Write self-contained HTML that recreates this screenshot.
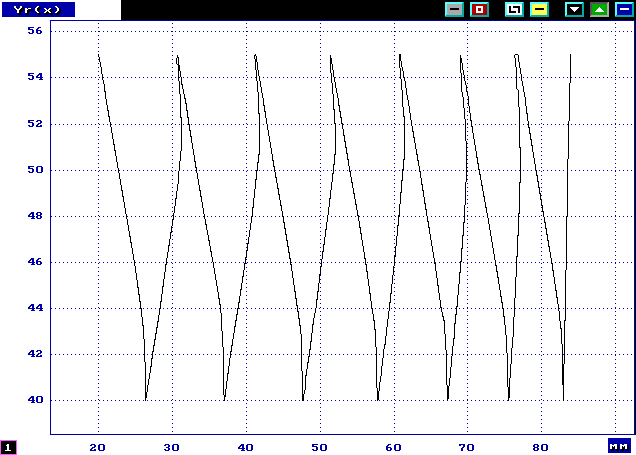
<!DOCTYPE html>
<html><head><meta charset="utf-8"><title>Yr(x)</title>
<style>html,body{margin:0;padding:0;background:#fff;width:636px;height:455px;overflow:hidden;font-family:"Liberation Sans",sans-serif}
svg{display:block}</style></head><body>
<svg width="636" height="455" viewBox="0 0 636 455" shape-rendering="crispEdges">
<rect width="636" height="455" fill="#fff"/>
<path fill="#000000" d="M121 0h515v1h-515zM121 1h515v1h-515zM121 2h324v1h-324zM464 2h6v1h-6zM489 2h16v1h-16zM524 2h6v1h-6zM549 2h16v1h-16zM584 2h6v1h-6zM609 2h6v1h-6zM634 2h2v1h-2zM121 3h324v1h-324zM464 3h6v1h-6zM489 3h16v1h-16zM524 3h6v1h-6zM549 3h16v1h-16zM584 3h6v1h-6zM609 3h6v1h-6zM634 3h2v1h-2zM121 4h324v1h-324zM464 4h6v1h-6zM489 4h16v1h-16zM524 4h6v1h-6zM549 4h16v1h-16zM567 4h15v1h-15zM584 4h6v1h-6zM609 4h6v1h-6zM634 4h2v1h-2zM121 5h324v1h-324zM464 5h6v1h-6zM489 5h16v1h-16zM524 5h6v1h-6zM549 5h16v1h-16zM567 5h15v1h-15zM584 5h6v1h-6zM609 5h6v1h-6zM634 5h2v1h-2zM121 6h324v1h-324zM464 6h6v1h-6zM489 6h16v1h-16zM509 6h2v1h-2zM513 6h7v1h-7zM524 6h6v1h-6zM549 6h16v1h-16zM567 6h15v1h-15zM584 6h6v1h-6zM609 6h6v1h-6zM634 6h2v1h-2zM16 7h2v1h-2zM22 7h2v1h-2zM38 7h3v1h-3zM58 7h1v1h-1zM121 7h324v1h-324zM464 7h6v1h-6zM489 7h16v1h-16zM509 7h2v1h-2zM513 7h7v1h-7zM524 7h6v1h-6zM549 7h16v1h-16zM567 7h3v1h-3zM579 7h3v1h-3zM584 7h6v1h-6zM609 7h6v1h-6zM634 7h2v1h-2zM17 8h1v1h-1zM21 8h3v1h-3zM37 8h4v1h-4zM56 8h1v1h-1zM59 8h1v1h-1zM121 8h324v1h-324zM450 8h9v1h-9zM464 8h6v1h-6zM489 8h16v1h-16zM509 8h2v1h-2zM518 8h2v1h-2zM524 8h6v1h-6zM535 8h9v1h-9zM549 8h16v1h-16zM567 8h4v1h-4zM578 8h4v1h-4zM584 8h6v1h-6zM609 8h6v1h-6zM634 8h2v1h-2zM15 9h1v1h-1zM20 9h4v1h-4zM28 9h5v1h-5zM37 9h3v1h-3zM47 9h1v1h-1zM50 9h3v1h-3zM59 9h2v1h-2zM121 9h324v1h-324zM450 9h9v1h-9zM464 9h6v1h-6zM489 9h16v1h-16zM509 9h2v1h-2zM518 9h2v1h-2zM524 9h6v1h-6zM535 9h9v1h-9zM549 9h16v1h-16zM567 9h5v1h-5zM577 9h5v1h-5zM584 9h6v1h-6zM609 9h6v1h-6zM634 9h2v1h-2zM16 10h1v1h-1zM19 10h4v1h-4zM27 10h6v1h-6zM37 10h2v1h-2zM45 10h1v1h-1zM49 10h4v1h-4zM59 10h2v1h-2zM121 10h324v1h-324zM464 10h6v1h-6zM489 10h16v1h-16zM509 10h2v1h-2zM518 10h2v1h-2zM524 10h6v1h-6zM549 10h16v1h-16zM567 10h6v1h-6zM576 10h6v1h-6zM584 10h6v1h-6zM609 10h6v1h-6zM634 10h2v1h-2zM19 11h3v1h-3zM27 11h3v1h-3zM38 11h1v1h-1zM47 11h1v1h-1zM50 11h2v1h-2zM58 11h3v1h-3zM121 11h324v1h-324zM464 11h6v1h-6zM489 11h16v1h-16zM509 11h7v1h-7zM518 11h2v1h-2zM524 11h6v1h-6zM549 11h16v1h-16zM567 11h7v1h-7zM575 11h7v1h-7zM584 11h6v1h-6zM609 11h6v1h-6zM634 11h2v1h-2zM19 12h2v1h-2zM27 12h2v1h-2zM36 12h1v1h-1zM39 12h1v1h-1zM46 12h3v1h-3zM51 12h1v1h-1zM57 12h4v1h-4zM121 12h324v1h-324zM464 12h6v1h-6zM489 12h16v1h-16zM509 12h7v1h-7zM518 12h2v1h-2zM524 12h6v1h-6zM549 12h16v1h-16zM567 12h15v1h-15zM584 12h6v1h-6zM609 12h6v1h-6zM634 12h2v1h-2zM18 13h3v1h-3zM26 13h3v1h-3zM37 13h4v1h-4zM45 13h8v1h-8zM56 13h4v1h-4zM121 13h324v1h-324zM464 13h6v1h-6zM489 13h16v1h-16zM524 13h6v1h-6zM549 13h16v1h-16zM567 13h15v1h-15zM584 13h6v1h-6zM609 13h6v1h-6zM634 13h2v1h-2zM18 14h3v1h-3zM26 14h3v1h-3zM38 14h3v1h-3zM45 14h3v1h-3zM50 14h3v1h-3zM56 14h3v1h-3zM121 14h324v1h-324zM464 14h6v1h-6zM489 14h16v1h-16zM524 14h6v1h-6zM549 14h16v1h-16zM567 14h15v1h-15zM584 14h6v1h-6zM609 14h6v1h-6zM634 14h2v1h-2zM121 15h324v1h-324zM464 15h6v1h-6zM489 15h16v1h-16zM524 15h6v1h-6zM549 15h16v1h-16zM584 15h6v1h-6zM609 15h6v1h-6zM634 15h2v1h-2zM121 16h324v1h-324zM464 16h6v1h-6zM489 16h16v1h-16zM524 16h6v1h-6zM549 16h16v1h-16zM584 16h6v1h-6zM609 16h6v1h-6zM634 16h2v1h-2zM121 17h515v1h-515zM121 18h515v1h-515zM121 19h515v1h-515zM635 20h1v1h-1zM635 21h1v1h-1zM635 22h1v1h-1zM635 23h1v1h-1zM635 24h1v1h-1zM635 25h1v1h-1zM635 26h1v1h-1zM635 27h1v1h-1zM635 28h1v1h-1zM635 29h1v1h-1zM635 30h1v1h-1zM635 31h1v1h-1zM635 32h1v1h-1zM635 33h1v1h-1zM635 34h1v1h-1zM635 35h1v1h-1zM635 36h1v1h-1zM635 37h1v1h-1zM635 38h1v1h-1zM635 39h1v1h-1zM635 40h1v1h-1zM635 41h1v1h-1zM635 42h1v1h-1zM635 43h1v1h-1zM635 44h1v1h-1zM635 45h1v1h-1zM635 46h1v1h-1zM635 47h1v1h-1zM635 48h1v1h-1zM635 49h1v1h-1zM635 50h1v1h-1zM635 51h1v1h-1zM635 52h1v1h-1zM635 53h1v1h-1zM98 54h1v1h-1zM255 54h1v1h-1zM399 54h2v1h-2zM515 54h3v1h-3zM570 54h1v1h-1zM635 54h1v1h-1zM98 55h1v1h-1zM177 55h1v1h-1zM254 55h2v1h-2zM330 55h1v1h-1zM399 55h2v1h-2zM460 55h1v1h-1zM514 55h1v1h-1zM518 55h1v1h-1zM570 55h1v1h-1zM635 55h1v1h-1zM98 56h1v1h-1zM177 56h1v1h-1zM254 56h1v1h-1zM256 56h1v1h-1zM330 56h1v1h-1zM399 56h2v1h-2zM460 56h1v1h-1zM514 56h1v1h-1zM518 56h1v1h-1zM570 56h1v1h-1zM635 56h1v1h-1zM99 57h1v1h-1zM177 57h2v1h-2zM254 57h1v1h-1zM256 57h1v1h-1zM330 57h1v1h-1zM399 57h2v1h-2zM460 57h1v1h-1zM514 57h1v1h-1zM518 57h1v1h-1zM570 57h1v1h-1zM635 57h1v1h-1zM99 58h1v1h-1zM176 58h1v1h-1zM178 58h1v1h-1zM254 58h1v1h-1zM256 58h1v1h-1zM330 58h2v1h-2zM399 58h2v1h-2zM460 58h2v1h-2zM515 58h1v1h-1zM518 58h1v1h-1zM570 58h1v1h-1zM635 58h1v1h-1zM99 59h1v1h-1zM176 59h1v1h-1zM178 59h1v1h-1zM255 59h2v1h-2zM330 59h2v1h-2zM399 59h2v1h-2zM460 59h2v1h-2zM515 59h1v1h-1zM518 59h1v1h-1zM570 59h1v1h-1zM635 59h1v1h-1zM99 60h1v1h-1zM176 60h1v1h-1zM178 60h1v1h-1zM255 60h2v1h-2zM330 60h2v1h-2zM399 60h2v1h-2zM460 60h2v1h-2zM515 60h1v1h-1zM518 60h1v1h-1zM570 60h1v1h-1zM635 60h1v1h-1zM99 61h1v1h-1zM176 61h1v1h-1zM178 61h1v1h-1zM255 61h2v1h-2zM330 61h2v1h-2zM399 61h1v1h-1zM401 61h1v1h-1zM460 61h2v1h-2zM515 61h1v1h-1zM518 61h1v1h-1zM570 61h1v1h-1zM635 61h1v1h-1zM100 62h1v1h-1zM176 62h1v1h-1zM178 62h1v1h-1zM255 62h1v1h-1zM257 62h1v1h-1zM330 62h2v1h-2zM399 62h1v1h-1zM401 62h1v1h-1zM460 62h2v1h-2zM515 62h1v1h-1zM519 62h1v1h-1zM570 62h1v1h-1zM635 62h1v1h-1zM100 63h1v1h-1zM176 63h1v1h-1zM178 63h1v1h-1zM255 63h1v1h-1zM257 63h1v1h-1zM330 63h2v1h-2zM399 63h1v1h-1zM401 63h1v1h-1zM460 63h1v1h-1zM462 63h1v1h-1zM515 63h1v1h-1zM519 63h1v1h-1zM570 63h1v1h-1zM635 63h1v1h-1zM100 64h1v1h-1zM177 64h2v1h-2zM255 64h1v1h-1zM257 64h1v1h-1zM330 64h1v1h-1zM332 64h1v1h-1zM399 64h1v1h-1zM401 64h1v1h-1zM460 64h1v1h-1zM462 64h1v1h-1zM515 64h1v1h-1zM519 64h1v1h-1zM570 64h1v1h-1zM635 64h1v1h-1zM100 65h1v1h-1zM178 65h2v1h-2zM255 65h1v1h-1zM257 65h1v1h-1zM330 65h1v1h-1zM332 65h1v1h-1zM399 65h1v1h-1zM401 65h1v1h-1zM460 65h1v1h-1zM462 65h1v1h-1zM515 65h1v1h-1zM519 65h1v1h-1zM570 65h1v1h-1zM635 65h1v1h-1zM100 66h1v1h-1zM178 66h2v1h-2zM255 66h1v1h-1zM257 66h1v1h-1zM330 66h1v1h-1zM332 66h1v1h-1zM399 66h1v1h-1zM401 66h1v1h-1zM460 66h1v1h-1zM462 66h1v1h-1zM515 66h1v1h-1zM519 66h1v1h-1zM570 66h1v1h-1zM635 66h1v1h-1zM101 67h1v1h-1zM178 67h2v1h-2zM255 67h1v1h-1zM257 67h1v1h-1zM330 67h1v1h-1zM332 67h1v1h-1zM399 67h1v1h-1zM402 67h1v1h-1zM460 67h1v1h-1zM462 67h1v1h-1zM516 67h1v1h-1zM519 67h1v1h-1zM570 67h1v1h-1zM635 67h1v1h-1zM101 68h1v1h-1zM178 68h2v1h-2zM255 68h1v1h-1zM257 68h1v1h-1zM330 68h1v1h-1zM332 68h1v1h-1zM400 68h1v1h-1zM402 68h1v1h-1zM460 68h1v1h-1zM462 68h1v1h-1zM516 68h1v1h-1zM520 68h1v1h-1zM570 68h1v1h-1zM635 68h1v1h-1zM101 69h1v1h-1zM178 69h2v1h-2zM255 69h1v1h-1zM257 69h1v1h-1zM330 69h1v1h-1zM332 69h1v1h-1zM400 69h1v1h-1zM402 69h1v1h-1zM460 69h1v1h-1zM462 69h1v1h-1zM516 69h1v1h-1zM520 69h1v1h-1zM570 69h1v1h-1zM635 69h1v1h-1zM101 70h1v1h-1zM178 70h2v1h-2zM256 70h1v1h-1zM258 70h1v1h-1zM330 70h1v1h-1zM333 70h1v1h-1zM400 70h1v1h-1zM402 70h1v1h-1zM460 70h1v1h-1zM463 70h1v1h-1zM516 70h1v1h-1zM520 70h1v1h-1zM570 70h1v1h-1zM635 70h1v1h-1zM101 71h1v1h-1zM178 71h1v1h-1zM180 71h1v1h-1zM256 71h1v1h-1zM258 71h1v1h-1zM330 71h1v1h-1zM333 71h1v1h-1zM400 71h1v1h-1zM403 71h1v1h-1zM460 71h1v1h-1zM463 71h1v1h-1zM516 71h1v1h-1zM520 71h1v1h-1zM570 71h1v1h-1zM635 71h1v1h-1zM101 72h1v1h-1zM178 72h1v1h-1zM180 72h1v1h-1zM256 72h1v1h-1zM258 72h1v1h-1zM330 72h1v1h-1zM333 72h1v1h-1zM400 72h1v1h-1zM403 72h1v1h-1zM460 72h1v1h-1zM463 72h1v1h-1zM516 72h1v1h-1zM520 72h1v1h-1zM570 72h1v1h-1zM635 72h1v1h-1zM101 73h1v1h-1zM178 73h1v1h-1zM180 73h1v1h-1zM256 73h1v1h-1zM258 73h1v1h-1zM331 73h1v1h-1zM333 73h1v1h-1zM400 73h1v1h-1zM403 73h1v1h-1zM461 73h1v1h-1zM463 73h1v1h-1zM516 73h1v1h-1zM520 73h1v1h-1zM570 73h1v1h-1zM635 73h1v1h-1zM102 74h1v1h-1zM178 74h1v1h-1zM180 74h1v1h-1zM256 74h1v1h-1zM258 74h1v1h-1zM331 74h1v1h-1zM333 74h1v1h-1zM400 74h1v1h-1zM403 74h1v1h-1zM461 74h1v1h-1zM463 74h1v1h-1zM516 74h1v1h-1zM521 74h1v1h-1zM570 74h1v1h-1zM635 74h1v1h-1zM102 75h1v1h-1zM178 75h1v1h-1zM180 75h1v1h-1zM256 75h1v1h-1zM258 75h1v1h-1zM331 75h1v1h-1zM333 75h1v1h-1zM400 75h1v1h-1zM403 75h1v1h-1zM461 75h1v1h-1zM464 75h1v1h-1zM516 75h1v1h-1zM521 75h1v1h-1zM570 75h1v1h-1zM635 75h1v1h-1zM102 76h1v1h-1zM178 76h1v1h-1zM180 76h1v1h-1zM256 76h1v1h-1zM259 76h1v1h-1zM331 76h1v1h-1zM333 76h1v1h-1zM400 76h1v1h-1zM403 76h1v1h-1zM461 76h1v1h-1zM464 76h1v1h-1zM516 76h1v1h-1zM521 76h1v1h-1zM570 76h1v1h-1zM635 76h1v1h-1zM102 77h1v1h-1zM178 77h1v1h-1zM181 77h1v1h-1zM256 77h1v1h-1zM259 77h1v1h-1zM331 77h1v1h-1zM334 77h1v1h-1zM400 77h1v1h-1zM404 77h1v1h-1zM461 77h1v1h-1zM464 77h1v1h-1zM516 77h1v1h-1zM521 77h1v1h-1zM570 77h1v1h-1zM635 77h1v1h-1zM102 78h1v1h-1zM178 78h1v1h-1zM181 78h1v1h-1zM256 78h1v1h-1zM259 78h1v1h-1zM331 78h1v1h-1zM334 78h1v1h-1zM400 78h1v1h-1zM404 78h1v1h-1zM461 78h1v1h-1zM464 78h1v1h-1zM516 78h1v1h-1zM521 78h1v1h-1zM570 78h1v1h-1zM635 78h1v1h-1zM102 79h1v1h-1zM178 79h1v1h-1zM181 79h1v1h-1zM256 79h1v1h-1zM259 79h1v1h-1zM331 79h1v1h-1zM334 79h1v1h-1zM401 79h1v1h-1zM404 79h1v1h-1zM461 79h1v1h-1zM464 79h1v1h-1zM516 79h1v1h-1zM521 79h1v1h-1zM570 79h1v1h-1zM635 79h1v1h-1zM103 80h1v1h-1zM178 80h1v1h-1zM181 80h1v1h-1zM256 80h1v1h-1zM259 80h1v1h-1zM331 80h1v1h-1zM334 80h1v1h-1zM401 80h1v1h-1zM404 80h1v1h-1zM461 80h1v1h-1zM464 80h1v1h-1zM516 80h1v1h-1zM521 80h1v1h-1zM570 80h1v1h-1zM635 80h1v1h-1zM103 81h1v1h-1zM179 81h1v1h-1zM181 81h1v1h-1zM257 81h1v1h-1zM260 81h1v1h-1zM331 81h1v1h-1zM334 81h1v1h-1zM401 81h1v1h-1zM405 81h1v1h-1zM461 81h1v1h-1zM465 81h1v1h-1zM516 81h1v1h-1zM522 81h1v1h-1zM570 81h1v1h-1zM635 81h1v1h-1zM103 82h1v1h-1zM179 82h1v1h-1zM181 82h1v1h-1zM257 82h1v1h-1zM260 82h1v1h-1zM331 82h1v1h-1zM335 82h1v1h-1zM401 82h1v1h-1zM405 82h1v1h-1zM461 82h1v1h-1zM465 82h1v1h-1zM516 82h1v1h-1zM522 82h1v1h-1zM570 82h1v1h-1zM635 82h1v1h-1zM103 83h1v1h-1zM179 83h1v1h-1zM181 83h1v1h-1zM257 83h1v1h-1zM260 83h1v1h-1zM332 83h1v1h-1zM335 83h1v1h-1zM401 83h1v1h-1zM405 83h1v1h-1zM461 83h1v1h-1zM465 83h1v1h-1zM516 83h1v1h-1zM522 83h1v1h-1zM569 83h1v1h-1zM635 83h1v1h-1zM104 84h1v1h-1zM179 84h1v1h-1zM181 84h2v1h-2zM257 84h1v1h-1zM260 84h1v1h-1zM332 84h1v1h-1zM335 84h1v1h-1zM401 84h1v1h-1zM405 84h1v1h-1zM461 84h1v1h-1zM465 84h1v1h-1zM516 84h1v1h-1zM522 84h1v1h-1zM569 84h1v1h-1zM635 84h1v1h-1zM104 85h1v1h-1zM179 85h1v1h-1zM182 85h1v1h-1zM257 85h1v1h-1zM260 85h1v1h-1zM332 85h1v1h-1zM335 85h1v1h-1zM401 85h1v1h-1zM405 85h1v1h-1zM461 85h1v1h-1zM466 85h1v1h-1zM516 85h1v1h-1zM522 85h1v1h-1zM569 85h1v1h-1zM635 85h1v1h-1zM104 86h1v1h-1zM179 86h1v1h-1zM182 86h1v1h-1zM257 86h1v1h-1zM260 86h1v1h-1zM332 86h1v1h-1zM335 86h1v1h-1zM401 86h1v1h-1zM405 86h1v1h-1zM461 86h1v1h-1zM466 86h1v1h-1zM516 86h1v1h-1zM523 86h1v1h-1zM569 86h1v1h-1zM635 86h1v1h-1zM104 87h1v1h-1zM179 87h1v1h-1zM182 87h1v1h-1zM257 87h1v1h-1zM261 87h1v1h-1zM332 87h1v1h-1zM335 87h1v1h-1zM401 87h1v1h-1zM405 87h1v1h-1zM461 87h1v1h-1zM466 87h1v1h-1zM516 87h1v1h-1zM523 87h1v1h-1zM569 87h1v1h-1zM635 87h1v1h-1zM104 88h1v1h-1zM179 88h1v1h-1zM182 88h1v1h-1zM257 88h1v1h-1zM261 88h1v1h-1zM332 88h1v1h-1zM336 88h1v1h-1zM401 88h1v1h-1zM406 88h1v1h-1zM461 88h1v1h-1zM466 88h1v1h-1zM516 88h1v1h-1zM523 88h1v1h-1zM569 88h1v1h-1zM635 88h1v1h-1zM104 89h1v1h-1zM179 89h1v1h-1zM183 89h1v1h-1zM257 89h1v1h-1zM261 89h1v1h-1zM332 89h1v1h-1zM336 89h1v1h-1zM401 89h1v1h-1zM406 89h1v1h-1zM461 89h1v1h-1zM466 89h1v1h-1zM517 89h1v1h-1zM523 89h1v1h-1zM569 89h1v1h-1zM635 89h1v1h-1zM104 90h1v1h-1zM179 90h1v1h-1zM183 90h1v1h-1zM257 90h1v1h-1zM261 90h1v1h-1zM332 90h1v1h-1zM336 90h1v1h-1zM402 90h1v1h-1zM406 90h1v1h-1zM461 90h1v1h-1zM466 90h1v1h-1zM518 90h1v1h-1zM523 90h1v1h-1zM569 90h1v1h-1zM635 90h1v1h-1zM104 91h2v1h-2zM179 91h1v1h-1zM183 91h1v1h-1zM257 91h1v1h-1zM261 91h1v1h-1zM332 91h1v1h-1zM336 91h1v1h-1zM402 91h1v1h-1zM406 91h1v1h-1zM461 91h1v1h-1zM466 91h1v1h-1zM518 91h1v1h-1zM523 91h1v1h-1zM569 91h1v1h-1zM635 91h1v1h-1zM105 92h1v1h-1zM179 92h1v1h-1zM183 92h1v1h-1zM258 92h1v1h-1zM261 92h1v1h-1zM332 92h1v1h-1zM336 92h1v1h-1zM402 92h1v1h-1zM406 92h1v1h-1zM462 92h1v1h-1zM467 92h1v1h-1zM518 92h1v1h-1zM524 92h1v1h-1zM569 92h1v1h-1zM635 92h1v1h-1zM105 93h1v1h-1zM179 93h1v1h-1zM183 93h1v1h-1zM258 93h1v1h-1zM262 93h1v1h-1zM332 93h1v1h-1zM337 93h1v1h-1zM402 93h1v1h-1zM406 93h1v1h-1zM462 93h1v1h-1zM467 93h1v1h-1zM518 93h1v1h-1zM524 93h1v1h-1zM569 93h1v1h-1zM635 93h1v1h-1zM105 94h1v1h-1zM180 94h1v1h-1zM184 94h1v1h-1zM258 94h1v1h-1zM262 94h1v1h-1zM333 94h1v1h-1zM337 94h1v1h-1zM402 94h1v1h-1zM406 94h1v1h-1zM462 94h1v1h-1zM467 94h1v1h-1zM518 94h1v1h-1zM524 94h1v1h-1zM569 94h1v1h-1zM635 94h1v1h-1zM105 95h1v1h-1zM180 95h1v1h-1zM184 95h1v1h-1zM258 95h1v1h-1zM262 95h1v1h-1zM333 95h1v1h-1zM337 95h1v1h-1zM402 95h1v1h-1zM407 95h1v1h-1zM462 95h1v1h-1zM467 95h1v1h-1zM518 95h1v1h-1zM524 95h1v1h-1zM569 95h1v1h-1zM635 95h1v1h-1zM105 96h1v1h-1zM180 96h1v1h-1zM184 96h1v1h-1zM258 96h1v1h-1zM262 96h1v1h-1zM333 96h1v1h-1zM337 96h1v1h-1zM402 96h1v1h-1zM407 96h1v1h-1zM462 96h1v1h-1zM468 96h1v1h-1zM518 96h1v1h-1zM524 96h1v1h-1zM569 96h1v1h-1zM635 96h1v1h-1zM105 97h1v1h-1zM180 97h1v1h-1zM184 97h1v1h-1zM258 97h1v1h-1zM262 97h1v1h-1zM333 97h1v1h-1zM337 97h1v1h-1zM402 97h1v1h-1zM407 97h1v1h-1zM463 97h1v1h-1zM468 97h1v1h-1zM518 97h1v1h-1zM525 97h1v1h-1zM569 97h1v1h-1zM635 97h1v1h-1zM105 98h1v1h-1zM180 98h1v1h-1zM184 98h2v1h-2zM258 98h1v1h-1zM263 98h1v1h-1zM333 98h1v1h-1zM338 98h1v1h-1zM402 98h1v1h-1zM407 98h1v1h-1zM463 98h1v1h-1zM468 98h1v1h-1zM518 98h1v1h-1zM525 98h1v1h-1zM569 98h1v1h-1zM635 98h1v1h-1zM106 99h1v1h-1zM180 99h1v1h-1zM185 99h1v1h-1zM258 99h1v1h-1zM263 99h1v1h-1zM333 99h1v1h-1zM338 99h1v1h-1zM402 99h1v1h-1zM407 99h1v1h-1zM463 99h1v1h-1zM468 99h1v1h-1zM518 99h1v1h-1zM525 99h1v1h-1zM569 99h1v1h-1zM635 99h1v1h-1zM106 100h1v1h-1zM180 100h1v1h-1zM185 100h1v1h-1zM258 100h1v1h-1zM263 100h1v1h-1zM333 100h1v1h-1zM338 100h1v1h-1zM402 100h1v1h-1zM408 100h1v1h-1zM463 100h1v1h-1zM468 100h1v1h-1zM518 100h1v1h-1zM525 100h1v1h-1zM569 100h1v1h-1zM635 100h1v1h-1zM106 101h1v1h-1zM180 101h1v1h-1zM185 101h1v1h-1zM258 101h1v1h-1zM263 101h1v1h-1zM333 101h1v1h-1zM338 101h1v1h-1zM402 101h1v1h-1zM408 101h1v1h-1zM463 101h1v1h-1zM468 101h1v1h-1zM518 101h1v1h-1zM525 101h1v1h-1zM569 101h1v1h-1zM635 101h1v1h-1zM106 102h1v1h-1zM180 102h1v1h-1zM185 102h1v1h-1zM258 102h1v1h-1zM263 102h1v1h-1zM333 102h1v1h-1zM338 102h1v1h-1zM402 102h1v1h-1zM408 102h1v1h-1zM463 102h1v1h-1zM468 102h1v1h-1zM518 102h1v1h-1zM525 102h1v1h-1zM569 102h1v1h-1zM635 102h1v1h-1zM106 103h1v1h-1zM180 103h1v1h-1zM185 103h2v1h-2zM258 103h1v1h-1zM263 103h1v1h-1zM333 103h1v1h-1zM338 103h1v1h-1zM402 103h1v1h-1zM408 103h1v1h-1zM463 103h1v1h-1zM468 103h1v1h-1zM518 103h1v1h-1zM525 103h1v1h-1zM569 103h1v1h-1zM635 103h1v1h-1zM106 104h1v1h-1zM180 104h1v1h-1zM186 104h1v1h-1zM258 104h1v1h-1zM263 104h1v1h-1zM333 104h1v1h-1zM338 104h1v1h-1zM402 104h1v1h-1zM408 104h1v1h-1zM463 104h1v1h-1zM468 104h1v1h-1zM518 104h1v1h-1zM525 104h1v1h-1zM569 104h1v1h-1zM635 104h1v1h-1zM107 105h1v1h-1zM180 105h1v1h-1zM186 105h1v1h-1zM258 105h1v1h-1zM263 105h2v1h-2zM333 105h1v1h-1zM338 105h2v1h-2zM402 105h1v1h-1zM408 105h1v1h-1zM463 105h1v1h-1zM468 105h1v1h-1zM518 105h1v1h-1zM525 105h1v1h-1zM569 105h1v1h-1zM635 105h1v1h-1zM107 106h1v1h-1zM180 106h1v1h-1zM186 106h1v1h-1zM258 106h1v1h-1zM264 106h1v1h-1zM333 106h1v1h-1zM339 106h1v1h-1zM402 106h1v1h-1zM409 106h1v1h-1zM463 106h1v1h-1zM469 106h1v1h-1zM518 106h1v1h-1zM526 106h1v1h-1zM569 106h1v1h-1zM635 106h1v1h-1zM107 107h1v1h-1zM180 107h1v1h-1zM186 107h1v1h-1zM258 107h1v1h-1zM264 107h1v1h-1zM333 107h1v1h-1zM339 107h1v1h-1zM403 107h1v1h-1zM409 107h1v1h-1zM463 107h1v1h-1zM469 107h1v1h-1zM519 107h1v1h-1zM526 107h1v1h-1zM569 107h1v1h-1zM635 107h1v1h-1zM107 108h1v1h-1zM180 108h1v1h-1zM186 108h1v1h-1zM258 108h1v1h-1zM264 108h1v1h-1zM333 108h1v1h-1zM339 108h1v1h-1zM403 108h1v1h-1zM409 108h1v1h-1zM464 108h1v1h-1zM469 108h1v1h-1zM519 108h1v1h-1zM526 108h1v1h-1zM569 108h1v1h-1zM635 108h1v1h-1zM107 109h1v1h-1zM180 109h1v1h-1zM186 109h1v1h-1zM258 109h1v1h-1zM264 109h1v1h-1zM333 109h2v1h-2zM339 109h1v1h-1zM403 109h1v1h-1zM409 109h1v1h-1zM464 109h1v1h-1zM469 109h1v1h-1zM519 109h1v1h-1zM526 109h1v1h-1zM569 109h1v1h-1zM635 109h1v1h-1zM107 110h2v1h-2zM180 110h1v1h-1zM186 110h2v1h-2zM258 110h1v1h-1zM264 110h1v1h-1zM334 110h1v1h-1zM339 110h1v1h-1zM403 110h1v1h-1zM409 110h1v1h-1zM464 110h1v1h-1zM469 110h1v1h-1zM519 110h1v1h-1zM526 110h1v1h-1zM569 110h1v1h-1zM635 110h1v1h-1zM108 111h1v1h-1zM180 111h1v1h-1zM187 111h1v1h-1zM258 111h1v1h-1zM264 111h2v1h-2zM334 111h1v1h-1zM339 111h2v1h-2zM403 111h1v1h-1zM409 111h1v1h-1zM464 111h1v1h-1zM469 111h1v1h-1zM519 111h1v1h-1zM526 111h1v1h-1zM569 111h1v1h-1zM635 111h1v1h-1zM108 112h1v1h-1zM180 112h1v1h-1zM187 112h1v1h-1zM258 112h1v1h-1zM265 112h1v1h-1zM334 112h1v1h-1zM340 112h1v1h-1zM403 112h1v1h-1zM409 112h1v1h-1zM464 112h1v1h-1zM469 112h1v1h-1zM519 112h1v1h-1zM526 112h1v1h-1zM569 112h1v1h-1zM635 112h1v1h-1zM108 113h1v1h-1zM180 113h1v1h-1zM187 113h1v1h-1zM258 113h2v1h-2zM265 113h1v1h-1zM334 113h1v1h-1zM340 113h1v1h-1zM403 113h1v1h-1zM410 113h1v1h-1zM464 113h1v1h-1zM470 113h1v1h-1zM519 113h1v1h-1zM526 113h2v1h-2zM569 113h1v1h-1zM635 113h1v1h-1zM108 114h1v1h-1zM180 114h1v1h-1zM187 114h1v1h-1zM259 114h1v1h-1zM265 114h1v1h-1zM334 114h1v1h-1zM340 114h1v1h-1zM403 114h1v1h-1zM410 114h1v1h-1zM464 114h1v1h-1zM470 114h1v1h-1zM519 114h1v1h-1zM527 114h1v1h-1zM569 114h1v1h-1zM635 114h1v1h-1zM108 115h1v1h-1zM180 115h1v1h-1zM187 115h1v1h-1zM259 115h1v1h-1zM265 115h1v1h-1zM334 115h1v1h-1zM340 115h1v1h-1zM403 115h1v1h-1zM410 115h1v1h-1zM464 115h1v1h-1zM470 115h1v1h-1zM519 115h1v1h-1zM527 115h1v1h-1zM569 115h1v1h-1zM635 115h1v1h-1zM108 116h2v1h-2zM180 116h1v1h-1zM187 116h1v1h-1zM259 116h1v1h-1zM265 116h1v1h-1zM334 116h1v1h-1zM340 116h1v1h-1zM403 116h2v1h-2zM410 116h1v1h-1zM464 116h1v1h-1zM470 116h1v1h-1zM519 116h1v1h-1zM527 116h1v1h-1zM569 116h1v1h-1zM635 116h1v1h-1zM109 117h1v1h-1zM180 117h2v1h-2zM187 117h2v1h-2zM259 117h1v1h-1zM265 117h1v1h-1zM334 117h1v1h-1zM340 117h2v1h-2zM404 117h1v1h-1zM410 117h1v1h-1zM464 117h1v1h-1zM470 117h1v1h-1zM519 117h1v1h-1zM527 117h1v1h-1zM569 117h1v1h-1zM635 117h1v1h-1zM109 118h1v1h-1zM181 118h1v1h-1zM188 118h1v1h-1zM259 118h1v1h-1zM266 118h1v1h-1zM334 118h1v1h-1zM341 118h1v1h-1zM404 118h1v1h-1zM410 118h1v1h-1zM464 118h1v1h-1zM470 118h1v1h-1zM519 118h1v1h-1zM527 118h1v1h-1zM569 118h1v1h-1zM635 118h1v1h-1zM109 119h1v1h-1zM181 119h1v1h-1zM188 119h1v1h-1zM259 119h1v1h-1zM266 119h1v1h-1zM334 119h1v1h-1zM341 119h1v1h-1zM404 119h1v1h-1zM410 119h1v1h-1zM465 119h1v1h-1zM470 119h1v1h-1zM519 119h1v1h-1zM527 119h1v1h-1zM569 119h1v1h-1zM635 119h1v1h-1zM109 120h1v1h-1zM181 120h1v1h-1zM188 120h1v1h-1zM259 120h1v1h-1zM266 120h1v1h-1zM334 120h1v1h-1zM341 120h1v1h-1zM404 120h1v1h-1zM411 120h1v1h-1zM465 120h1v1h-1zM470 120h2v1h-2zM519 120h1v1h-1zM527 120h1v1h-1zM569 120h1v1h-1zM635 120h1v1h-1zM109 121h1v1h-1zM181 121h1v1h-1zM188 121h1v1h-1zM259 121h1v1h-1zM266 121h1v1h-1zM334 121h1v1h-1zM341 121h1v1h-1zM404 121h1v1h-1zM411 121h1v1h-1zM465 121h1v1h-1zM471 121h1v1h-1zM519 121h1v1h-1zM528 121h1v1h-1zM568 121h1v1h-1zM635 121h1v1h-1zM110 122h1v1h-1zM181 122h1v1h-1zM188 122h1v1h-1zM259 122h1v1h-1zM266 122h1v1h-1zM334 122h1v1h-1zM341 122h1v1h-1zM404 122h1v1h-1zM411 122h1v1h-1zM465 122h1v1h-1zM471 122h1v1h-1zM519 122h1v1h-1zM528 122h1v1h-1zM568 122h1v1h-1zM635 122h1v1h-1zM110 123h1v1h-1zM181 123h1v1h-1zM188 123h1v1h-1zM259 123h1v1h-1zM266 123h1v1h-1zM334 123h2v1h-2zM341 123h2v1h-2zM404 123h1v1h-1zM411 123h1v1h-1zM465 123h1v1h-1zM471 123h1v1h-1zM519 123h1v1h-1zM528 123h1v1h-1zM568 123h1v1h-1zM635 123h1v1h-1zM110 124h1v1h-1zM181 124h1v1h-1zM188 124h2v1h-2zM259 124h1v1h-1zM267 124h1v1h-1zM335 124h1v1h-1zM342 124h1v1h-1zM404 124h1v1h-1zM411 124h1v1h-1zM465 124h1v1h-1zM471 124h1v1h-1zM519 124h1v1h-1zM528 124h1v1h-1zM568 124h1v1h-1zM635 124h1v1h-1zM110 125h1v1h-1zM181 125h1v1h-1zM189 125h1v1h-1zM259 125h1v1h-1zM267 125h1v1h-1zM335 125h1v1h-1zM342 125h1v1h-1zM404 125h1v1h-1zM411 125h1v1h-1zM465 125h1v1h-1zM471 125h1v1h-1zM519 125h1v1h-1zM528 125h1v1h-1zM568 125h1v1h-1zM635 125h1v1h-1zM110 126h1v1h-1zM181 126h1v1h-1zM189 126h1v1h-1zM259 126h1v1h-1zM267 126h1v1h-1zM335 126h1v1h-1zM342 126h1v1h-1zM404 126h1v1h-1zM412 126h1v1h-1zM465 126h1v1h-1zM471 126h2v1h-2zM519 126h1v1h-1zM528 126h1v1h-1zM568 126h1v1h-1zM635 126h1v1h-1zM111 127h1v1h-1zM181 127h1v1h-1zM189 127h1v1h-1zM259 127h1v1h-1zM267 127h1v1h-1zM335 127h1v1h-1zM342 127h1v1h-1zM404 127h1v1h-1zM412 127h1v1h-1zM465 127h1v1h-1zM472 127h1v1h-1zM519 127h1v1h-1zM528 127h2v1h-2zM568 127h1v1h-1zM635 127h1v1h-1zM111 128h1v1h-1zM181 128h1v1h-1zM189 128h1v1h-1zM259 128h1v1h-1zM267 128h1v1h-1zM335 128h1v1h-1zM342 128h1v1h-1zM404 128h1v1h-1zM412 128h1v1h-1zM465 128h1v1h-1zM472 128h1v1h-1zM519 128h1v1h-1zM529 128h1v1h-1zM568 128h1v1h-1zM635 128h1v1h-1zM111 129h1v1h-1zM181 129h1v1h-1zM189 129h1v1h-1zM259 129h1v1h-1zM267 129h1v1h-1zM335 129h1v1h-1zM343 129h1v1h-1zM404 129h1v1h-1zM412 129h1v1h-1zM465 129h1v1h-1zM472 129h1v1h-1zM519 129h1v1h-1zM529 129h1v1h-1zM568 129h1v1h-1zM635 129h1v1h-1zM111 130h1v1h-1zM181 130h1v1h-1zM189 130h2v1h-2zM259 130h1v1h-1zM268 130h1v1h-1zM335 130h1v1h-1zM343 130h1v1h-1zM404 130h1v1h-1zM412 130h1v1h-1zM465 130h1v1h-1zM472 130h1v1h-1zM519 130h1v1h-1zM529 130h1v1h-1zM568 130h1v1h-1zM635 130h1v1h-1zM111 131h1v1h-1zM181 131h1v1h-1zM190 131h1v1h-1zM259 131h1v1h-1zM268 131h1v1h-1zM335 131h1v1h-1zM343 131h1v1h-1zM404 131h1v1h-1zM412 131h2v1h-2zM465 131h1v1h-1zM472 131h1v1h-1zM519 131h1v1h-1zM529 131h1v1h-1zM568 131h1v1h-1zM635 131h1v1h-1zM111 132h1v1h-1zM181 132h1v1h-1zM190 132h1v1h-1zM259 132h1v1h-1zM268 132h1v1h-1zM335 132h1v1h-1zM343 132h1v1h-1zM404 132h1v1h-1zM413 132h1v1h-1zM465 132h1v1h-1zM472 132h1v1h-1zM519 132h1v1h-1zM529 132h1v1h-1zM568 132h1v1h-1zM635 132h1v1h-1zM112 133h1v1h-1zM181 133h1v1h-1zM190 133h1v1h-1zM259 133h1v1h-1zM268 133h1v1h-1zM335 133h1v1h-1zM343 133h1v1h-1zM404 133h1v1h-1zM413 133h1v1h-1zM465 133h1v1h-1zM473 133h1v1h-1zM519 133h1v1h-1zM529 133h2v1h-2zM568 133h1v1h-1zM635 133h1v1h-1zM112 134h1v1h-1zM181 134h1v1h-1zM190 134h1v1h-1zM259 134h1v1h-1zM268 134h1v1h-1zM335 134h1v1h-1zM343 134h1v1h-1zM404 134h1v1h-1zM413 134h1v1h-1zM465 134h1v1h-1zM473 134h1v1h-1zM519 134h1v1h-1zM530 134h1v1h-1zM568 134h1v1h-1zM635 134h1v1h-1zM112 135h1v1h-1zM181 135h1v1h-1zM190 135h1v1h-1zM259 135h1v1h-1zM268 135h1v1h-1zM335 135h1v1h-1zM343 135h2v1h-2zM404 135h1v1h-1zM413 135h1v1h-1zM465 135h1v1h-1zM473 135h1v1h-1zM519 135h1v1h-1zM530 135h1v1h-1zM568 135h1v1h-1zM635 135h1v1h-1zM112 136h1v1h-1zM181 136h1v1h-1zM190 136h2v1h-2zM259 136h1v1h-1zM269 136h1v1h-1zM335 136h1v1h-1zM344 136h1v1h-1zM404 136h1v1h-1zM413 136h1v1h-1zM465 136h1v1h-1zM473 136h1v1h-1zM519 136h1v1h-1zM530 136h1v1h-1zM568 136h1v1h-1zM635 136h1v1h-1zM112 137h1v1h-1zM181 137h1v1h-1zM191 137h1v1h-1zM259 137h1v1h-1zM269 137h1v1h-1zM335 137h1v1h-1zM344 137h1v1h-1zM404 137h1v1h-1zM413 137h2v1h-2zM465 137h1v1h-1zM473 137h1v1h-1zM519 137h1v1h-1zM530 137h1v1h-1zM568 137h1v1h-1zM635 137h1v1h-1zM112 138h1v1h-1zM181 138h1v1h-1zM191 138h1v1h-1zM259 138h1v1h-1zM269 138h1v1h-1zM335 138h1v1h-1zM344 138h1v1h-1zM404 138h1v1h-1zM414 138h1v1h-1zM465 138h1v1h-1zM473 138h1v1h-1zM519 138h1v1h-1zM530 138h1v1h-1zM568 138h1v1h-1zM635 138h1v1h-1zM113 139h1v1h-1zM181 139h1v1h-1zM191 139h1v1h-1zM259 139h1v1h-1zM269 139h1v1h-1zM335 139h1v1h-1zM344 139h1v1h-1zM404 139h1v1h-1zM414 139h1v1h-1zM465 139h1v1h-1zM474 139h1v1h-1zM519 139h1v1h-1zM530 139h2v1h-2zM568 139h1v1h-1zM635 139h1v1h-1zM113 140h1v1h-1zM181 140h1v1h-1zM191 140h1v1h-1zM259 140h1v1h-1zM269 140h1v1h-1zM335 140h1v1h-1zM344 140h1v1h-1zM404 140h1v1h-1zM414 140h1v1h-1zM465 140h1v1h-1zM474 140h1v1h-1zM519 140h1v1h-1zM531 140h1v1h-1zM568 140h1v1h-1zM635 140h1v1h-1zM113 141h1v1h-1zM181 141h1v1h-1zM191 141h1v1h-1zM259 141h1v1h-1zM269 141h1v1h-1zM335 141h1v1h-1zM344 141h2v1h-2zM404 141h1v1h-1zM414 141h1v1h-1zM466 141h1v1h-1zM474 141h1v1h-1zM519 141h1v1h-1zM531 141h1v1h-1zM568 141h1v1h-1zM635 141h1v1h-1zM113 142h1v1h-1zM181 142h1v1h-1zM191 142h1v1h-1zM259 142h1v1h-1zM270 142h1v1h-1zM335 142h1v1h-1zM345 142h1v1h-1zM404 142h1v1h-1zM414 142h1v1h-1zM466 142h1v1h-1zM474 142h1v1h-1zM519 142h1v1h-1zM531 142h1v1h-1zM568 142h1v1h-1zM635 142h1v1h-1zM113 143h1v1h-1zM181 143h1v1h-1zM192 143h1v1h-1zM259 143h1v1h-1zM270 143h1v1h-1zM335 143h1v1h-1zM345 143h1v1h-1zM404 143h1v1h-1zM415 143h1v1h-1zM466 143h1v1h-1zM474 143h1v1h-1zM519 143h1v1h-1zM531 143h1v1h-1zM568 143h1v1h-1zM635 143h1v1h-1zM113 144h2v1h-2zM181 144h1v1h-1zM192 144h1v1h-1zM259 144h1v1h-1zM270 144h1v1h-1zM335 144h1v1h-1zM345 144h1v1h-1zM404 144h1v1h-1zM415 144h1v1h-1zM466 144h1v1h-1zM474 144h1v1h-1zM519 144h1v1h-1zM531 144h1v1h-1zM568 144h1v1h-1zM635 144h1v1h-1zM114 145h1v1h-1zM181 145h1v1h-1zM192 145h1v1h-1zM259 145h1v1h-1zM270 145h1v1h-1zM335 145h1v1h-1zM345 145h1v1h-1zM404 145h1v1h-1zM415 145h1v1h-1zM466 145h1v1h-1zM475 145h1v1h-1zM519 145h1v1h-1zM531 145h2v1h-2zM568 145h1v1h-1zM635 145h1v1h-1zM114 146h1v1h-1zM181 146h1v1h-1zM192 146h1v1h-1zM259 146h1v1h-1zM270 146h1v1h-1zM335 146h1v1h-1zM345 146h1v1h-1zM404 146h1v1h-1zM415 146h1v1h-1zM466 146h1v1h-1zM475 146h1v1h-1zM519 146h1v1h-1zM532 146h1v1h-1zM568 146h1v1h-1zM635 146h1v1h-1zM114 147h1v1h-1zM181 147h1v1h-1zM192 147h1v1h-1zM259 147h1v1h-1zM270 147h1v1h-1zM335 147h1v1h-1zM345 147h2v1h-2zM404 147h1v1h-1zM415 147h1v1h-1zM466 147h1v1h-1zM475 147h1v1h-1zM519 147h2v1h-2zM532 147h1v1h-1zM568 147h1v1h-1zM635 147h1v1h-1zM114 148h1v1h-1zM181 148h1v1h-1zM192 148h1v1h-1zM259 148h1v1h-1zM271 148h1v1h-1zM335 148h1v1h-1zM346 148h1v1h-1zM404 148h1v1h-1zM415 148h1v1h-1zM466 148h1v1h-1zM475 148h1v1h-1zM520 148h1v1h-1zM532 148h1v1h-1zM568 148h1v1h-1zM635 148h1v1h-1zM114 149h1v1h-1zM181 149h1v1h-1zM193 149h1v1h-1zM259 149h1v1h-1zM271 149h1v1h-1zM335 149h1v1h-1zM346 149h1v1h-1zM404 149h1v1h-1zM416 149h1v1h-1zM466 149h1v1h-1zM475 149h1v1h-1zM520 149h1v1h-1zM532 149h1v1h-1zM568 149h1v1h-1zM635 149h1v1h-1zM114 150h2v1h-2zM181 150h1v1h-1zM193 150h1v1h-1zM259 150h1v1h-1zM271 150h1v1h-1zM335 150h1v1h-1zM346 150h1v1h-1zM404 150h1v1h-1zM416 150h1v1h-1zM466 150h1v1h-1zM475 150h1v1h-1zM520 150h1v1h-1zM532 150h1v1h-1zM568 150h1v1h-1zM635 150h1v1h-1zM115 151h1v1h-1zM180 151h1v1h-1zM193 151h1v1h-1zM259 151h1v1h-1zM271 151h1v1h-1zM335 151h1v1h-1zM346 151h1v1h-1zM404 151h1v1h-1zM416 151h1v1h-1zM466 151h1v1h-1zM476 151h1v1h-1zM520 151h1v1h-1zM532 151h1v1h-1zM568 151h1v1h-1zM635 151h1v1h-1zM115 152h1v1h-1zM180 152h1v1h-1zM193 152h1v1h-1zM259 152h1v1h-1zM271 152h1v1h-1zM335 152h1v1h-1zM346 152h1v1h-1zM404 152h1v1h-1zM416 152h1v1h-1zM466 152h1v1h-1zM476 152h1v1h-1zM520 152h1v1h-1zM533 152h1v1h-1zM568 152h1v1h-1zM635 152h1v1h-1zM115 153h1v1h-1zM180 153h1v1h-1zM193 153h1v1h-1zM259 153h1v1h-1zM271 153h1v1h-1zM335 153h1v1h-1zM346 153h2v1h-2zM404 153h1v1h-1zM416 153h1v1h-1zM466 153h1v1h-1zM476 153h1v1h-1zM520 153h1v1h-1zM533 153h1v1h-1zM568 153h1v1h-1zM635 153h1v1h-1zM115 154h1v1h-1zM180 154h1v1h-1zM193 154h1v1h-1zM258 154h2v1h-2zM272 154h1v1h-1zM334 154h2v1h-2zM347 154h1v1h-1zM404 154h1v1h-1zM416 154h2v1h-2zM466 154h1v1h-1zM476 154h1v1h-1zM520 154h1v1h-1zM533 154h1v1h-1zM568 154h1v1h-1zM635 154h1v1h-1zM115 155h1v1h-1zM180 155h1v1h-1zM194 155h1v1h-1zM258 155h1v1h-1zM272 155h1v1h-1zM334 155h1v1h-1zM347 155h1v1h-1zM404 155h1v1h-1zM417 155h1v1h-1zM466 155h1v1h-1zM476 155h1v1h-1zM520 155h1v1h-1zM533 155h1v1h-1zM568 155h1v1h-1zM635 155h1v1h-1zM116 156h1v1h-1zM180 156h1v1h-1zM194 156h1v1h-1zM258 156h1v1h-1zM272 156h1v1h-1zM334 156h1v1h-1zM347 156h1v1h-1zM404 156h1v1h-1zM417 156h1v1h-1zM466 156h1v1h-1zM476 156h1v1h-1zM520 156h1v1h-1zM533 156h1v1h-1zM568 156h1v1h-1zM635 156h1v1h-1zM116 157h1v1h-1zM180 157h1v1h-1zM194 157h1v1h-1zM258 157h1v1h-1zM272 157h1v1h-1zM334 157h1v1h-1zM347 157h1v1h-1zM404 157h1v1h-1zM417 157h1v1h-1zM466 157h1v1h-1zM476 157h2v1h-2zM520 157h1v1h-1zM533 157h1v1h-1zM568 157h1v1h-1zM635 157h1v1h-1zM116 158h1v1h-1zM180 158h1v1h-1zM194 158h1v1h-1zM258 158h1v1h-1zM272 158h1v1h-1zM334 158h1v1h-1zM347 158h1v1h-1zM404 158h1v1h-1zM417 158h1v1h-1zM466 158h1v1h-1zM477 158h1v1h-1zM520 158h1v1h-1zM534 158h1v1h-1zM568 158h1v1h-1zM635 158h1v1h-1zM116 159h1v1h-1zM180 159h1v1h-1zM194 159h1v1h-1zM258 159h1v1h-1zM272 159h1v1h-1zM334 159h1v1h-1zM347 159h2v1h-2zM403 159h2v1h-2zM417 159h1v1h-1zM466 159h1v1h-1zM477 159h1v1h-1zM520 159h1v1h-1zM534 159h1v1h-1zM567 159h1v1h-1zM635 159h1v1h-1zM116 160h1v1h-1zM180 160h1v1h-1zM194 160h1v1h-1zM258 160h1v1h-1zM272 160h2v1h-2zM334 160h1v1h-1zM348 160h1v1h-1zM403 160h1v1h-1zM417 160h2v1h-2zM466 160h1v1h-1zM477 160h1v1h-1zM520 160h1v1h-1zM534 160h1v1h-1zM567 160h1v1h-1zM635 160h1v1h-1zM116 161h1v1h-1zM179 161h1v1h-1zM194 161h2v1h-2zM258 161h1v1h-1zM273 161h1v1h-1zM334 161h1v1h-1zM348 161h1v1h-1zM403 161h1v1h-1zM418 161h1v1h-1zM466 161h1v1h-1zM477 161h1v1h-1zM520 161h1v1h-1zM534 161h1v1h-1zM567 161h1v1h-1zM635 161h1v1h-1zM117 162h1v1h-1zM179 162h1v1h-1zM195 162h1v1h-1zM257 162h2v1h-2zM273 162h1v1h-1zM334 162h1v1h-1zM348 162h1v1h-1zM403 162h1v1h-1zM418 162h1v1h-1zM466 162h1v1h-1zM477 162h1v1h-1zM520 162h1v1h-1zM534 162h1v1h-1zM567 162h1v1h-1zM635 162h1v1h-1zM117 163h1v1h-1zM179 163h1v1h-1zM195 163h1v1h-1zM257 163h1v1h-1zM273 163h1v1h-1zM334 163h1v1h-1zM348 163h1v1h-1zM403 163h1v1h-1zM418 163h1v1h-1zM466 163h1v1h-1zM477 163h2v1h-2zM520 163h1v1h-1zM534 163h1v1h-1zM567 163h1v1h-1zM635 163h1v1h-1zM117 164h1v1h-1zM179 164h1v1h-1zM195 164h1v1h-1zM257 164h1v1h-1zM273 164h1v1h-1zM333 164h2v1h-2zM348 164h1v1h-1zM403 164h1v1h-1zM418 164h1v1h-1zM466 164h1v1h-1zM478 164h1v1h-1zM520 164h1v1h-1zM535 164h1v1h-1zM567 164h1v1h-1zM635 164h1v1h-1zM117 165h1v1h-1zM179 165h1v1h-1zM195 165h1v1h-1zM257 165h1v1h-1zM273 165h1v1h-1zM333 165h1v1h-1zM348 165h1v1h-1zM403 165h1v1h-1zM418 165h1v1h-1zM466 165h1v1h-1zM478 165h1v1h-1zM520 165h1v1h-1zM535 165h1v1h-1zM567 165h1v1h-1zM635 165h1v1h-1zM117 166h1v1h-1zM179 166h1v1h-1zM195 166h1v1h-1zM257 166h1v1h-1zM273 166h2v1h-2zM333 166h1v1h-1zM349 166h1v1h-1zM403 166h1v1h-1zM419 166h1v1h-1zM466 166h1v1h-1zM478 166h1v1h-1zM520 166h1v1h-1zM535 166h1v1h-1zM567 166h1v1h-1zM635 166h1v1h-1zM117 167h1v1h-1zM179 167h1v1h-1zM195 167h2v1h-2zM257 167h1v1h-1zM274 167h1v1h-1zM333 167h1v1h-1zM349 167h1v1h-1zM403 167h1v1h-1zM419 167h1v1h-1zM466 167h1v1h-1zM478 167h1v1h-1zM520 167h1v1h-1zM535 167h1v1h-1zM567 167h1v1h-1zM635 167h1v1h-1zM118 168h1v1h-1zM179 168h1v1h-1zM196 168h1v1h-1zM257 168h1v1h-1zM274 168h1v1h-1zM333 168h1v1h-1zM349 168h1v1h-1zM403 168h1v1h-1zM419 168h1v1h-1zM466 168h1v1h-1zM478 168h1v1h-1zM520 168h1v1h-1zM535 168h1v1h-1zM567 168h1v1h-1zM635 168h1v1h-1zM118 169h1v1h-1zM179 169h1v1h-1zM196 169h1v1h-1zM257 169h1v1h-1zM274 169h1v1h-1zM333 169h1v1h-1zM349 169h1v1h-1zM402 169h2v1h-2zM419 169h1v1h-1zM466 169h1v1h-1zM478 169h2v1h-2zM520 169h1v1h-1zM535 169h1v1h-1zM567 169h1v1h-1zM635 169h1v1h-1zM118 170h1v1h-1zM179 170h1v1h-1zM196 170h1v1h-1zM256 170h2v1h-2zM274 170h1v1h-1zM333 170h1v1h-1zM349 170h1v1h-1zM402 170h1v1h-1zM419 170h1v1h-1zM466 170h1v1h-1zM479 170h1v1h-1zM520 170h1v1h-1zM536 170h1v1h-1zM567 170h1v1h-1zM635 170h1v1h-1zM118 171h1v1h-1zM178 171h1v1h-1zM196 171h1v1h-1zM256 171h1v1h-1zM274 171h1v1h-1zM333 171h1v1h-1zM349 171h2v1h-2zM402 171h1v1h-1zM419 171h2v1h-2zM466 171h1v1h-1zM479 171h1v1h-1zM520 171h1v1h-1zM536 171h1v1h-1zM567 171h1v1h-1zM635 171h1v1h-1zM118 172h1v1h-1zM178 172h1v1h-1zM196 172h1v1h-1zM256 172h1v1h-1zM275 172h1v1h-1zM333 172h1v1h-1zM350 172h1v1h-1zM402 172h1v1h-1zM420 172h1v1h-1zM466 172h1v1h-1zM479 172h1v1h-1zM520 172h1v1h-1zM536 172h1v1h-1zM567 172h1v1h-1zM635 172h1v1h-1zM119 173h1v1h-1zM178 173h1v1h-1zM197 173h1v1h-1zM256 173h1v1h-1zM275 173h1v1h-1zM332 173h2v1h-2zM350 173h1v1h-1zM402 173h1v1h-1zM420 173h1v1h-1zM466 173h1v1h-1zM479 173h1v1h-1zM520 173h1v1h-1zM536 173h1v1h-1zM567 173h1v1h-1zM635 173h1v1h-1zM119 174h1v1h-1zM178 174h1v1h-1zM197 174h1v1h-1zM256 174h1v1h-1zM275 174h1v1h-1zM332 174h1v1h-1zM350 174h1v1h-1zM402 174h1v1h-1zM420 174h1v1h-1zM466 174h1v1h-1zM479 174h2v1h-2zM520 174h1v1h-1zM536 174h1v1h-1zM567 174h1v1h-1zM635 174h1v1h-1zM119 175h1v1h-1zM178 175h1v1h-1zM197 175h1v1h-1zM256 175h1v1h-1zM275 175h1v1h-1zM332 175h1v1h-1zM350 175h1v1h-1zM402 175h1v1h-1zM420 175h1v1h-1zM466 175h1v1h-1zM480 175h1v1h-1zM520 175h1v1h-1zM536 175h2v1h-2zM567 175h1v1h-1zM635 175h1v1h-1zM119 176h1v1h-1zM178 176h1v1h-1zM197 176h1v1h-1zM256 176h1v1h-1zM275 176h1v1h-1zM332 176h1v1h-1zM350 176h1v1h-1zM402 176h1v1h-1zM420 176h1v1h-1zM466 176h1v1h-1zM480 176h1v1h-1zM520 176h1v1h-1zM537 176h1v1h-1zM567 176h1v1h-1zM635 176h1v1h-1zM119 177h1v1h-1zM178 177h1v1h-1zM197 177h1v1h-1zM256 177h1v1h-1zM275 177h2v1h-2zM332 177h1v1h-1zM351 177h1v1h-1zM402 177h1v1h-1zM420 177h1v1h-1zM466 177h1v1h-1zM480 177h1v1h-1zM520 177h1v1h-1zM537 177h1v1h-1zM567 177h1v1h-1zM635 177h1v1h-1zM119 178h1v1h-1zM178 178h1v1h-1zM197 178h1v1h-1zM256 178h1v1h-1zM276 178h1v1h-1zM332 178h1v1h-1zM351 178h1v1h-1zM402 178h1v1h-1zM421 178h1v1h-1zM466 178h1v1h-1zM480 178h1v1h-1zM520 178h1v1h-1zM537 178h1v1h-1zM567 178h1v1h-1zM635 178h1v1h-1zM120 179h1v1h-1zM178 179h1v1h-1zM198 179h1v1h-1zM255 179h2v1h-2zM276 179h1v1h-1zM332 179h1v1h-1zM351 179h1v1h-1zM402 179h1v1h-1zM421 179h1v1h-1zM466 179h1v1h-1zM480 179h1v1h-1zM520 179h1v1h-1zM537 179h1v1h-1zM567 179h1v1h-1zM635 179h1v1h-1zM120 180h1v1h-1zM178 180h1v1h-1zM198 180h1v1h-1zM255 180h1v1h-1zM276 180h1v1h-1zM332 180h1v1h-1zM351 180h1v1h-1zM401 180h2v1h-2zM421 180h1v1h-1zM466 180h1v1h-1zM481 180h1v1h-1zM520 180h1v1h-1zM537 180h1v1h-1zM567 180h1v1h-1zM635 180h1v1h-1zM120 181h1v1h-1zM178 181h1v1h-1zM198 181h1v1h-1zM255 181h1v1h-1zM276 181h1v1h-1zM332 181h1v1h-1zM351 181h1v1h-1zM401 181h1v1h-1zM421 181h1v1h-1zM466 181h1v1h-1zM481 181h1v1h-1zM520 181h1v1h-1zM537 181h2v1h-2zM567 181h1v1h-1zM635 181h1v1h-1zM120 182h1v1h-1zM178 182h1v1h-1zM198 182h1v1h-1zM255 182h1v1h-1zM276 182h1v1h-1zM331 182h1v1h-1zM351 182h2v1h-2zM401 182h1v1h-1zM421 182h1v1h-1zM465 182h1v1h-1zM481 182h1v1h-1zM519 182h2v1h-2zM538 182h1v1h-1zM567 182h1v1h-1zM635 182h1v1h-1zM120 183h1v1h-1zM178 183h1v1h-1zM198 183h1v1h-1zM255 183h1v1h-1zM277 183h1v1h-1zM331 183h1v1h-1zM352 183h1v1h-1zM401 183h1v1h-1zM421 183h1v1h-1zM465 183h1v1h-1zM481 183h1v1h-1zM519 183h1v1h-1zM538 183h1v1h-1zM567 183h1v1h-1zM635 183h1v1h-1zM120 184h1v1h-1zM177 184h1v1h-1zM198 184h1v1h-1zM255 184h1v1h-1zM277 184h1v1h-1zM331 184h1v1h-1zM352 184h1v1h-1zM401 184h1v1h-1zM421 184h2v1h-2zM465 184h1v1h-1zM481 184h1v1h-1zM519 184h1v1h-1zM538 184h1v1h-1zM567 184h1v1h-1zM635 184h1v1h-1zM121 185h1v1h-1zM177 185h1v1h-1zM199 185h1v1h-1zM255 185h1v1h-1zM277 185h1v1h-1zM331 185h1v1h-1zM352 185h1v1h-1zM401 185h1v1h-1zM422 185h1v1h-1zM465 185h1v1h-1zM481 185h2v1h-2zM519 185h1v1h-1zM538 185h1v1h-1zM567 185h1v1h-1zM635 185h1v1h-1zM121 186h1v1h-1zM177 186h1v1h-1zM199 186h1v1h-1zM255 186h1v1h-1zM277 186h1v1h-1zM331 186h1v1h-1zM352 186h1v1h-1zM401 186h1v1h-1zM422 186h1v1h-1zM465 186h1v1h-1zM482 186h1v1h-1zM519 186h1v1h-1zM538 186h1v1h-1zM567 186h1v1h-1zM635 186h1v1h-1zM121 187h1v1h-1zM177 187h1v1h-1zM199 187h1v1h-1zM255 187h1v1h-1zM277 187h1v1h-1zM331 187h1v1h-1zM352 187h1v1h-1zM401 187h1v1h-1zM422 187h1v1h-1zM465 187h1v1h-1zM482 187h1v1h-1zM519 187h1v1h-1zM538 187h2v1h-2zM567 187h1v1h-1zM635 187h1v1h-1zM121 188h1v1h-1zM177 188h1v1h-1zM199 188h1v1h-1zM255 188h1v1h-1zM277 188h2v1h-2zM331 188h1v1h-1zM353 188h1v1h-1zM401 188h1v1h-1zM422 188h1v1h-1zM465 188h1v1h-1zM482 188h1v1h-1zM519 188h1v1h-1zM539 188h1v1h-1zM567 188h1v1h-1zM635 188h1v1h-1zM121 189h1v1h-1zM177 189h1v1h-1zM199 189h1v1h-1zM254 189h1v1h-1zM278 189h1v1h-1zM331 189h1v1h-1zM353 189h1v1h-1zM401 189h1v1h-1zM422 189h1v1h-1zM465 189h1v1h-1zM482 189h1v1h-1zM519 189h1v1h-1zM539 189h1v1h-1zM567 189h1v1h-1zM635 189h1v1h-1zM121 190h2v1h-2zM177 190h1v1h-1zM199 190h2v1h-2zM254 190h1v1h-1zM278 190h1v1h-1zM330 190h1v1h-1zM353 190h1v1h-1zM401 190h1v1h-1zM422 190h2v1h-2zM465 190h1v1h-1zM482 190h1v1h-1zM519 190h1v1h-1zM539 190h1v1h-1zM567 190h1v1h-1zM635 190h1v1h-1zM122 191h1v1h-1zM176 191h1v1h-1zM200 191h1v1h-1zM254 191h1v1h-1zM278 191h1v1h-1zM330 191h1v1h-1zM353 191h1v1h-1zM401 191h1v1h-1zM423 191h1v1h-1zM465 191h1v1h-1zM483 191h1v1h-1zM519 191h1v1h-1zM539 191h1v1h-1zM567 191h1v1h-1zM635 191h1v1h-1zM122 192h1v1h-1zM176 192h1v1h-1zM200 192h1v1h-1zM254 192h1v1h-1zM278 192h1v1h-1zM330 192h1v1h-1zM353 192h1v1h-1zM400 192h2v1h-2zM423 192h1v1h-1zM465 192h1v1h-1zM483 192h1v1h-1zM519 192h1v1h-1zM539 192h1v1h-1zM567 192h1v1h-1zM635 192h1v1h-1zM122 193h1v1h-1zM176 193h1v1h-1zM200 193h1v1h-1zM254 193h1v1h-1zM278 193h1v1h-1zM330 193h1v1h-1zM353 193h2v1h-2zM400 193h1v1h-1zM423 193h1v1h-1zM465 193h1v1h-1zM483 193h1v1h-1zM519 193h1v1h-1zM539 193h2v1h-2zM567 193h1v1h-1zM635 193h1v1h-1zM122 194h1v1h-1zM176 194h1v1h-1zM200 194h1v1h-1zM254 194h1v1h-1zM278 194h2v1h-2zM330 194h1v1h-1zM354 194h1v1h-1zM400 194h1v1h-1zM423 194h1v1h-1zM465 194h1v1h-1zM483 194h1v1h-1zM519 194h1v1h-1zM540 194h1v1h-1zM567 194h1v1h-1zM635 194h1v1h-1zM122 195h1v1h-1zM176 195h1v1h-1zM200 195h1v1h-1zM254 195h1v1h-1zM279 195h1v1h-1zM330 195h1v1h-1zM354 195h1v1h-1zM400 195h1v1h-1zM423 195h1v1h-1zM465 195h1v1h-1zM483 195h1v1h-1zM519 195h1v1h-1zM540 195h1v1h-1zM567 195h1v1h-1zM635 195h1v1h-1zM122 196h2v1h-2zM176 196h1v1h-1zM200 196h2v1h-2zM254 196h1v1h-1zM279 196h1v1h-1zM330 196h1v1h-1zM354 196h1v1h-1zM400 196h1v1h-1zM423 196h1v1h-1zM465 196h1v1h-1zM483 196h2v1h-2zM519 196h1v1h-1zM540 196h1v1h-1zM567 196h1v1h-1zM635 196h1v1h-1zM123 197h1v1h-1zM176 197h1v1h-1zM201 197h1v1h-1zM254 197h1v1h-1zM279 197h1v1h-1zM330 197h1v1h-1zM354 197h1v1h-1zM400 197h1v1h-1zM424 197h1v1h-1zM465 197h1v1h-1zM484 197h1v1h-1zM519 197h1v1h-1zM540 197h1v1h-1zM567 197h1v1h-1zM635 197h1v1h-1zM123 198h1v1h-1zM175 198h2v1h-2zM201 198h1v1h-1zM253 198h1v1h-1zM279 198h1v1h-1zM329 198h2v1h-2zM354 198h1v1h-1zM400 198h1v1h-1zM424 198h1v1h-1zM465 198h1v1h-1zM484 198h1v1h-1zM519 198h1v1h-1zM540 198h1v1h-1zM567 198h1v1h-1zM635 198h1v1h-1zM123 199h1v1h-1zM175 199h1v1h-1zM201 199h1v1h-1zM253 199h1v1h-1zM279 199h1v1h-1zM329 199h1v1h-1zM355 199h1v1h-1zM400 199h1v1h-1zM424 199h1v1h-1zM465 199h1v1h-1zM484 199h1v1h-1zM519 199h1v1h-1zM540 199h2v1h-2zM567 199h1v1h-1zM635 199h1v1h-1zM123 200h1v1h-1zM175 200h1v1h-1zM201 200h1v1h-1zM253 200h1v1h-1zM280 200h1v1h-1zM329 200h1v1h-1zM355 200h1v1h-1zM400 200h1v1h-1zM424 200h1v1h-1zM465 200h1v1h-1zM484 200h1v1h-1zM519 200h1v1h-1zM541 200h1v1h-1zM567 200h1v1h-1zM635 200h1v1h-1zM123 201h1v1h-1zM175 201h1v1h-1zM201 201h1v1h-1zM253 201h1v1h-1zM280 201h1v1h-1zM329 201h1v1h-1zM355 201h1v1h-1zM400 201h1v1h-1zM424 201h1v1h-1zM465 201h1v1h-1zM484 201h1v1h-1zM519 201h1v1h-1zM541 201h1v1h-1zM567 201h1v1h-1zM635 201h1v1h-1zM124 202h1v1h-1zM175 202h1v1h-1zM202 202h1v1h-1zM253 202h1v1h-1zM280 202h1v1h-1zM329 202h1v1h-1zM355 202h1v1h-1zM400 202h1v1h-1zM424 202h1v1h-1zM465 202h1v1h-1zM485 202h1v1h-1zM519 202h1v1h-1zM541 202h1v1h-1zM567 202h1v1h-1zM635 202h1v1h-1zM124 203h1v1h-1zM175 203h1v1h-1zM202 203h1v1h-1zM253 203h1v1h-1zM280 203h1v1h-1zM329 203h1v1h-1zM355 203h1v1h-1zM400 203h1v1h-1zM424 203h2v1h-2zM465 203h1v1h-1zM485 203h1v1h-1zM519 203h1v1h-1zM541 203h1v1h-1zM567 203h1v1h-1zM635 203h1v1h-1zM124 204h1v1h-1zM175 204h1v1h-1zM202 204h1v1h-1zM253 204h1v1h-1zM280 204h1v1h-1zM329 204h1v1h-1zM355 204h2v1h-2zM399 204h1v1h-1zM425 204h1v1h-1zM465 204h1v1h-1zM485 204h1v1h-1zM519 204h1v1h-1zM541 204h1v1h-1zM567 204h1v1h-1zM635 204h1v1h-1zM124 205h1v1h-1zM175 205h1v1h-1zM202 205h1v1h-1zM253 205h1v1h-1zM280 205h2v1h-2zM329 205h1v1h-1zM356 205h1v1h-1zM399 205h1v1h-1zM425 205h1v1h-1zM464 205h1v1h-1zM485 205h1v1h-1zM519 205h1v1h-1zM541 205h2v1h-2zM567 205h1v1h-1zM635 205h1v1h-1zM124 206h1v1h-1zM174 206h1v1h-1zM202 206h1v1h-1zM253 206h1v1h-1zM281 206h1v1h-1zM329 206h1v1h-1zM356 206h1v1h-1zM399 206h1v1h-1zM425 206h1v1h-1zM464 206h1v1h-1zM485 206h1v1h-1zM519 206h1v1h-1zM542 206h1v1h-1zM567 206h1v1h-1zM635 206h1v1h-1zM124 207h1v1h-1zM174 207h1v1h-1zM202 207h1v1h-1zM252 207h2v1h-2zM281 207h1v1h-1zM328 207h1v1h-1zM356 207h1v1h-1zM399 207h1v1h-1zM425 207h1v1h-1zM464 207h1v1h-1zM485 207h2v1h-2zM519 207h1v1h-1zM542 207h1v1h-1zM567 207h1v1h-1zM635 207h1v1h-1zM125 208h1v1h-1zM174 208h1v1h-1zM203 208h1v1h-1zM252 208h1v1h-1zM281 208h1v1h-1zM328 208h1v1h-1zM356 208h1v1h-1zM399 208h1v1h-1zM425 208h1v1h-1zM464 208h1v1h-1zM486 208h1v1h-1zM519 208h1v1h-1zM542 208h1v1h-1zM567 208h1v1h-1zM635 208h1v1h-1zM125 209h1v1h-1zM174 209h1v1h-1zM203 209h1v1h-1zM252 209h1v1h-1zM281 209h1v1h-1zM328 209h1v1h-1zM356 209h1v1h-1zM399 209h1v1h-1zM425 209h2v1h-2zM464 209h1v1h-1zM486 209h1v1h-1zM519 209h1v1h-1zM542 209h1v1h-1zM567 209h1v1h-1zM635 209h1v1h-1zM125 210h1v1h-1zM174 210h1v1h-1zM203 210h1v1h-1zM252 210h1v1h-1zM281 210h1v1h-1zM328 210h1v1h-1zM357 210h1v1h-1zM399 210h1v1h-1zM426 210h1v1h-1zM464 210h1v1h-1zM486 210h1v1h-1zM519 210h1v1h-1zM542 210h1v1h-1zM567 210h1v1h-1zM635 210h1v1h-1zM125 211h1v1h-1zM174 211h1v1h-1zM203 211h1v1h-1zM252 211h1v1h-1zM282 211h1v1h-1zM328 211h1v1h-1zM357 211h1v1h-1zM399 211h1v1h-1zM426 211h1v1h-1zM464 211h1v1h-1zM486 211h1v1h-1zM519 211h1v1h-1zM542 211h2v1h-2zM567 211h1v1h-1zM635 211h1v1h-1zM125 212h1v1h-1zM174 212h1v1h-1zM203 212h1v1h-1zM252 212h1v1h-1zM282 212h1v1h-1zM328 212h1v1h-1zM357 212h1v1h-1zM399 212h1v1h-1zM426 212h1v1h-1zM464 212h1v1h-1zM486 212h1v1h-1zM519 212h1v1h-1zM543 212h1v1h-1zM567 212h1v1h-1zM635 212h1v1h-1zM125 213h1v1h-1zM173 213h1v1h-1zM203 213h1v1h-1zM252 213h1v1h-1zM282 213h1v1h-1zM328 213h1v1h-1zM357 213h1v1h-1zM399 213h1v1h-1zM426 213h1v1h-1zM464 213h1v1h-1zM487 213h1v1h-1zM518 213h2v1h-2zM543 213h1v1h-1zM567 213h1v1h-1zM635 213h1v1h-1zM126 214h1v1h-1zM173 214h1v1h-1zM204 214h1v1h-1zM252 214h1v1h-1zM282 214h1v1h-1zM328 214h1v1h-1zM357 214h1v1h-1zM399 214h1v1h-1zM426 214h1v1h-1zM464 214h1v1h-1zM487 214h1v1h-1zM518 214h1v1h-1zM543 214h1v1h-1zM567 214h1v1h-1zM635 214h1v1h-1zM126 215h1v1h-1zM173 215h1v1h-1zM204 215h1v1h-1zM252 215h1v1h-1zM282 215h1v1h-1zM327 215h1v1h-1zM357 215h2v1h-2zM398 215h2v1h-2zM426 215h1v1h-1zM464 215h1v1h-1zM487 215h1v1h-1zM518 215h1v1h-1zM543 215h1v1h-1zM567 215h1v1h-1zM635 215h1v1h-1zM126 216h1v1h-1zM173 216h1v1h-1zM204 216h1v1h-1zM251 216h2v1h-2zM282 216h2v1h-2zM327 216h1v1h-1zM358 216h1v1h-1zM398 216h1v1h-1zM427 216h1v1h-1zM464 216h1v1h-1zM487 216h1v1h-1zM518 216h1v1h-1zM543 216h1v1h-1zM566 216h2v1h-2zM635 216h1v1h-1zM126 217h1v1h-1zM173 217h1v1h-1zM204 217h1v1h-1zM251 217h1v1h-1zM283 217h1v1h-1zM327 217h1v1h-1zM358 217h1v1h-1zM398 217h1v1h-1zM427 217h1v1h-1zM464 217h1v1h-1zM487 217h1v1h-1zM518 217h1v1h-1zM544 217h1v1h-1zM566 217h1v1h-1zM635 217h1v1h-1zM126 218h1v1h-1zM173 218h1v1h-1zM204 218h1v1h-1zM251 218h1v1h-1zM283 218h1v1h-1zM327 218h1v1h-1zM358 218h1v1h-1zM398 218h1v1h-1zM427 218h1v1h-1zM464 218h1v1h-1zM488 218h1v1h-1zM518 218h1v1h-1zM544 218h1v1h-1zM566 218h1v1h-1zM635 218h1v1h-1zM127 219h1v1h-1zM172 219h2v1h-2zM205 219h1v1h-1zM251 219h1v1h-1zM283 219h1v1h-1zM327 219h1v1h-1zM358 219h1v1h-1zM398 219h1v1h-1zM427 219h1v1h-1zM464 219h1v1h-1zM488 219h1v1h-1zM518 219h1v1h-1zM544 219h1v1h-1zM566 219h1v1h-1zM635 219h1v1h-1zM127 220h1v1h-1zM172 220h1v1h-1zM205 220h1v1h-1zM251 220h1v1h-1zM283 220h1v1h-1zM327 220h1v1h-1zM358 220h1v1h-1zM398 220h1v1h-1zM427 220h1v1h-1zM464 220h1v1h-1zM488 220h1v1h-1zM518 220h1v1h-1zM544 220h1v1h-1zM566 220h1v1h-1zM635 220h1v1h-1zM127 221h1v1h-1zM172 221h1v1h-1zM205 221h1v1h-1zM251 221h1v1h-1zM283 221h1v1h-1zM327 221h1v1h-1zM359 221h1v1h-1zM398 221h1v1h-1zM427 221h2v1h-2zM464 221h1v1h-1zM488 221h1v1h-1zM518 221h1v1h-1zM544 221h1v1h-1zM566 221h1v1h-1zM635 221h1v1h-1zM127 222h1v1h-1zM172 222h1v1h-1zM205 222h1v1h-1zM251 222h1v1h-1zM283 222h2v1h-2zM326 222h1v1h-1zM359 222h1v1h-1zM398 222h1v1h-1zM428 222h1v1h-1zM463 222h2v1h-2zM488 222h1v1h-1zM518 222h1v1h-1zM544 222h2v1h-2zM566 222h1v1h-1zM635 222h1v1h-1zM127 223h1v1h-1zM172 223h1v1h-1zM205 223h1v1h-1zM250 223h1v1h-1zM284 223h1v1h-1zM326 223h1v1h-1zM359 223h1v1h-1zM398 223h1v1h-1zM428 223h1v1h-1zM463 223h1v1h-1zM488 223h1v1h-1zM518 223h1v1h-1zM545 223h1v1h-1zM566 223h1v1h-1zM635 223h1v1h-1zM127 224h1v1h-1zM172 224h1v1h-1zM205 224h2v1h-2zM250 224h1v1h-1zM284 224h1v1h-1zM326 224h1v1h-1zM359 224h1v1h-1zM398 224h1v1h-1zM428 224h1v1h-1zM463 224h1v1h-1zM489 224h1v1h-1zM518 224h1v1h-1zM545 224h1v1h-1zM566 224h1v1h-1zM635 224h1v1h-1zM128 225h1v1h-1zM172 225h1v1h-1zM206 225h1v1h-1zM250 225h1v1h-1zM284 225h1v1h-1zM326 225h1v1h-1zM359 225h1v1h-1zM397 225h2v1h-2zM428 225h1v1h-1zM463 225h1v1h-1zM489 225h1v1h-1zM518 225h1v1h-1zM545 225h1v1h-1zM566 225h1v1h-1zM635 225h1v1h-1zM128 226h1v1h-1zM171 226h1v1h-1zM206 226h1v1h-1zM250 226h1v1h-1zM284 226h1v1h-1zM326 226h1v1h-1zM359 226h1v1h-1zM397 226h1v1h-1zM428 226h1v1h-1zM463 226h1v1h-1zM489 226h1v1h-1zM518 226h1v1h-1zM545 226h1v1h-1zM566 226h1v1h-1zM635 226h1v1h-1zM128 227h1v1h-1zM171 227h1v1h-1zM206 227h1v1h-1zM250 227h1v1h-1zM284 227h1v1h-1zM326 227h1v1h-1zM359 227h2v1h-2zM397 227h1v1h-1zM428 227h2v1h-2zM463 227h1v1h-1zM489 227h1v1h-1zM518 227h1v1h-1zM545 227h1v1h-1zM566 227h1v1h-1zM635 227h1v1h-1zM128 228h1v1h-1zM171 228h1v1h-1zM206 228h1v1h-1zM250 228h1v1h-1zM284 228h2v1h-2zM326 228h1v1h-1zM360 228h1v1h-1zM397 228h1v1h-1zM429 228h1v1h-1zM463 228h1v1h-1zM489 228h1v1h-1zM518 228h1v1h-1zM545 228h2v1h-2zM566 228h1v1h-1zM635 228h1v1h-1zM128 229h1v1h-1zM171 229h1v1h-1zM206 229h1v1h-1zM250 229h1v1h-1zM285 229h1v1h-1zM325 229h2v1h-2zM360 229h1v1h-1zM397 229h1v1h-1zM429 229h1v1h-1zM463 229h1v1h-1zM489 229h1v1h-1zM518 229h1v1h-1zM546 229h1v1h-1zM566 229h1v1h-1zM635 229h1v1h-1zM128 230h1v1h-1zM171 230h1v1h-1zM207 230h1v1h-1zM249 230h1v1h-1zM285 230h1v1h-1zM325 230h1v1h-1zM360 230h1v1h-1zM397 230h1v1h-1zM429 230h1v1h-1zM463 230h1v1h-1zM490 230h1v1h-1zM518 230h1v1h-1zM546 230h1v1h-1zM566 230h1v1h-1zM635 230h1v1h-1zM129 231h1v1h-1zM171 231h1v1h-1zM207 231h1v1h-1zM249 231h1v1h-1zM285 231h1v1h-1zM325 231h1v1h-1zM360 231h1v1h-1zM397 231h1v1h-1zM429 231h1v1h-1zM463 231h1v1h-1zM490 231h1v1h-1zM518 231h1v1h-1zM546 231h1v1h-1zM566 231h1v1h-1zM635 231h1v1h-1zM129 232h1v1h-1zM170 232h2v1h-2zM207 232h1v1h-1zM249 232h1v1h-1zM285 232h1v1h-1zM325 232h1v1h-1zM360 232h1v1h-1zM397 232h1v1h-1zM429 232h1v1h-1zM463 232h1v1h-1zM490 232h1v1h-1zM518 232h1v1h-1zM546 232h1v1h-1zM566 232h1v1h-1zM635 232h1v1h-1zM129 233h1v1h-1zM170 233h1v1h-1zM207 233h1v1h-1zM249 233h1v1h-1zM285 233h1v1h-1zM325 233h1v1h-1zM360 233h2v1h-2zM397 233h1v1h-1zM429 233h1v1h-1zM463 233h1v1h-1zM490 233h1v1h-1zM518 233h1v1h-1zM546 233h1v1h-1zM566 233h1v1h-1zM635 233h1v1h-1zM129 234h1v1h-1zM170 234h1v1h-1zM207 234h1v1h-1zM249 234h1v1h-1zM285 234h2v1h-2zM325 234h1v1h-1zM361 234h1v1h-1zM397 234h1v1h-1zM430 234h1v1h-1zM463 234h1v1h-1zM490 234h1v1h-1zM518 234h1v1h-1zM546 234h2v1h-2zM566 234h1v1h-1zM635 234h1v1h-1zM129 235h1v1h-1zM170 235h1v1h-1zM208 235h1v1h-1zM249 235h1v1h-1zM286 235h1v1h-1zM325 235h1v1h-1zM361 235h1v1h-1zM397 235h1v1h-1zM430 235h1v1h-1zM462 235h2v1h-2zM490 235h1v1h-1zM517 235h2v1h-2zM547 235h1v1h-1zM566 235h1v1h-1zM635 235h1v1h-1zM129 236h2v1h-2zM170 236h1v1h-1zM208 236h1v1h-1zM249 236h1v1h-1zM286 236h1v1h-1zM325 236h1v1h-1zM361 236h1v1h-1zM396 236h1v1h-1zM430 236h1v1h-1zM462 236h1v1h-1zM491 236h1v1h-1zM517 236h1v1h-1zM547 236h1v1h-1zM566 236h1v1h-1zM635 236h1v1h-1zM130 237h1v1h-1zM170 237h1v1h-1zM208 237h1v1h-1zM248 237h1v1h-1zM286 237h1v1h-1zM324 237h1v1h-1zM361 237h1v1h-1zM396 237h1v1h-1zM430 237h1v1h-1zM462 237h1v1h-1zM491 237h1v1h-1zM517 237h1v1h-1zM547 237h1v1h-1zM566 237h1v1h-1zM635 237h1v1h-1zM130 238h1v1h-1zM170 238h1v1h-1zM208 238h1v1h-1zM248 238h1v1h-1zM286 238h1v1h-1zM324 238h1v1h-1zM361 238h1v1h-1zM396 238h1v1h-1zM430 238h1v1h-1zM462 238h1v1h-1zM491 238h1v1h-1zM517 238h1v1h-1zM547 238h1v1h-1zM566 238h1v1h-1zM635 238h1v1h-1zM130 239h1v1h-1zM169 239h1v1h-1zM208 239h1v1h-1zM248 239h1v1h-1zM286 239h1v1h-1zM324 239h1v1h-1zM361 239h1v1h-1zM396 239h1v1h-1zM430 239h1v1h-1zM462 239h1v1h-1zM491 239h1v1h-1zM517 239h1v1h-1zM547 239h1v1h-1zM566 239h1v1h-1zM635 239h1v1h-1zM130 240h1v1h-1zM169 240h1v1h-1zM208 240h2v1h-2zM248 240h1v1h-1zM286 240h2v1h-2zM324 240h1v1h-1zM362 240h1v1h-1zM396 240h1v1h-1zM431 240h1v1h-1zM462 240h1v1h-1zM491 240h1v1h-1zM517 240h1v1h-1zM547 240h2v1h-2zM566 240h1v1h-1zM635 240h1v1h-1zM130 241h1v1h-1zM169 241h1v1h-1zM209 241h1v1h-1zM248 241h1v1h-1zM287 241h1v1h-1zM324 241h1v1h-1zM362 241h1v1h-1zM396 241h1v1h-1zM431 241h1v1h-1zM462 241h1v1h-1zM491 241h1v1h-1zM517 241h1v1h-1zM548 241h1v1h-1zM566 241h1v1h-1zM635 241h1v1h-1zM130 242h2v1h-2zM169 242h1v1h-1zM209 242h1v1h-1zM248 242h1v1h-1zM287 242h1v1h-1zM324 242h1v1h-1zM362 242h1v1h-1zM396 242h1v1h-1zM431 242h1v1h-1zM462 242h1v1h-1zM492 242h1v1h-1zM517 242h1v1h-1zM548 242h1v1h-1zM566 242h1v1h-1zM635 242h1v1h-1zM131 243h1v1h-1zM169 243h1v1h-1zM209 243h1v1h-1zM247 243h2v1h-2zM287 243h1v1h-1zM324 243h1v1h-1zM362 243h1v1h-1zM396 243h1v1h-1zM431 243h1v1h-1zM462 243h1v1h-1zM492 243h1v1h-1zM517 243h1v1h-1zM548 243h1v1h-1zM566 243h1v1h-1zM635 243h1v1h-1zM131 244h1v1h-1zM169 244h1v1h-1zM209 244h1v1h-1zM247 244h1v1h-1zM287 244h1v1h-1zM323 244h2v1h-2zM362 244h1v1h-1zM396 244h1v1h-1zM431 244h1v1h-1zM462 244h1v1h-1zM492 244h1v1h-1zM517 244h1v1h-1zM548 244h1v1h-1zM566 244h1v1h-1zM635 244h1v1h-1zM131 245h1v1h-1zM168 245h2v1h-2zM209 245h1v1h-1zM247 245h1v1h-1zM287 245h1v1h-1zM323 245h1v1h-1zM362 245h1v1h-1zM396 245h1v1h-1zM431 245h1v1h-1zM462 245h1v1h-1zM492 245h1v1h-1zM517 245h1v1h-1zM548 245h1v1h-1zM566 245h1v1h-1zM635 245h1v1h-1zM131 246h1v1h-1zM168 246h1v1h-1zM210 246h1v1h-1zM247 246h1v1h-1zM287 246h2v1h-2zM323 246h1v1h-1zM363 246h1v1h-1zM395 246h1v1h-1zM432 246h1v1h-1zM462 246h1v1h-1zM492 246h1v1h-1zM517 246h1v1h-1zM548 246h2v1h-2zM566 246h1v1h-1zM635 246h1v1h-1zM131 247h1v1h-1zM168 247h1v1h-1zM210 247h1v1h-1zM247 247h1v1h-1zM288 247h1v1h-1zM323 247h1v1h-1zM363 247h1v1h-1zM395 247h1v1h-1zM432 247h1v1h-1zM462 247h1v1h-1zM492 247h1v1h-1zM517 247h1v1h-1zM549 247h1v1h-1zM566 247h1v1h-1zM635 247h1v1h-1zM132 248h1v1h-1zM168 248h1v1h-1zM210 248h1v1h-1zM247 248h1v1h-1zM288 248h1v1h-1zM323 248h1v1h-1zM363 248h1v1h-1zM395 248h1v1h-1zM432 248h1v1h-1zM461 248h2v1h-2zM493 248h1v1h-1zM517 248h1v1h-1zM549 248h1v1h-1zM566 248h1v1h-1zM635 248h1v1h-1zM132 249h1v1h-1zM168 249h1v1h-1zM210 249h1v1h-1zM247 249h1v1h-1zM288 249h1v1h-1zM323 249h1v1h-1zM363 249h1v1h-1zM395 249h1v1h-1zM432 249h1v1h-1zM461 249h1v1h-1zM493 249h1v1h-1zM517 249h1v1h-1zM549 249h1v1h-1zM566 249h1v1h-1zM635 249h1v1h-1zM132 250h1v1h-1zM168 250h1v1h-1zM210 250h1v1h-1zM246 250h2v1h-2zM288 250h1v1h-1zM323 250h1v1h-1zM363 250h1v1h-1zM395 250h1v1h-1zM432 250h1v1h-1zM461 250h1v1h-1zM493 250h1v1h-1zM517 250h1v1h-1zM549 250h1v1h-1zM566 250h1v1h-1zM635 250h1v1h-1zM132 251h1v1h-1zM168 251h1v1h-1zM210 251h2v1h-2zM246 251h1v1h-1zM288 251h1v1h-1zM322 251h2v1h-2zM363 251h1v1h-1zM395 251h1v1h-1zM432 251h1v1h-1zM461 251h1v1h-1zM493 251h1v1h-1zM517 251h1v1h-1zM549 251h1v1h-1zM566 251h1v1h-1zM635 251h1v1h-1zM132 252h1v1h-1zM167 252h1v1h-1zM211 252h1v1h-1zM246 252h1v1h-1zM288 252h2v1h-2zM322 252h1v1h-1zM364 252h1v1h-1zM395 252h1v1h-1zM433 252h1v1h-1zM461 252h1v1h-1zM493 252h1v1h-1zM517 252h1v1h-1zM550 252h1v1h-1zM566 252h1v1h-1zM635 252h1v1h-1zM132 253h1v1h-1zM167 253h1v1h-1zM211 253h1v1h-1zM246 253h1v1h-1zM289 253h1v1h-1zM322 253h1v1h-1zM364 253h1v1h-1zM395 253h1v1h-1zM433 253h1v1h-1zM461 253h1v1h-1zM493 253h1v1h-1zM517 253h1v1h-1zM550 253h1v1h-1zM566 253h1v1h-1zM635 253h1v1h-1zM133 254h1v1h-1zM167 254h1v1h-1zM211 254h1v1h-1zM246 254h1v1h-1zM289 254h1v1h-1zM322 254h1v1h-1zM364 254h1v1h-1zM395 254h1v1h-1zM433 254h1v1h-1zM461 254h1v1h-1zM494 254h1v1h-1zM517 254h1v1h-1zM550 254h1v1h-1zM566 254h1v1h-1zM635 254h1v1h-1zM133 255h1v1h-1zM167 255h1v1h-1zM211 255h1v1h-1zM246 255h1v1h-1zM289 255h1v1h-1zM322 255h1v1h-1zM364 255h1v1h-1zM395 255h1v1h-1zM433 255h1v1h-1zM461 255h1v1h-1zM494 255h1v1h-1zM517 255h1v1h-1zM550 255h1v1h-1zM566 255h1v1h-1zM635 255h1v1h-1zM133 256h1v1h-1zM167 256h1v1h-1zM211 256h1v1h-1zM246 256h1v1h-1zM289 256h1v1h-1zM322 256h1v1h-1zM364 256h1v1h-1zM394 256h2v1h-2zM433 256h1v1h-1zM461 256h1v1h-1zM494 256h1v1h-1zM516 256h2v1h-2zM550 256h1v1h-1zM566 256h1v1h-1zM635 256h1v1h-1zM133 257h1v1h-1zM167 257h1v1h-1zM212 257h1v1h-1zM245 257h2v1h-2zM289 257h1v1h-1zM322 257h1v1h-1zM364 257h1v1h-1zM394 257h1v1h-1zM433 257h1v1h-1zM461 257h1v1h-1zM494 257h1v1h-1zM516 257h1v1h-1zM550 257h1v1h-1zM566 257h1v1h-1zM635 257h1v1h-1zM133 258h1v1h-1zM166 258h1v1h-1zM212 258h1v1h-1zM245 258h1v1h-1zM289 258h2v1h-2zM322 258h1v1h-1zM364 258h2v1h-2zM394 258h1v1h-1zM434 258h1v1h-1zM461 258h1v1h-1zM494 258h1v1h-1zM516 258h1v1h-1zM551 258h1v1h-1zM566 258h1v1h-1zM635 258h1v1h-1zM133 259h1v1h-1zM166 259h1v1h-1zM212 259h1v1h-1zM245 259h1v1h-1zM290 259h1v1h-1zM321 259h1v1h-1zM365 259h1v1h-1zM394 259h1v1h-1zM434 259h1v1h-1zM461 259h1v1h-1zM494 259h1v1h-1zM516 259h1v1h-1zM551 259h1v1h-1zM566 259h1v1h-1zM635 259h1v1h-1zM134 260h1v1h-1zM166 260h1v1h-1zM212 260h1v1h-1zM245 260h1v1h-1zM290 260h1v1h-1zM321 260h1v1h-1zM365 260h1v1h-1zM394 260h1v1h-1zM434 260h1v1h-1zM461 260h1v1h-1zM495 260h1v1h-1zM516 260h1v1h-1zM551 260h1v1h-1zM566 260h1v1h-1zM635 260h1v1h-1zM134 261h1v1h-1zM166 261h1v1h-1zM212 261h1v1h-1zM245 261h1v1h-1zM290 261h1v1h-1zM321 261h1v1h-1zM365 261h1v1h-1zM394 261h1v1h-1zM434 261h1v1h-1zM460 261h2v1h-2zM495 261h1v1h-1zM516 261h1v1h-1zM551 261h1v1h-1zM566 261h1v1h-1zM635 261h1v1h-1zM134 262h1v1h-1zM166 262h1v1h-1zM213 262h1v1h-1zM245 262h1v1h-1zM290 262h1v1h-1zM321 262h1v1h-1zM365 262h1v1h-1zM394 262h1v1h-1zM434 262h1v1h-1zM460 262h1v1h-1zM495 262h1v1h-1zM516 262h1v1h-1zM551 262h1v1h-1zM566 262h1v1h-1zM635 262h1v1h-1zM134 263h1v1h-1zM166 263h1v1h-1zM213 263h1v1h-1zM244 263h2v1h-2zM290 263h1v1h-1zM321 263h1v1h-1zM365 263h1v1h-1zM394 263h1v1h-1zM434 263h2v1h-2zM460 263h1v1h-1zM495 263h1v1h-1zM516 263h1v1h-1zM551 263h2v1h-2zM566 263h1v1h-1zM635 263h1v1h-1zM134 264h1v1h-1zM165 264h2v1h-2zM213 264h1v1h-1zM244 264h1v1h-1zM290 264h2v1h-2zM321 264h1v1h-1zM365 264h2v1h-2zM394 264h1v1h-1zM435 264h1v1h-1zM460 264h1v1h-1zM495 264h1v1h-1zM516 264h1v1h-1zM552 264h1v1h-1zM566 264h1v1h-1zM635 264h1v1h-1zM134 265h1v1h-1zM165 265h1v1h-1zM213 265h1v1h-1zM244 265h1v1h-1zM291 265h1v1h-1zM321 265h1v1h-1zM366 265h1v1h-1zM394 265h1v1h-1zM435 265h1v1h-1zM460 265h1v1h-1zM495 265h2v1h-2zM516 265h1v1h-1zM552 265h1v1h-1zM566 265h1v1h-1zM635 265h1v1h-1zM135 266h1v1h-1zM165 266h1v1h-1zM213 266h1v1h-1zM244 266h1v1h-1zM291 266h1v1h-1zM320 266h2v1h-2zM366 266h1v1h-1zM393 266h1v1h-1zM435 266h1v1h-1zM460 266h1v1h-1zM496 266h1v1h-1zM516 266h1v1h-1zM552 266h1v1h-1zM566 266h1v1h-1zM635 266h1v1h-1zM135 267h1v1h-1zM165 267h1v1h-1zM213 267h1v1h-1zM244 267h1v1h-1zM291 267h1v1h-1zM320 267h1v1h-1zM366 267h1v1h-1zM393 267h1v1h-1zM435 267h1v1h-1zM460 267h1v1h-1zM496 267h1v1h-1zM516 267h1v1h-1zM552 267h1v1h-1zM566 267h1v1h-1zM635 267h1v1h-1zM135 268h1v1h-1zM165 268h1v1h-1zM214 268h1v1h-1zM244 268h1v1h-1zM291 268h1v1h-1zM320 268h1v1h-1zM366 268h1v1h-1zM393 268h1v1h-1zM435 268h1v1h-1zM460 268h1v1h-1zM496 268h1v1h-1zM516 268h1v1h-1zM552 268h1v1h-1zM566 268h1v1h-1zM635 268h1v1h-1zM135 269h1v1h-1zM165 269h1v1h-1zM214 269h1v1h-1zM244 269h1v1h-1zM291 269h1v1h-1zM320 269h1v1h-1zM366 269h1v1h-1zM393 269h1v1h-1zM435 269h1v1h-1zM460 269h1v1h-1zM496 269h1v1h-1zM516 269h1v1h-1zM552 269h1v1h-1zM566 269h1v1h-1zM635 269h1v1h-1zM135 270h1v1h-1zM165 270h1v1h-1zM214 270h1v1h-1zM243 270h1v1h-1zM291 270h1v1h-1zM320 270h1v1h-1zM366 270h1v1h-1zM393 270h1v1h-1zM435 270h1v1h-1zM460 270h1v1h-1zM496 270h1v1h-1zM516 270h1v1h-1zM552 270h2v1h-2zM565 270h1v1h-1zM635 270h1v1h-1zM135 271h1v1h-1zM165 271h1v1h-1zM214 271h1v1h-1zM243 271h1v1h-1zM292 271h1v1h-1zM320 271h1v1h-1zM366 271h2v1h-2zM393 271h1v1h-1zM436 271h1v1h-1zM460 271h1v1h-1zM496 271h2v1h-2zM516 271h1v1h-1zM553 271h1v1h-1zM565 271h1v1h-1zM635 271h1v1h-1zM135 272h1v1h-1zM164 272h1v1h-1zM214 272h1v1h-1zM243 272h1v1h-1zM292 272h1v1h-1zM320 272h1v1h-1zM367 272h1v1h-1zM393 272h1v1h-1zM436 272h1v1h-1zM459 272h2v1h-2zM497 272h1v1h-1zM516 272h1v1h-1zM553 272h1v1h-1zM565 272h1v1h-1zM635 272h1v1h-1zM136 273h1v1h-1zM164 273h1v1h-1zM214 273h1v1h-1zM243 273h1v1h-1zM292 273h1v1h-1zM320 273h1v1h-1zM367 273h1v1h-1zM393 273h1v1h-1zM436 273h1v1h-1zM459 273h1v1h-1zM497 273h1v1h-1zM516 273h1v1h-1zM553 273h1v1h-1zM565 273h1v1h-1zM635 273h1v1h-1zM136 274h1v1h-1zM164 274h1v1h-1zM215 274h1v1h-1zM243 274h1v1h-1zM292 274h1v1h-1zM319 274h2v1h-2zM367 274h1v1h-1zM393 274h1v1h-1zM436 274h1v1h-1zM459 274h1v1h-1zM497 274h1v1h-1zM516 274h1v1h-1zM553 274h1v1h-1zM565 274h1v1h-1zM635 274h1v1h-1zM136 275h1v1h-1zM164 275h1v1h-1zM215 275h1v1h-1zM243 275h1v1h-1zM292 275h1v1h-1zM319 275h1v1h-1zM367 275h1v1h-1zM392 275h1v1h-1zM436 275h1v1h-1zM459 275h1v1h-1zM497 275h1v1h-1zM516 275h1v1h-1zM553 275h1v1h-1zM565 275h1v1h-1zM635 275h1v1h-1zM136 276h1v1h-1zM164 276h1v1h-1zM215 276h1v1h-1zM242 276h2v1h-2zM292 276h1v1h-1zM319 276h1v1h-1zM367 276h1v1h-1zM392 276h1v1h-1zM436 276h1v1h-1zM459 276h1v1h-1zM497 276h1v1h-1zM516 276h1v1h-1zM553 276h1v1h-1zM565 276h1v1h-1zM635 276h1v1h-1zM136 277h1v1h-1zM164 277h1v1h-1zM215 277h1v1h-1zM242 277h1v1h-1zM292 277h1v1h-1zM319 277h1v1h-1zM367 277h1v1h-1zM392 277h1v1h-1zM436 277h1v1h-1zM459 277h1v1h-1zM497 277h2v1h-2zM515 277h1v1h-1zM554 277h1v1h-1zM565 277h1v1h-1zM635 277h1v1h-1zM136 278h1v1h-1zM164 278h1v1h-1zM215 278h1v1h-1zM242 278h1v1h-1zM293 278h1v1h-1zM319 278h1v1h-1zM367 278h1v1h-1zM392 278h1v1h-1zM437 278h1v1h-1zM459 278h1v1h-1zM498 278h1v1h-1zM515 278h1v1h-1zM554 278h1v1h-1zM565 278h1v1h-1zM635 278h1v1h-1zM136 279h1v1h-1zM163 279h1v1h-1zM215 279h1v1h-1zM242 279h1v1h-1zM293 279h1v1h-1zM319 279h1v1h-1zM368 279h1v1h-1zM392 279h1v1h-1zM437 279h1v1h-1zM459 279h1v1h-1zM498 279h1v1h-1zM515 279h1v1h-1zM554 279h1v1h-1zM565 279h1v1h-1zM635 279h1v1h-1zM137 280h1v1h-1zM163 280h1v1h-1zM216 280h1v1h-1zM242 280h1v1h-1zM293 280h1v1h-1zM319 280h1v1h-1zM368 280h1v1h-1zM392 280h1v1h-1zM437 280h1v1h-1zM459 280h1v1h-1zM498 280h1v1h-1zM515 280h1v1h-1zM554 280h1v1h-1zM565 280h1v1h-1zM635 280h1v1h-1zM137 281h1v1h-1zM163 281h1v1h-1zM216 281h1v1h-1zM242 281h1v1h-1zM293 281h1v1h-1zM319 281h1v1h-1zM368 281h1v1h-1zM392 281h1v1h-1zM437 281h1v1h-1zM459 281h1v1h-1zM498 281h1v1h-1zM515 281h1v1h-1zM554 281h1v1h-1zM565 281h1v1h-1zM635 281h1v1h-1zM137 282h1v1h-1zM163 282h1v1h-1zM216 282h1v1h-1zM242 282h1v1h-1zM293 282h1v1h-1zM319 282h1v1h-1zM368 282h1v1h-1zM392 282h1v1h-1zM437 282h1v1h-1zM459 282h1v1h-1zM498 282h1v1h-1zM515 282h1v1h-1zM554 282h1v1h-1zM565 282h1v1h-1zM635 282h1v1h-1zM137 283h1v1h-1zM163 283h1v1h-1zM216 283h1v1h-1zM241 283h1v1h-1zM293 283h1v1h-1zM318 283h1v1h-1zM368 283h1v1h-1zM392 283h1v1h-1zM437 283h1v1h-1zM459 283h1v1h-1zM498 283h1v1h-1zM515 283h1v1h-1zM554 283h1v1h-1zM565 283h1v1h-1zM635 283h1v1h-1zM137 284h1v1h-1zM163 284h1v1h-1zM216 284h1v1h-1zM241 284h1v1h-1zM293 284h1v1h-1zM318 284h1v1h-1zM368 284h1v1h-1zM391 284h1v1h-1zM437 284h1v1h-1zM458 284h1v1h-1zM499 284h1v1h-1zM515 284h1v1h-1zM555 284h1v1h-1zM565 284h1v1h-1zM635 284h1v1h-1zM137 285h1v1h-1zM163 285h1v1h-1zM216 285h1v1h-1zM241 285h1v1h-1zM294 285h1v1h-1zM318 285h1v1h-1zM368 285h1v1h-1zM391 285h1v1h-1zM437 285h2v1h-2zM458 285h1v1h-1zM499 285h1v1h-1zM515 285h1v1h-1zM555 285h1v1h-1zM565 285h1v1h-1zM635 285h1v1h-1zM137 286h1v1h-1zM162 286h2v1h-2zM217 286h1v1h-1zM241 286h1v1h-1zM294 286h1v1h-1zM318 286h1v1h-1zM369 286h1v1h-1zM391 286h1v1h-1zM438 286h1v1h-1zM458 286h1v1h-1zM499 286h1v1h-1zM515 286h1v1h-1zM555 286h1v1h-1zM565 286h1v1h-1zM635 286h1v1h-1zM137 287h2v1h-2zM162 287h1v1h-1zM217 287h1v1h-1zM241 287h1v1h-1zM294 287h1v1h-1zM318 287h1v1h-1zM369 287h1v1h-1zM391 287h1v1h-1zM438 287h1v1h-1zM458 287h1v1h-1zM499 287h1v1h-1zM515 287h1v1h-1zM555 287h1v1h-1zM565 287h1v1h-1zM635 287h1v1h-1zM138 288h1v1h-1zM162 288h1v1h-1zM217 288h1v1h-1zM241 288h1v1h-1zM294 288h1v1h-1zM318 288h1v1h-1zM369 288h1v1h-1zM391 288h1v1h-1zM438 288h1v1h-1zM458 288h1v1h-1zM499 288h1v1h-1zM515 288h1v1h-1zM555 288h1v1h-1zM565 288h1v1h-1zM635 288h1v1h-1zM138 289h1v1h-1zM162 289h1v1h-1zM217 289h1v1h-1zM240 289h2v1h-2zM294 289h1v1h-1zM318 289h1v1h-1zM369 289h1v1h-1zM391 289h1v1h-1zM438 289h1v1h-1zM458 289h1v1h-1zM499 289h1v1h-1zM515 289h1v1h-1zM555 289h1v1h-1zM565 289h1v1h-1zM635 289h1v1h-1zM138 290h1v1h-1zM162 290h1v1h-1zM217 290h1v1h-1zM240 290h1v1h-1zM294 290h1v1h-1zM318 290h1v1h-1zM369 290h1v1h-1zM391 290h1v1h-1zM438 290h1v1h-1zM458 290h1v1h-1zM500 290h1v1h-1zM515 290h1v1h-1zM555 290h2v1h-2zM565 290h1v1h-1zM635 290h1v1h-1zM138 291h1v1h-1zM162 291h1v1h-1zM217 291h1v1h-1zM240 291h1v1h-1zM294 291h2v1h-2zM317 291h2v1h-2zM369 291h1v1h-1zM391 291h1v1h-1zM438 291h1v1h-1zM458 291h1v1h-1zM500 291h1v1h-1zM515 291h1v1h-1zM556 291h1v1h-1zM565 291h1v1h-1zM635 291h1v1h-1zM138 292h1v1h-1zM162 292h1v1h-1zM218 292h1v1h-1zM240 292h1v1h-1zM295 292h1v1h-1zM317 292h1v1h-1zM369 292h1v1h-1zM391 292h1v1h-1zM438 292h1v1h-1zM458 292h1v1h-1zM500 292h1v1h-1zM515 292h1v1h-1zM556 292h1v1h-1zM565 292h1v1h-1zM635 292h1v1h-1zM138 293h1v1h-1zM162 293h1v1h-1zM218 293h1v1h-1zM240 293h1v1h-1zM295 293h1v1h-1zM317 293h1v1h-1zM369 293h2v1h-2zM390 293h2v1h-2zM439 293h1v1h-1zM458 293h1v1h-1zM500 293h1v1h-1zM515 293h1v1h-1zM556 293h1v1h-1zM565 293h1v1h-1zM635 293h1v1h-1zM138 294h2v1h-2zM161 294h1v1h-1zM218 294h1v1h-1zM240 294h1v1h-1zM295 294h1v1h-1zM317 294h1v1h-1zM370 294h1v1h-1zM390 294h1v1h-1zM439 294h1v1h-1zM458 294h1v1h-1zM500 294h1v1h-1zM515 294h1v1h-1zM556 294h1v1h-1zM565 294h1v1h-1zM635 294h1v1h-1zM139 295h1v1h-1zM161 295h1v1h-1zM218 295h1v1h-1zM240 295h1v1h-1zM295 295h1v1h-1zM317 295h1v1h-1zM370 295h1v1h-1zM390 295h1v1h-1zM439 295h1v1h-1zM457 295h1v1h-1zM500 295h1v1h-1zM515 295h1v1h-1zM556 295h1v1h-1zM565 295h1v1h-1zM635 295h1v1h-1zM139 296h1v1h-1zM161 296h1v1h-1zM218 296h1v1h-1zM239 296h1v1h-1zM295 296h1v1h-1zM317 296h1v1h-1zM370 296h1v1h-1zM390 296h1v1h-1zM439 296h1v1h-1zM457 296h1v1h-1zM500 296h2v1h-2zM515 296h1v1h-1zM556 296h1v1h-1zM565 296h1v1h-1zM635 296h1v1h-1zM139 297h1v1h-1zM161 297h1v1h-1zM218 297h1v1h-1zM239 297h1v1h-1zM295 297h1v1h-1zM317 297h1v1h-1zM370 297h1v1h-1zM390 297h1v1h-1zM439 297h1v1h-1zM457 297h1v1h-1zM501 297h1v1h-1zM515 297h1v1h-1zM556 297h2v1h-2zM565 297h1v1h-1zM635 297h1v1h-1zM139 298h1v1h-1zM161 298h1v1h-1zM218 298h2v1h-2zM239 298h1v1h-1zM295 298h2v1h-2zM317 298h1v1h-1zM370 298h1v1h-1zM390 298h1v1h-1zM439 298h1v1h-1zM457 298h1v1h-1zM501 298h1v1h-1zM514 298h1v1h-1zM557 298h1v1h-1zM565 298h1v1h-1zM635 298h1v1h-1zM139 299h1v1h-1zM161 299h1v1h-1zM219 299h1v1h-1zM239 299h1v1h-1zM296 299h1v1h-1zM316 299h2v1h-2zM370 299h1v1h-1zM390 299h1v1h-1zM439 299h1v1h-1zM457 299h1v1h-1zM501 299h1v1h-1zM514 299h1v1h-1zM557 299h1v1h-1zM565 299h1v1h-1zM635 299h1v1h-1zM139 300h1v1h-1zM161 300h1v1h-1zM219 300h1v1h-1zM239 300h1v1h-1zM296 300h1v1h-1zM316 300h1v1h-1zM370 300h1v1h-1zM390 300h1v1h-1zM440 300h1v1h-1zM457 300h1v1h-1zM501 300h1v1h-1zM514 300h1v1h-1zM557 300h1v1h-1zM565 300h1v1h-1zM635 300h1v1h-1zM139 301h2v1h-2zM160 301h2v1h-2zM219 301h1v1h-1zM239 301h1v1h-1zM296 301h1v1h-1zM316 301h1v1h-1zM371 301h1v1h-1zM390 301h1v1h-1zM440 301h1v1h-1zM457 301h1v1h-1zM501 301h1v1h-1zM514 301h1v1h-1zM557 301h1v1h-1zM565 301h1v1h-1zM635 301h1v1h-1zM140 302h1v1h-1zM160 302h1v1h-1zM219 302h1v1h-1zM238 302h2v1h-2zM296 302h1v1h-1zM316 302h1v1h-1zM371 302h1v1h-1zM389 302h2v1h-2zM440 302h1v1h-1zM457 302h1v1h-1zM501 302h2v1h-2zM514 302h1v1h-1zM557 302h1v1h-1zM565 302h1v1h-1zM635 302h1v1h-1zM140 303h1v1h-1zM160 303h1v1h-1zM219 303h1v1h-1zM238 303h1v1h-1zM296 303h1v1h-1zM316 303h1v1h-1zM371 303h1v1h-1zM389 303h1v1h-1zM440 303h1v1h-1zM457 303h1v1h-1zM502 303h1v1h-1zM514 303h1v1h-1zM557 303h1v1h-1zM565 303h1v1h-1zM635 303h1v1h-1zM140 304h1v1h-1zM160 304h1v1h-1zM219 304h2v1h-2zM238 304h1v1h-1zM296 304h1v1h-1zM316 304h1v1h-1zM371 304h1v1h-1zM389 304h1v1h-1zM440 304h1v1h-1zM457 304h1v1h-1zM502 304h1v1h-1zM514 304h1v1h-1zM558 304h1v1h-1zM565 304h1v1h-1zM635 304h1v1h-1zM140 305h1v1h-1zM160 305h1v1h-1zM220 305h1v1h-1zM238 305h1v1h-1zM296 305h2v1h-2zM316 305h1v1h-1zM371 305h1v1h-1zM389 305h1v1h-1zM440 305h1v1h-1zM457 305h1v1h-1zM502 305h1v1h-1zM514 305h1v1h-1zM558 305h1v1h-1zM565 305h1v1h-1zM635 305h1v1h-1zM140 306h1v1h-1zM160 306h1v1h-1zM220 306h1v1h-1zM238 306h1v1h-1zM297 306h1v1h-1zM316 306h1v1h-1zM371 306h1v1h-1zM389 306h1v1h-1zM440 306h1v1h-1zM456 306h2v1h-2zM502 306h1v1h-1zM514 306h1v1h-1zM558 306h1v1h-1zM565 306h1v1h-1zM635 306h1v1h-1zM140 307h1v1h-1zM160 307h1v1h-1zM220 307h1v1h-1zM238 307h1v1h-1zM297 307h1v1h-1zM316 307h1v1h-1zM371 307h1v1h-1zM389 307h1v1h-1zM440 307h2v1h-2zM456 307h1v1h-1zM502 307h1v1h-1zM514 307h1v1h-1zM558 307h1v1h-1zM565 307h1v1h-1zM635 307h1v1h-1zM140 308h2v1h-2zM159 308h2v1h-2zM220 308h1v1h-1zM237 308h2v1h-2zM297 308h1v1h-1zM315 308h1v1h-1zM372 308h1v1h-1zM389 308h1v1h-1zM441 308h1v1h-1zM456 308h1v1h-1zM502 308h2v1h-2zM514 308h1v1h-1zM558 308h1v1h-1zM565 308h1v1h-1zM635 308h1v1h-1zM141 309h1v1h-1zM159 309h1v1h-1zM220 309h1v1h-1zM237 309h1v1h-1zM297 309h1v1h-1zM315 309h1v1h-1zM372 309h1v1h-1zM389 309h1v1h-1zM441 309h1v1h-1zM456 309h1v1h-1zM503 309h1v1h-1zM514 309h1v1h-1zM558 309h1v1h-1zM565 309h1v1h-1zM635 309h1v1h-1zM141 310h1v1h-1zM159 310h1v1h-1zM220 310h1v1h-1zM237 310h1v1h-1zM297 310h1v1h-1zM315 310h1v1h-1zM372 310h1v1h-1zM389 310h1v1h-1zM441 310h1v1h-1zM456 310h1v1h-1zM503 310h1v1h-1zM514 310h1v1h-1zM558 310h1v1h-1zM565 310h1v1h-1zM635 310h1v1h-1zM141 311h1v1h-1zM159 311h1v1h-1zM220 311h1v1h-1zM237 311h1v1h-1zM297 311h2v1h-2zM315 311h1v1h-1zM372 311h1v1h-1zM388 311h1v1h-1zM441 311h1v1h-1zM456 311h1v1h-1zM503 311h1v1h-1zM514 311h1v1h-1zM559 311h1v1h-1zM565 311h1v1h-1zM635 311h1v1h-1zM141 312h1v1h-1zM159 312h1v1h-1zM220 312h1v1h-1zM237 312h1v1h-1zM298 312h1v1h-1zM315 312h1v1h-1zM372 312h1v1h-1zM388 312h1v1h-1zM442 312h1v1h-1zM456 312h1v1h-1zM503 312h1v1h-1zM514 312h1v1h-1zM559 312h1v1h-1zM565 312h1v1h-1zM635 312h1v1h-1zM141 313h1v1h-1zM159 313h1v1h-1zM221 313h1v1h-1zM237 313h1v1h-1zM298 313h1v1h-1zM314 313h1v1h-1zM372 313h1v1h-1zM388 313h1v1h-1zM442 313h1v1h-1zM456 313h1v1h-1zM503 313h1v1h-1zM514 313h1v1h-1zM559 313h1v1h-1zM565 313h1v1h-1zM635 313h1v1h-1zM141 314h1v1h-1zM159 314h1v1h-1zM221 314h1v1h-1zM236 314h2v1h-2zM298 314h1v1h-1zM314 314h1v1h-1zM373 314h1v1h-1zM388 314h1v1h-1zM442 314h1v1h-1zM455 314h2v1h-2zM503 314h1v1h-1zM514 314h1v1h-1zM559 314h1v1h-1zM565 314h1v1h-1zM635 314h1v1h-1zM141 315h1v1h-1zM158 315h1v1h-1zM221 315h1v1h-1zM236 315h1v1h-1zM298 315h1v1h-1zM314 315h1v1h-1zM373 315h1v1h-1zM388 315h1v1h-1zM442 315h1v1h-1zM455 315h1v1h-1zM503 315h1v1h-1zM514 315h1v1h-1zM559 315h1v1h-1zM565 315h1v1h-1zM635 315h1v1h-1zM141 316h1v1h-1zM158 316h1v1h-1zM221 316h1v1h-1zM236 316h1v1h-1zM298 316h1v1h-1zM314 316h1v1h-1zM373 316h1v1h-1zM388 316h1v1h-1zM442 316h2v1h-2zM455 316h1v1h-1zM503 316h2v1h-2zM514 316h1v1h-1zM559 316h1v1h-1zM565 316h1v1h-1zM635 316h1v1h-1zM142 317h1v1h-1zM158 317h1v1h-1zM221 317h1v1h-1zM236 317h1v1h-1zM298 317h1v1h-1zM314 317h1v1h-1zM373 317h1v1h-1zM388 317h1v1h-1zM443 317h1v1h-1zM455 317h1v1h-1zM504 317h1v1h-1zM513 317h1v1h-1zM559 317h1v1h-1zM565 317h1v1h-1zM635 317h1v1h-1zM142 318h1v1h-1zM158 318h1v1h-1zM221 318h1v1h-1zM236 318h1v1h-1zM298 318h2v1h-2zM313 318h1v1h-1zM373 318h1v1h-1zM388 318h1v1h-1zM443 318h1v1h-1zM455 318h1v1h-1zM504 318h1v1h-1zM513 318h1v1h-1zM559 318h1v1h-1zM565 318h1v1h-1zM635 318h1v1h-1zM142 319h1v1h-1zM158 319h1v1h-1zM221 319h1v1h-1zM236 319h1v1h-1zM299 319h1v1h-1zM313 319h1v1h-1zM373 319h1v1h-1zM387 319h1v1h-1zM443 319h1v1h-1zM455 319h1v1h-1zM504 319h1v1h-1zM513 319h1v1h-1zM559 319h1v1h-1zM565 319h1v1h-1zM635 319h1v1h-1zM142 320h1v1h-1zM158 320h1v1h-1zM221 320h1v1h-1zM235 320h2v1h-2zM299 320h1v1h-1zM313 320h1v1h-1zM373 320h2v1h-2zM387 320h1v1h-1zM443 320h2v1h-2zM455 320h1v1h-1zM504 320h1v1h-1zM513 320h1v1h-1zM559 320h1v1h-1zM564 320h2v1h-2zM635 320h1v1h-1zM142 321h1v1h-1zM157 321h2v1h-2zM221 321h1v1h-1zM235 321h1v1h-1zM299 321h1v1h-1zM313 321h1v1h-1zM374 321h1v1h-1zM387 321h1v1h-1zM444 321h1v1h-1zM455 321h1v1h-1zM504 321h1v1h-1zM513 321h1v1h-1zM560 321h1v1h-1zM564 321h1v1h-1zM635 321h1v1h-1zM142 322h1v1h-1zM157 322h1v1h-1zM221 322h1v1h-1zM235 322h1v1h-1zM299 322h1v1h-1zM313 322h1v1h-1zM374 322h1v1h-1zM387 322h1v1h-1zM444 322h1v1h-1zM455 322h1v1h-1zM504 322h1v1h-1zM513 322h1v1h-1zM560 322h1v1h-1zM564 322h1v1h-1zM635 322h1v1h-1zM142 323h1v1h-1zM157 323h1v1h-1zM221 323h1v1h-1zM235 323h1v1h-1zM299 323h1v1h-1zM313 323h1v1h-1zM374 323h1v1h-1zM387 323h1v1h-1zM444 323h1v1h-1zM454 323h2v1h-2zM504 323h1v1h-1zM513 323h1v1h-1zM560 323h1v1h-1zM564 323h1v1h-1zM635 323h1v1h-1zM142 324h1v1h-1zM157 324h1v1h-1zM221 324h1v1h-1zM235 324h1v1h-1zM299 324h1v1h-1zM312 324h2v1h-2zM374 324h1v1h-1zM387 324h1v1h-1zM444 324h1v1h-1zM454 324h1v1h-1zM504 324h1v1h-1zM513 324h1v1h-1zM560 324h1v1h-1zM564 324h1v1h-1zM635 324h1v1h-1zM142 325h2v1h-2zM157 325h1v1h-1zM221 325h1v1h-1zM235 325h1v1h-1zM299 325h2v1h-2zM312 325h1v1h-1zM374 325h1v1h-1zM387 325h1v1h-1zM444 325h1v1h-1zM454 325h1v1h-1zM505 325h1v1h-1zM513 325h1v1h-1zM560 325h1v1h-1zM564 325h1v1h-1zM635 325h1v1h-1zM143 326h1v1h-1zM157 326h1v1h-1zM221 326h1v1h-1zM234 326h2v1h-2zM300 326h1v1h-1zM312 326h1v1h-1zM374 326h1v1h-1zM387 326h1v1h-1zM444 326h1v1h-1zM454 326h1v1h-1zM505 326h1v1h-1zM513 326h1v1h-1zM560 326h1v1h-1zM564 326h1v1h-1zM635 326h1v1h-1zM143 327h1v1h-1zM156 327h2v1h-2zM221 327h1v1h-1zM234 327h1v1h-1zM300 327h1v1h-1zM312 327h1v1h-1zM374 327h1v1h-1zM386 327h1v1h-1zM444 327h1v1h-1zM454 327h1v1h-1zM505 327h1v1h-1zM513 327h1v1h-1zM560 327h1v1h-1zM564 327h1v1h-1zM635 327h1v1h-1zM143 328h1v1h-1zM156 328h1v1h-1zM221 328h1v1h-1zM234 328h1v1h-1zM300 328h1v1h-1zM312 328h1v1h-1zM374 328h1v1h-1zM386 328h1v1h-1zM444 328h1v1h-1zM454 328h1v1h-1zM505 328h1v1h-1zM513 328h1v1h-1zM560 328h2v1h-2zM564 328h1v1h-1zM635 328h1v1h-1zM143 329h1v1h-1zM156 329h1v1h-1zM221 329h1v1h-1zM234 329h1v1h-1zM300 329h1v1h-1zM312 329h1v1h-1zM374 329h2v1h-2zM386 329h1v1h-1zM444 329h1v1h-1zM454 329h1v1h-1zM505 329h1v1h-1zM513 329h1v1h-1zM561 329h1v1h-1zM564 329h1v1h-1zM635 329h1v1h-1zM143 330h1v1h-1zM156 330h1v1h-1zM221 330h1v1h-1zM234 330h1v1h-1zM300 330h1v1h-1zM312 330h1v1h-1zM375 330h1v1h-1zM386 330h1v1h-1zM444 330h1v1h-1zM454 330h1v1h-1zM505 330h1v1h-1zM513 330h1v1h-1zM561 330h1v1h-1zM564 330h1v1h-1zM635 330h1v1h-1zM143 331h1v1h-1zM156 331h1v1h-1zM222 331h1v1h-1zM234 331h1v1h-1zM300 331h1v1h-1zM312 331h1v1h-1zM375 331h1v1h-1zM386 331h1v1h-1zM444 331h1v1h-1zM454 331h1v1h-1zM505 331h1v1h-1zM513 331h1v1h-1zM561 331h1v1h-1zM564 331h1v1h-1zM635 331h1v1h-1zM143 332h1v1h-1zM156 332h1v1h-1zM222 332h1v1h-1zM234 332h1v1h-1zM300 332h1v1h-1zM312 332h1v1h-1zM375 332h1v1h-1zM386 332h1v1h-1zM444 332h1v1h-1zM454 332h1v1h-1zM505 332h1v1h-1zM513 332h1v1h-1zM561 332h1v1h-1zM564 332h1v1h-1zM635 332h1v1h-1zM143 333h1v1h-1zM155 333h2v1h-2zM222 333h1v1h-1zM233 333h1v1h-1zM300 333h1v1h-1zM311 333h1v1h-1zM375 333h1v1h-1zM386 333h1v1h-1zM444 333h1v1h-1zM454 333h1v1h-1zM505 333h1v1h-1zM513 333h1v1h-1zM561 333h1v1h-1zM564 333h1v1h-1zM635 333h1v1h-1zM143 334h1v1h-1zM155 334h1v1h-1zM222 334h1v1h-1zM233 334h1v1h-1zM301 334h1v1h-1zM311 334h1v1h-1zM375 334h1v1h-1zM386 334h1v1h-1zM445 334h1v1h-1zM454 334h1v1h-1zM505 334h1v1h-1zM513 334h1v1h-1zM561 334h1v1h-1zM564 334h1v1h-1zM635 334h1v1h-1zM143 335h1v1h-1zM155 335h1v1h-1zM222 335h1v1h-1zM233 335h1v1h-1zM301 335h1v1h-1zM311 335h1v1h-1zM375 335h1v1h-1zM386 335h1v1h-1zM445 335h1v1h-1zM454 335h1v1h-1zM506 335h1v1h-1zM513 335h1v1h-1zM561 335h1v1h-1zM564 335h1v1h-1zM635 335h1v1h-1zM143 336h1v1h-1zM155 336h1v1h-1zM222 336h1v1h-1zM233 336h1v1h-1zM301 336h1v1h-1zM311 336h1v1h-1zM375 336h1v1h-1zM385 336h1v1h-1zM445 336h1v1h-1zM454 336h1v1h-1zM506 336h1v1h-1zM513 336h1v1h-1zM561 336h1v1h-1zM564 336h1v1h-1zM635 336h1v1h-1zM143 337h1v1h-1zM155 337h1v1h-1zM222 337h1v1h-1zM233 337h1v1h-1zM301 337h1v1h-1zM311 337h1v1h-1zM375 337h1v1h-1zM385 337h1v1h-1zM445 337h1v1h-1zM454 337h1v1h-1zM506 337h1v1h-1zM512 337h1v1h-1zM561 337h1v1h-1zM564 337h1v1h-1zM635 337h1v1h-1zM143 338h1v1h-1zM155 338h1v1h-1zM222 338h1v1h-1zM233 338h1v1h-1zM301 338h1v1h-1zM311 338h1v1h-1zM375 338h1v1h-1zM385 338h1v1h-1zM445 338h1v1h-1zM453 338h2v1h-2zM506 338h1v1h-1zM512 338h1v1h-1zM561 338h1v1h-1zM564 338h1v1h-1zM635 338h1v1h-1zM144 339h1v1h-1zM154 339h2v1h-2zM222 339h1v1h-1zM232 339h1v1h-1zM301 339h1v1h-1zM311 339h1v1h-1zM375 339h1v1h-1zM385 339h1v1h-1zM445 339h1v1h-1zM453 339h1v1h-1zM506 339h1v1h-1zM512 339h1v1h-1zM561 339h1v1h-1zM564 339h1v1h-1zM635 339h1v1h-1zM144 340h1v1h-1zM154 340h1v1h-1zM222 340h1v1h-1zM232 340h1v1h-1zM301 340h1v1h-1zM311 340h1v1h-1zM375 340h1v1h-1zM385 340h1v1h-1zM445 340h1v1h-1zM453 340h1v1h-1zM506 340h1v1h-1zM512 340h1v1h-1zM561 340h1v1h-1zM564 340h1v1h-1zM635 340h1v1h-1zM144 341h1v1h-1zM154 341h1v1h-1zM222 341h1v1h-1zM232 341h1v1h-1zM301 341h1v1h-1zM310 341h2v1h-2zM375 341h1v1h-1zM385 341h1v1h-1zM445 341h1v1h-1zM453 341h1v1h-1zM506 341h1v1h-1zM512 341h1v1h-1zM561 341h1v1h-1zM564 341h1v1h-1zM635 341h1v1h-1zM144 342h1v1h-1zM154 342h1v1h-1zM222 342h1v1h-1zM232 342h1v1h-1zM301 342h1v1h-1zM310 342h1v1h-1zM375 342h1v1h-1zM385 342h1v1h-1zM445 342h1v1h-1zM453 342h1v1h-1zM506 342h1v1h-1zM512 342h1v1h-1zM561 342h1v1h-1zM564 342h1v1h-1zM635 342h1v1h-1zM144 343h1v1h-1zM154 343h1v1h-1zM222 343h1v1h-1zM232 343h1v1h-1zM301 343h1v1h-1zM310 343h1v1h-1zM375 343h1v1h-1zM385 343h1v1h-1zM445 343h1v1h-1zM453 343h1v1h-1zM506 343h1v1h-1zM512 343h1v1h-1zM561 343h1v1h-1zM564 343h1v1h-1zM635 343h1v1h-1zM144 344h1v1h-1zM154 344h1v1h-1zM222 344h1v1h-1zM232 344h1v1h-1zM301 344h1v1h-1zM310 344h1v1h-1zM375 344h1v1h-1zM384 344h2v1h-2zM445 344h1v1h-1zM453 344h1v1h-1zM506 344h1v1h-1zM512 344h1v1h-1zM562 344h1v1h-1zM564 344h1v1h-1zM635 344h1v1h-1zM144 345h1v1h-1zM153 345h2v1h-2zM222 345h1v1h-1zM231 345h2v1h-2zM301 345h1v1h-1zM310 345h1v1h-1zM375 345h1v1h-1zM384 345h1v1h-1zM445 345h1v1h-1zM453 345h1v1h-1zM506 345h1v1h-1zM512 345h1v1h-1zM562 345h1v1h-1zM564 345h1v1h-1zM635 345h1v1h-1zM144 346h1v1h-1zM153 346h1v1h-1zM222 346h1v1h-1zM231 346h1v1h-1zM301 346h1v1h-1zM310 346h1v1h-1zM375 346h1v1h-1zM384 346h1v1h-1zM445 346h1v1h-1zM452 346h1v1h-1zM506 346h1v1h-1zM512 346h1v1h-1zM562 346h1v1h-1zM564 346h1v1h-1zM635 346h1v1h-1zM144 347h1v1h-1zM153 347h1v1h-1zM223 347h1v1h-1zM231 347h1v1h-1zM301 347h1v1h-1zM310 347h1v1h-1zM376 347h1v1h-1zM384 347h1v1h-1zM445 347h1v1h-1zM452 347h1v1h-1zM506 347h1v1h-1zM512 347h1v1h-1zM562 347h1v1h-1zM564 347h1v1h-1zM635 347h1v1h-1zM144 348h1v1h-1zM153 348h1v1h-1zM223 348h1v1h-1zM231 348h1v1h-1zM301 348h1v1h-1zM310 348h1v1h-1zM376 348h1v1h-1zM384 348h1v1h-1zM445 348h1v1h-1zM452 348h1v1h-1zM506 348h1v1h-1zM511 348h1v1h-1zM562 348h1v1h-1zM564 348h1v1h-1zM635 348h1v1h-1zM144 349h1v1h-1zM153 349h1v1h-1zM223 349h1v1h-1zM231 349h1v1h-1zM301 349h1v1h-1zM309 349h2v1h-2zM376 349h1v1h-1zM383 349h1v1h-1zM445 349h1v1h-1zM452 349h1v1h-1zM506 349h1v1h-1zM511 349h1v1h-1zM562 349h1v1h-1zM564 349h1v1h-1zM635 349h1v1h-1zM144 350h1v1h-1zM153 350h1v1h-1zM223 350h1v1h-1zM231 350h1v1h-1zM301 350h1v1h-1zM309 350h1v1h-1zM376 350h1v1h-1zM383 350h1v1h-1zM446 350h1v1h-1zM452 350h1v1h-1zM506 350h1v1h-1zM511 350h1v1h-1zM562 350h1v1h-1zM564 350h1v1h-1zM635 350h1v1h-1zM144 351h1v1h-1zM152 351h2v1h-2zM223 351h1v1h-1zM230 351h2v1h-2zM301 351h1v1h-1zM309 351h1v1h-1zM376 351h1v1h-1zM383 351h1v1h-1zM446 351h1v1h-1zM452 351h1v1h-1zM506 351h1v1h-1zM511 351h1v1h-1zM562 351h1v1h-1zM564 351h1v1h-1zM635 351h1v1h-1zM144 352h1v1h-1zM152 352h1v1h-1zM223 352h1v1h-1zM230 352h1v1h-1zM301 352h1v1h-1zM309 352h1v1h-1zM376 352h1v1h-1zM383 352h1v1h-1zM446 352h1v1h-1zM452 352h1v1h-1zM506 352h1v1h-1zM511 352h1v1h-1zM562 352h1v1h-1zM564 352h1v1h-1zM635 352h1v1h-1zM144 353h1v1h-1zM152 353h1v1h-1zM223 353h1v1h-1zM230 353h1v1h-1zM301 353h1v1h-1zM309 353h1v1h-1zM376 353h1v1h-1zM383 353h1v1h-1zM446 353h1v1h-1zM452 353h1v1h-1zM507 353h1v1h-1zM511 353h1v1h-1zM562 353h1v1h-1zM564 353h1v1h-1zM635 353h1v1h-1zM144 354h1v1h-1zM152 354h1v1h-1zM223 354h1v1h-1zM230 354h1v1h-1zM301 354h1v1h-1zM309 354h1v1h-1zM376 354h1v1h-1zM383 354h1v1h-1zM446 354h1v1h-1zM452 354h1v1h-1zM507 354h1v1h-1zM511 354h1v1h-1zM562 354h1v1h-1zM564 354h1v1h-1zM635 354h1v1h-1zM144 355h1v1h-1zM152 355h1v1h-1zM223 355h1v1h-1zM230 355h1v1h-1zM301 355h1v1h-1zM309 355h1v1h-1zM376 355h1v1h-1zM383 355h1v1h-1zM446 355h1v1h-1zM452 355h1v1h-1zM507 355h1v1h-1zM511 355h1v1h-1zM562 355h1v1h-1zM564 355h1v1h-1zM635 355h1v1h-1zM144 356h1v1h-1zM152 356h1v1h-1zM223 356h1v1h-1zM230 356h1v1h-1zM301 356h1v1h-1zM308 356h2v1h-2zM376 356h1v1h-1zM383 356h1v1h-1zM446 356h1v1h-1zM451 356h1v1h-1zM507 356h1v1h-1zM511 356h1v1h-1zM562 356h1v1h-1zM564 356h1v1h-1zM635 356h1v1h-1zM144 357h1v1h-1zM152 357h1v1h-1zM223 357h1v1h-1zM230 357h1v1h-1zM301 357h1v1h-1zM308 357h1v1h-1zM376 357h1v1h-1zM383 357h1v1h-1zM446 357h1v1h-1zM451 357h1v1h-1zM507 357h1v1h-1zM511 357h1v1h-1zM562 357h1v1h-1zM564 357h1v1h-1zM635 357h1v1h-1zM144 358h1v1h-1zM151 358h2v1h-2zM223 358h1v1h-1zM229 358h1v1h-1zM301 358h1v1h-1zM308 358h1v1h-1zM376 358h1v1h-1zM382 358h1v1h-1zM446 358h1v1h-1zM451 358h1v1h-1zM507 358h1v1h-1zM511 358h1v1h-1zM562 358h1v1h-1zM564 358h1v1h-1zM635 358h1v1h-1zM144 359h1v1h-1zM151 359h1v1h-1zM223 359h1v1h-1zM229 359h1v1h-1zM301 359h1v1h-1zM308 359h1v1h-1zM376 359h1v1h-1zM382 359h1v1h-1zM446 359h1v1h-1zM451 359h1v1h-1zM507 359h1v1h-1zM511 359h1v1h-1zM562 359h1v1h-1zM564 359h1v1h-1zM635 359h1v1h-1zM144 360h1v1h-1zM151 360h1v1h-1zM223 360h1v1h-1zM229 360h1v1h-1zM301 360h1v1h-1zM308 360h1v1h-1zM376 360h1v1h-1zM382 360h1v1h-1zM446 360h1v1h-1zM451 360h1v1h-1zM507 360h1v1h-1zM511 360h1v1h-1zM562 360h1v1h-1zM564 360h1v1h-1zM635 360h1v1h-1zM144 361h1v1h-1zM151 361h1v1h-1zM223 361h1v1h-1zM229 361h1v1h-1zM301 361h1v1h-1zM308 361h1v1h-1zM376 361h1v1h-1zM382 361h1v1h-1zM446 361h1v1h-1zM451 361h1v1h-1zM507 361h1v1h-1zM511 361h1v1h-1zM562 361h1v1h-1zM564 361h1v1h-1zM635 361h1v1h-1zM145 362h1v1h-1zM151 362h1v1h-1zM223 362h1v1h-1zM229 362h1v1h-1zM301 362h1v1h-1zM307 362h2v1h-2zM376 362h1v1h-1zM382 362h1v1h-1zM446 362h1v1h-1zM451 362h1v1h-1zM507 362h1v1h-1zM511 362h1v1h-1zM562 362h1v1h-1zM564 362h1v1h-1zM635 362h1v1h-1zM145 363h1v1h-1zM151 363h1v1h-1zM223 363h1v1h-1zM229 363h1v1h-1zM301 363h1v1h-1zM307 363h1v1h-1zM376 363h1v1h-1zM382 363h1v1h-1zM446 363h1v1h-1zM451 363h1v1h-1zM507 363h1v1h-1zM511 363h1v1h-1zM562 363h1v1h-1zM564 363h1v1h-1zM635 363h1v1h-1zM145 364h1v1h-1zM151 364h1v1h-1zM223 364h1v1h-1zM229 364h1v1h-1zM301 364h1v1h-1zM307 364h1v1h-1zM376 364h1v1h-1zM382 364h1v1h-1zM446 364h1v1h-1zM451 364h1v1h-1zM507 364h1v1h-1zM510 364h1v1h-1zM562 364h2v1h-2zM635 364h1v1h-1zM145 365h1v1h-1zM151 365h1v1h-1zM223 365h1v1h-1zM229 365h1v1h-1zM301 365h1v1h-1zM307 365h1v1h-1zM376 365h1v1h-1zM382 365h1v1h-1zM446 365h1v1h-1zM451 365h1v1h-1zM507 365h1v1h-1zM510 365h1v1h-1zM562 365h2v1h-2zM635 365h1v1h-1zM145 366h1v1h-1zM150 366h2v1h-2zM223 366h1v1h-1zM228 366h1v1h-1zM301 366h1v1h-1zM307 366h1v1h-1zM376 366h1v1h-1zM381 366h1v1h-1zM446 366h1v1h-1zM451 366h1v1h-1zM507 366h1v1h-1zM510 366h1v1h-1zM562 366h2v1h-2zM635 366h1v1h-1zM145 367h1v1h-1zM150 367h1v1h-1zM223 367h1v1h-1zM228 367h1v1h-1zM301 367h1v1h-1zM307 367h1v1h-1zM376 367h1v1h-1zM381 367h1v1h-1zM446 367h1v1h-1zM450 367h1v1h-1zM507 367h1v1h-1zM510 367h1v1h-1zM562 367h2v1h-2zM635 367h1v1h-1zM145 368h1v1h-1zM150 368h1v1h-1zM223 368h1v1h-1zM228 368h1v1h-1zM301 368h1v1h-1zM307 368h1v1h-1zM376 368h1v1h-1zM381 368h1v1h-1zM446 368h1v1h-1zM450 368h1v1h-1zM507 368h1v1h-1zM510 368h1v1h-1zM562 368h2v1h-2zM635 368h1v1h-1zM145 369h1v1h-1zM150 369h1v1h-1zM223 369h1v1h-1zM228 369h1v1h-1zM301 369h1v1h-1zM306 369h1v1h-1zM376 369h1v1h-1zM381 369h1v1h-1zM446 369h1v1h-1zM450 369h1v1h-1zM507 369h1v1h-1zM510 369h1v1h-1zM562 369h2v1h-2zM635 369h1v1h-1zM145 370h1v1h-1zM150 370h1v1h-1zM223 370h1v1h-1zM228 370h1v1h-1zM301 370h1v1h-1zM306 370h1v1h-1zM376 370h1v1h-1zM381 370h1v1h-1zM446 370h1v1h-1zM450 370h1v1h-1zM507 370h1v1h-1zM510 370h1v1h-1zM562 370h2v1h-2zM635 370h1v1h-1zM145 371h1v1h-1zM150 371h1v1h-1zM223 371h1v1h-1zM228 371h1v1h-1zM302 371h1v1h-1zM306 371h1v1h-1zM376 371h1v1h-1zM381 371h1v1h-1zM446 371h1v1h-1zM450 371h1v1h-1zM507 371h1v1h-1zM510 371h1v1h-1zM562 371h2v1h-2zM635 371h1v1h-1zM145 372h1v1h-1zM150 372h1v1h-1zM223 372h1v1h-1zM228 372h1v1h-1zM302 372h1v1h-1zM306 372h1v1h-1zM376 372h1v1h-1zM381 372h1v1h-1zM446 372h1v1h-1zM450 372h1v1h-1zM507 372h1v1h-1zM510 372h1v1h-1zM562 372h2v1h-2zM635 372h1v1h-1zM145 373h1v1h-1zM149 373h1v1h-1zM223 373h1v1h-1zM227 373h2v1h-2zM302 373h1v1h-1zM306 373h1v1h-1zM376 373h1v1h-1zM381 373h1v1h-1zM446 373h1v1h-1zM450 373h1v1h-1zM507 373h1v1h-1zM510 373h1v1h-1zM562 373h2v1h-2zM635 373h1v1h-1zM145 374h1v1h-1zM149 374h1v1h-1zM223 374h1v1h-1zM227 374h1v1h-1zM302 374h1v1h-1zM306 374h1v1h-1zM376 374h1v1h-1zM381 374h1v1h-1zM446 374h1v1h-1zM450 374h1v1h-1zM507 374h1v1h-1zM510 374h1v1h-1zM562 374h2v1h-2zM635 374h1v1h-1zM145 375h1v1h-1zM149 375h1v1h-1zM223 375h1v1h-1zM227 375h1v1h-1zM302 375h1v1h-1zM305 375h2v1h-2zM376 375h1v1h-1zM381 375h1v1h-1zM446 375h1v1h-1zM450 375h1v1h-1zM507 375h1v1h-1zM510 375h1v1h-1zM562 375h2v1h-2zM635 375h1v1h-1zM145 376h1v1h-1zM149 376h1v1h-1zM223 376h1v1h-1zM227 376h1v1h-1zM302 376h1v1h-1zM305 376h1v1h-1zM376 376h1v1h-1zM380 376h1v1h-1zM446 376h1v1h-1zM450 376h1v1h-1zM507 376h1v1h-1zM510 376h1v1h-1zM562 376h2v1h-2zM635 376h1v1h-1zM145 377h1v1h-1zM149 377h1v1h-1zM223 377h1v1h-1zM227 377h1v1h-1zM302 377h1v1h-1zM305 377h1v1h-1zM376 377h1v1h-1zM380 377h1v1h-1zM446 377h1v1h-1zM450 377h1v1h-1zM507 377h1v1h-1zM510 377h1v1h-1zM562 377h2v1h-2zM635 377h1v1h-1zM145 378h1v1h-1zM149 378h1v1h-1zM223 378h1v1h-1zM227 378h1v1h-1zM302 378h1v1h-1zM305 378h1v1h-1zM376 378h1v1h-1zM380 378h1v1h-1zM446 378h1v1h-1zM449 378h1v1h-1zM507 378h1v1h-1zM509 378h1v1h-1zM562 378h2v1h-2zM635 378h1v1h-1zM145 379h1v1h-1zM148 379h1v1h-1zM223 379h1v1h-1zM227 379h1v1h-1zM302 379h1v1h-1zM305 379h1v1h-1zM376 379h1v1h-1zM380 379h1v1h-1zM446 379h1v1h-1zM449 379h1v1h-1zM507 379h1v1h-1zM509 379h1v1h-1zM562 379h2v1h-2zM635 379h1v1h-1zM145 380h1v1h-1zM148 380h1v1h-1zM223 380h1v1h-1zM227 380h1v1h-1zM302 380h1v1h-1zM305 380h1v1h-1zM376 380h1v1h-1zM380 380h1v1h-1zM446 380h1v1h-1zM449 380h1v1h-1zM507 380h1v1h-1zM509 380h1v1h-1zM562 380h2v1h-2zM635 380h1v1h-1zM145 381h1v1h-1zM148 381h1v1h-1zM223 381h1v1h-1zM226 381h1v1h-1zM302 381h1v1h-1zM305 381h1v1h-1zM376 381h1v1h-1zM380 381h1v1h-1zM446 381h1v1h-1zM449 381h1v1h-1zM507 381h1v1h-1zM509 381h1v1h-1zM562 381h2v1h-2zM635 381h1v1h-1zM145 382h1v1h-1zM148 382h1v1h-1zM223 382h1v1h-1zM226 382h1v1h-1zM302 382h1v1h-1zM305 382h1v1h-1zM376 382h1v1h-1zM379 382h1v1h-1zM446 382h1v1h-1zM449 382h1v1h-1zM507 382h1v1h-1zM509 382h1v1h-1zM562 382h2v1h-2zM635 382h1v1h-1zM145 383h1v1h-1zM148 383h1v1h-1zM223 383h1v1h-1zM226 383h1v1h-1zM302 383h1v1h-1zM305 383h1v1h-1zM376 383h1v1h-1zM379 383h1v1h-1zM446 383h1v1h-1zM449 383h1v1h-1zM507 383h1v1h-1zM509 383h1v1h-1zM562 383h2v1h-2zM635 383h1v1h-1zM145 384h1v1h-1zM148 384h1v1h-1zM223 384h1v1h-1zM226 384h1v1h-1zM302 384h1v1h-1zM305 384h1v1h-1zM376 384h1v1h-1zM379 384h1v1h-1zM446 384h1v1h-1zM449 384h1v1h-1zM507 384h1v1h-1zM509 384h1v1h-1zM562 384h2v1h-2zM635 384h1v1h-1zM145 385h1v1h-1zM147 385h1v1h-1zM223 385h1v1h-1zM226 385h1v1h-1zM302 385h1v1h-1zM305 385h1v1h-1zM376 385h1v1h-1zM379 385h1v1h-1zM447 385h1v1h-1zM449 385h1v1h-1zM507 385h1v1h-1zM509 385h1v1h-1zM563 385h1v1h-1zM635 385h1v1h-1zM145 386h1v1h-1zM147 386h1v1h-1zM223 386h1v1h-1zM226 386h1v1h-1zM302 386h1v1h-1zM305 386h1v1h-1zM376 386h1v1h-1zM379 386h1v1h-1zM447 386h2v1h-2zM507 386h1v1h-1zM509 386h1v1h-1zM563 386h1v1h-1zM635 386h1v1h-1zM145 387h1v1h-1zM147 387h1v1h-1zM223 387h1v1h-1zM226 387h1v1h-1zM302 387h1v1h-1zM305 387h1v1h-1zM376 387h1v1h-1zM379 387h1v1h-1zM447 387h2v1h-2zM508 387h2v1h-2zM563 387h1v1h-1zM635 387h1v1h-1zM145 388h1v1h-1zM147 388h1v1h-1zM223 388h1v1h-1zM226 388h1v1h-1zM302 388h1v1h-1zM305 388h1v1h-1zM377 388h1v1h-1zM379 388h1v1h-1zM447 388h2v1h-2zM508 388h2v1h-2zM563 388h1v1h-1zM635 388h1v1h-1zM145 389h1v1h-1zM147 389h1v1h-1zM223 389h1v1h-1zM225 389h1v1h-1zM302 389h1v1h-1zM305 389h1v1h-1zM377 389h1v1h-1zM379 389h1v1h-1zM447 389h2v1h-2zM508 389h2v1h-2zM563 389h1v1h-1zM635 389h1v1h-1zM145 390h1v1h-1zM147 390h1v1h-1zM223 390h1v1h-1zM225 390h1v1h-1zM302 390h1v1h-1zM304 390h1v1h-1zM377 390h1v1h-1zM379 390h1v1h-1zM447 390h2v1h-2zM508 390h2v1h-2zM563 390h1v1h-1zM635 390h1v1h-1zM145 391h1v1h-1zM147 391h1v1h-1zM223 391h1v1h-1zM225 391h1v1h-1zM302 391h1v1h-1zM304 391h1v1h-1zM377 391h2v1h-2zM447 391h2v1h-2zM508 391h2v1h-2zM563 391h1v1h-1zM635 391h1v1h-1zM145 392h2v1h-2zM223 392h1v1h-1zM225 392h1v1h-1zM302 392h1v1h-1zM304 392h1v1h-1zM377 392h2v1h-2zM447 392h2v1h-2zM508 392h2v1h-2zM563 392h1v1h-1zM635 392h1v1h-1zM145 393h2v1h-2zM223 393h1v1h-1zM225 393h1v1h-1zM302 393h1v1h-1zM304 393h1v1h-1zM377 393h2v1h-2zM447 393h2v1h-2zM508 393h2v1h-2zM563 393h1v1h-1zM635 393h1v1h-1zM145 394h2v1h-2zM223 394h1v1h-1zM225 394h1v1h-1zM302 394h2v1h-2zM377 394h2v1h-2zM447 394h2v1h-2zM508 394h2v1h-2zM563 394h1v1h-1zM635 394h1v1h-1zM145 395h2v1h-2zM224 395h2v1h-2zM302 395h2v1h-2zM377 395h2v1h-2zM447 395h2v1h-2zM508 395h2v1h-2zM563 395h1v1h-1zM635 395h1v1h-1zM145 396h2v1h-2zM224 396h2v1h-2zM302 396h2v1h-2zM377 396h2v1h-2zM447 396h2v1h-2zM508 396h2v1h-2zM563 396h1v1h-1zM635 396h1v1h-1zM145 397h2v1h-2zM224 397h1v1h-1zM302 397h2v1h-2zM377 397h2v1h-2zM447 397h2v1h-2zM508 397h2v1h-2zM563 397h1v1h-1zM635 397h1v1h-1zM145 398h1v1h-1zM224 398h1v1h-1zM302 398h2v1h-2zM377 398h2v1h-2zM447 398h2v1h-2zM508 398h1v1h-1zM563 398h1v1h-1zM635 398h1v1h-1zM145 399h1v1h-1zM224 399h1v1h-1zM302 399h2v1h-2zM377 399h2v1h-2zM447 399h1v1h-1zM508 399h1v1h-1zM563 399h1v1h-1zM635 399h1v1h-1zM145 400h1v1h-1zM224 400h1v1h-1zM302 400h2v1h-2zM377 400h1v1h-1zM447 400h1v1h-1zM508 400h1v1h-1zM563 400h1v1h-1zM635 400h1v1h-1zM635 401h1v1h-1zM635 402h1v1h-1zM635 403h1v1h-1zM635 404h1v1h-1zM635 405h1v1h-1zM635 406h1v1h-1zM635 407h1v1h-1zM635 408h1v1h-1zM635 409h1v1h-1zM635 410h1v1h-1zM635 411h1v1h-1zM635 412h1v1h-1zM635 413h1v1h-1zM635 414h1v1h-1zM635 415h1v1h-1zM635 416h1v1h-1zM635 417h1v1h-1zM635 418h1v1h-1zM635 419h1v1h-1zM635 420h1v1h-1zM635 421h1v1h-1zM635 422h1v1h-1zM635 423h1v1h-1zM635 424h1v1h-1zM635 425h1v1h-1zM635 426h1v1h-1zM635 427h1v1h-1zM635 428h1v1h-1zM635 429h1v1h-1zM635 430h1v1h-1zM635 431h1v1h-1zM635 432h1v1h-1zM635 433h1v1h-1zM635 434h1v1h-1zM1 441h15v1h-15zM1 442h15v1h-15zM1 443h15v1h-15zM1 444h6v1h-6zM9 444h7v1h-7zM1 445h5v1h-5zM9 445h7v1h-7zM617 445h2v1h-2zM627 445h2v1h-2zM1 446h6v1h-6zM9 446h7v1h-7zM612 446h1v1h-1zM614 446h1v1h-1zM617 446h2v1h-2zM622 446h1v1h-1zM624 446h1v1h-1zM627 446h2v1h-2zM1 447h6v1h-6zM9 447h7v1h-7zM612 447h3v1h-3zM617 447h2v1h-2zM622 447h3v1h-3zM627 447h2v1h-2zM1 448h6v1h-6zM9 448h7v1h-7zM612 448h3v1h-3zM617 448h2v1h-2zM622 448h3v1h-3zM627 448h2v1h-2zM1 449h6v1h-6zM9 449h7v1h-7zM611 449h3v1h-3zM616 449h3v1h-3zM621 449h3v1h-3zM626 449h3v1h-3zM1 450h4v1h-4zM11 450h5v1h-5zM611 450h3v1h-3zM616 450h3v1h-3zM621 450h3v1h-3zM626 450h3v1h-3zM1 451h15v1h-15zM1 452h15v1h-15zM1 453h15v1h-15z"/>
<path fill="#55ffff" d="M445 2h18v1h-18zM470 2h18v1h-18zM505 2h18v1h-18zM530 2h18v1h-18zM565 2h18v1h-18zM615 2h18v1h-18zM445 3h17v1h-17zM470 3h17v1h-17zM505 3h17v1h-17zM530 3h17v1h-17zM565 3h17v1h-17zM615 3h17v1h-17zM445 4h2v1h-2zM470 4h2v1h-2zM505 4h2v1h-2zM530 4h2v1h-2zM565 4h2v1h-2zM615 4h2v1h-2zM445 5h2v1h-2zM470 5h2v1h-2zM505 5h2v1h-2zM530 5h2v1h-2zM565 5h2v1h-2zM615 5h2v1h-2zM445 6h2v1h-2zM470 6h2v1h-2zM505 6h2v1h-2zM530 6h2v1h-2zM565 6h2v1h-2zM615 6h2v1h-2zM445 7h2v1h-2zM470 7h2v1h-2zM505 7h2v1h-2zM530 7h2v1h-2zM565 7h2v1h-2zM615 7h2v1h-2zM445 8h2v1h-2zM470 8h2v1h-2zM505 8h2v1h-2zM530 8h2v1h-2zM565 8h2v1h-2zM615 8h2v1h-2zM445 9h2v1h-2zM470 9h2v1h-2zM505 9h2v1h-2zM530 9h2v1h-2zM565 9h2v1h-2zM615 9h2v1h-2zM445 10h2v1h-2zM470 10h2v1h-2zM505 10h2v1h-2zM530 10h2v1h-2zM565 10h2v1h-2zM615 10h2v1h-2zM445 11h2v1h-2zM470 11h2v1h-2zM505 11h2v1h-2zM530 11h2v1h-2zM565 11h2v1h-2zM615 11h2v1h-2zM445 12h2v1h-2zM470 12h2v1h-2zM505 12h2v1h-2zM530 12h2v1h-2zM565 12h2v1h-2zM615 12h2v1h-2zM445 13h2v1h-2zM470 13h2v1h-2zM505 13h2v1h-2zM530 13h2v1h-2zM565 13h2v1h-2zM615 13h2v1h-2zM445 14h2v1h-2zM470 14h2v1h-2zM505 14h2v1h-2zM530 14h2v1h-2zM565 14h2v1h-2zM615 14h2v1h-2zM445 15h1v1h-1zM470 15h1v1h-1zM505 15h1v1h-1zM530 15h1v1h-1zM565 15h1v1h-1zM615 15h1v1h-1z"/>
<path fill="#00aaaa" d="M463 2h1v1h-1zM488 2h1v1h-1zM523 2h1v1h-1zM548 2h1v1h-1zM583 2h1v1h-1zM633 2h1v1h-1zM462 3h2v1h-2zM487 3h2v1h-2zM522 3h2v1h-2zM547 3h2v1h-2zM582 3h2v1h-2zM632 3h2v1h-2zM462 4h2v1h-2zM487 4h2v1h-2zM522 4h2v1h-2zM547 4h2v1h-2zM582 4h2v1h-2zM632 4h2v1h-2zM462 5h2v1h-2zM487 5h2v1h-2zM522 5h2v1h-2zM547 5h2v1h-2zM582 5h2v1h-2zM632 5h2v1h-2zM462 6h2v1h-2zM487 6h2v1h-2zM522 6h2v1h-2zM547 6h2v1h-2zM582 6h2v1h-2zM632 6h2v1h-2zM462 7h2v1h-2zM487 7h2v1h-2zM522 7h2v1h-2zM547 7h2v1h-2zM582 7h2v1h-2zM632 7h2v1h-2zM462 8h2v1h-2zM487 8h2v1h-2zM522 8h2v1h-2zM547 8h2v1h-2zM582 8h2v1h-2zM632 8h2v1h-2zM462 9h2v1h-2zM487 9h2v1h-2zM522 9h2v1h-2zM547 9h2v1h-2zM582 9h2v1h-2zM632 9h2v1h-2zM462 10h2v1h-2zM487 10h2v1h-2zM522 10h2v1h-2zM547 10h2v1h-2zM582 10h2v1h-2zM632 10h2v1h-2zM462 11h2v1h-2zM487 11h2v1h-2zM522 11h2v1h-2zM547 11h2v1h-2zM582 11h2v1h-2zM632 11h2v1h-2zM462 12h2v1h-2zM487 12h2v1h-2zM522 12h2v1h-2zM547 12h2v1h-2zM582 12h2v1h-2zM632 12h2v1h-2zM462 13h2v1h-2zM487 13h2v1h-2zM522 13h2v1h-2zM547 13h2v1h-2zM582 13h2v1h-2zM632 13h2v1h-2zM462 14h2v1h-2zM487 14h2v1h-2zM522 14h2v1h-2zM547 14h2v1h-2zM582 14h2v1h-2zM632 14h2v1h-2zM446 15h18v1h-18zM471 15h18v1h-18zM506 15h18v1h-18zM531 15h18v1h-18zM566 15h18v1h-18zM616 15h18v1h-18zM445 16h19v1h-19zM470 16h19v1h-19zM505 16h19v1h-19zM530 16h19v1h-19zM565 16h19v1h-19zM615 16h19v1h-19z"/>
<path fill="#555555" d="M590 2h18v1h-18zM590 3h17v1h-17zM590 4h2v1h-2zM590 5h2v1h-2zM590 6h2v1h-2zM590 7h2v1h-2zM590 8h2v1h-2zM590 9h2v1h-2zM590 10h2v1h-2zM590 11h2v1h-2zM590 12h2v1h-2zM590 13h2v1h-2zM590 14h2v1h-2zM590 15h1v1h-1z"/>
<path fill="#aaaaaa" d="M608 2h1v1h-1zM607 3h2v1h-2zM447 4h15v1h-15zM607 4h2v1h-2zM447 5h15v1h-15zM607 5h2v1h-2zM447 6h15v1h-15zM607 6h2v1h-2zM447 7h15v1h-15zM607 7h2v1h-2zM447 8h3v1h-3zM459 8h3v1h-3zM607 8h2v1h-2zM447 9h3v1h-3zM459 9h3v1h-3zM607 9h2v1h-2zM447 10h15v1h-15zM607 10h2v1h-2zM447 11h15v1h-15zM607 11h2v1h-2zM447 12h15v1h-15zM607 12h2v1h-2zM447 13h15v1h-15zM607 13h2v1h-2zM447 14h15v1h-15zM607 14h2v1h-2zM591 15h18v1h-18zM590 16h19v1h-19z"/>
<path fill="#aa0000" d="M472 4h15v1h-15zM472 5h15v1h-15zM472 6h4v1h-4zM483 6h4v1h-4zM472 7h4v1h-4zM483 7h4v1h-4zM472 8h4v1h-4zM478 8h3v1h-3zM483 8h4v1h-4zM472 9h4v1h-4zM478 9h3v1h-3zM483 9h4v1h-4zM472 10h4v1h-4zM478 10h3v1h-3zM483 10h4v1h-4zM472 11h4v1h-4zM483 11h4v1h-4zM472 12h4v1h-4zM483 12h4v1h-4zM472 13h15v1h-15zM472 14h15v1h-15z"/>
<path fill="#ffffff" d="M507 4h15v1h-15zM507 5h15v1h-15zM14 6h2v1h-2zM20 6h2v1h-2zM37 6h2v1h-2zM55 6h2v1h-2zM476 6h7v1h-7zM507 6h2v1h-2zM511 6h2v1h-2zM520 6h2v1h-2zM14 7h2v1h-2zM20 7h2v1h-2zM36 7h2v1h-2zM56 7h2v1h-2zM476 7h7v1h-7zM507 7h2v1h-2zM511 7h2v1h-2zM520 7h2v1h-2zM570 7h9v1h-9zM599 7h1v1h-1zM15 8h2v1h-2zM19 8h2v1h-2zM25 8h2v1h-2zM28 8h3v1h-3zM35 8h2v1h-2zM44 8h2v1h-2zM49 8h2v1h-2zM57 8h2v1h-2zM476 8h2v1h-2zM481 8h2v1h-2zM507 8h2v1h-2zM511 8h7v1h-7zM520 8h2v1h-2zM571 8h7v1h-7zM598 8h3v1h-3zM620 8h9v1h-9zM16 9h4v1h-4zM25 9h3v1h-3zM35 9h2v1h-2zM45 9h2v1h-2zM48 9h2v1h-2zM57 9h2v1h-2zM476 9h2v1h-2zM481 9h2v1h-2zM507 9h2v1h-2zM511 9h7v1h-7zM520 9h2v1h-2zM572 9h5v1h-5zM597 9h5v1h-5zM620 9h9v1h-9zM17 10h2v1h-2zM25 10h2v1h-2zM35 10h2v1h-2zM46 10h3v1h-3zM57 10h2v1h-2zM476 10h2v1h-2zM481 10h2v1h-2zM507 10h2v1h-2zM511 10h7v1h-7zM520 10h2v1h-2zM573 10h3v1h-3zM596 10h7v1h-7zM17 11h2v1h-2zM25 11h2v1h-2zM36 11h2v1h-2zM45 11h2v1h-2zM48 11h2v1h-2zM56 11h2v1h-2zM476 11h7v1h-7zM507 11h2v1h-2zM516 11h2v1h-2zM520 11h2v1h-2zM574 11h1v1h-1zM595 11h9v1h-9zM17 12h2v1h-2zM25 12h2v1h-2zM37 12h2v1h-2zM44 12h2v1h-2zM49 12h2v1h-2zM55 12h2v1h-2zM476 12h7v1h-7zM507 12h2v1h-2zM516 12h2v1h-2zM520 12h2v1h-2zM507 13h15v1h-15zM507 14h15v1h-15zM7 444h2v1h-2zM610 444h2v1h-2zM614 444h3v1h-3zM620 444h2v1h-2zM624 444h3v1h-3zM6 445h3v1h-3zM610 445h7v1h-7zM620 445h7v1h-7zM7 446h2v1h-2zM610 446h2v1h-2zM613 446h1v1h-1zM615 446h2v1h-2zM620 446h2v1h-2zM623 446h1v1h-1zM625 446h2v1h-2zM7 447h2v1h-2zM610 447h2v1h-2zM615 447h2v1h-2zM620 447h2v1h-2zM625 447h2v1h-2zM7 448h2v1h-2zM610 448h2v1h-2zM615 448h2v1h-2zM620 448h2v1h-2zM625 448h2v1h-2zM7 449h2v1h-2zM5 450h6v1h-6z"/>
<path fill="#ffff55" d="M532 4h15v1h-15zM532 5h15v1h-15zM532 6h15v1h-15zM532 7h15v1h-15zM532 8h3v1h-3zM544 8h3v1h-3zM532 9h3v1h-3zM544 9h3v1h-3zM532 10h15v1h-15zM532 11h15v1h-15zM532 12h15v1h-15zM532 13h15v1h-15zM532 14h15v1h-15z"/>
<path fill="#00aa00" d="M592 4h15v1h-15zM592 5h15v1h-15zM592 6h15v1h-15zM592 7h7v1h-7zM600 7h7v1h-7zM592 8h6v1h-6zM601 8h6v1h-6zM592 9h5v1h-5zM602 9h5v1h-5zM592 10h4v1h-4zM603 10h4v1h-4zM592 11h3v1h-3zM604 11h3v1h-3zM592 12h15v1h-15zM592 13h15v1h-15zM592 14h15v1h-15z"/>
<path fill="#0000aa" d="M2 2h73v1h-73zM2 3h73v1h-73zM2 4h73v1h-73zM617 4h15v1h-15zM2 5h73v1h-73zM617 5h15v1h-15zM2 6h12v1h-12zM16 6h4v1h-4zM22 6h15v1h-15zM39 6h16v1h-16zM57 6h18v1h-18zM617 6h15v1h-15zM2 7h12v1h-12zM18 7h2v1h-2zM24 7h12v1h-12zM41 7h15v1h-15zM59 7h16v1h-16zM617 7h15v1h-15zM2 8h13v1h-13zM18 8h1v1h-1zM24 8h1v1h-1zM27 8h1v1h-1zM31 8h4v1h-4zM41 8h3v1h-3zM46 8h3v1h-3zM51 8h5v1h-5zM60 8h15v1h-15zM617 8h3v1h-3zM629 8h3v1h-3zM2 9h13v1h-13zM24 9h1v1h-1zM33 9h2v1h-2zM40 9h5v1h-5zM53 9h4v1h-4zM61 9h14v1h-14zM617 9h3v1h-3zM629 9h3v1h-3zM2 10h14v1h-14zM23 10h2v1h-2zM33 10h2v1h-2zM39 10h6v1h-6zM53 10h4v1h-4zM61 10h14v1h-14zM617 10h15v1h-15zM2 11h15v1h-15zM22 11h3v1h-3zM30 11h6v1h-6zM39 11h6v1h-6zM52 11h4v1h-4zM61 11h14v1h-14zM617 11h15v1h-15zM2 12h15v1h-15zM21 12h4v1h-4zM29 12h7v1h-7zM40 12h4v1h-4zM52 12h3v1h-3zM61 12h14v1h-14zM617 12h15v1h-15zM2 13h16v1h-16zM21 13h5v1h-5zM29 13h8v1h-8zM41 13h4v1h-4zM53 13h3v1h-3zM60 13h15v1h-15zM617 13h15v1h-15zM2 14h16v1h-16zM21 14h5v1h-5zM29 14h9v1h-9zM41 14h4v1h-4zM48 14h2v1h-2zM53 14h3v1h-3zM59 14h16v1h-16zM617 14h15v1h-15zM2 15h73v1h-73zM2 16h73v1h-73zM50 20h585v1h-585zM50 21h1v1h-1zM634 21h1v1h-1zM50 22h1v1h-1zM634 22h1v1h-1zM50 23h1v1h-1zM98 23h1v1h-1zM172 23h1v1h-1zM246 23h1v1h-1zM320 23h1v1h-1zM394 23h1v1h-1zM467 23h1v1h-1zM541 23h1v1h-1zM615 23h1v1h-1zM634 23h1v1h-1zM50 24h1v1h-1zM634 24h1v1h-1zM50 25h1v1h-1zM634 25h1v1h-1zM50 26h1v1h-1zM634 26h1v1h-1zM28 27h6v1h-6zM38 27h3v1h-3zM50 27h1v1h-1zM98 27h1v1h-1zM172 27h1v1h-1zM246 27h1v1h-1zM320 27h1v1h-1zM394 27h1v1h-1zM467 27h1v1h-1zM541 27h1v1h-1zM615 27h1v1h-1zM634 27h1v1h-1zM28 28h2v1h-2zM37 28h2v1h-2zM50 28h1v1h-1zM634 28h1v1h-1zM28 29h5v1h-5zM36 29h2v1h-2zM50 29h1v1h-1zM634 29h1v1h-1zM32 30h2v1h-2zM36 30h5v1h-5zM50 30h1v1h-1zM634 30h1v1h-1zM32 31h2v1h-2zM36 31h2v1h-2zM40 31h2v1h-2zM50 31h2v1h-2zM55 31h1v1h-1zM59 31h1v1h-1zM63 31h1v1h-1zM67 31h1v1h-1zM71 31h1v1h-1zM75 31h1v1h-1zM79 31h1v1h-1zM83 31h1v1h-1zM87 31h1v1h-1zM91 31h1v1h-1zM95 31h1v1h-1zM98 31h2v1h-2zM103 31h1v1h-1zM107 31h1v1h-1zM111 31h1v1h-1zM115 31h1v1h-1zM119 31h1v1h-1zM123 31h1v1h-1zM127 31h1v1h-1zM131 31h1v1h-1zM135 31h1v1h-1zM139 31h1v1h-1zM143 31h1v1h-1zM147 31h1v1h-1zM151 31h1v1h-1zM155 31h1v1h-1zM159 31h1v1h-1zM163 31h1v1h-1zM167 31h1v1h-1zM171 31h2v1h-2zM175 31h1v1h-1zM179 31h1v1h-1zM183 31h1v1h-1zM187 31h1v1h-1zM191 31h1v1h-1zM195 31h1v1h-1zM199 31h1v1h-1zM203 31h1v1h-1zM207 31h1v1h-1zM211 31h1v1h-1zM215 31h1v1h-1zM219 31h1v1h-1zM223 31h1v1h-1zM227 31h1v1h-1zM231 31h1v1h-1zM235 31h1v1h-1zM239 31h1v1h-1zM243 31h1v1h-1zM246 31h2v1h-2zM251 31h1v1h-1zM255 31h1v1h-1zM259 31h1v1h-1zM263 31h1v1h-1zM267 31h1v1h-1zM271 31h1v1h-1zM275 31h1v1h-1zM279 31h1v1h-1zM283 31h1v1h-1zM287 31h1v1h-1zM291 31h1v1h-1zM295 31h1v1h-1zM299 31h1v1h-1zM303 31h1v1h-1zM307 31h1v1h-1zM311 31h1v1h-1zM315 31h1v1h-1zM319 31h2v1h-2zM323 31h1v1h-1zM327 31h1v1h-1zM331 31h1v1h-1zM335 31h1v1h-1zM339 31h1v1h-1zM343 31h1v1h-1zM347 31h1v1h-1zM351 31h1v1h-1zM355 31h1v1h-1zM359 31h1v1h-1zM363 31h1v1h-1zM367 31h1v1h-1zM371 31h1v1h-1zM375 31h1v1h-1zM379 31h1v1h-1zM383 31h1v1h-1zM387 31h1v1h-1zM391 31h1v1h-1zM394 31h2v1h-2zM399 31h1v1h-1zM403 31h1v1h-1zM407 31h1v1h-1zM411 31h1v1h-1zM415 31h1v1h-1zM419 31h1v1h-1zM423 31h1v1h-1zM427 31h1v1h-1zM431 31h1v1h-1zM435 31h1v1h-1zM439 31h1v1h-1zM443 31h1v1h-1zM447 31h1v1h-1zM451 31h1v1h-1zM455 31h1v1h-1zM459 31h1v1h-1zM463 31h1v1h-1zM467 31h1v1h-1zM471 31h1v1h-1zM475 31h1v1h-1zM479 31h1v1h-1zM483 31h1v1h-1zM487 31h1v1h-1zM491 31h1v1h-1zM495 31h1v1h-1zM499 31h1v1h-1zM503 31h1v1h-1zM507 31h1v1h-1zM511 31h1v1h-1zM515 31h1v1h-1zM519 31h1v1h-1zM523 31h1v1h-1zM527 31h1v1h-1zM531 31h1v1h-1zM535 31h1v1h-1zM539 31h1v1h-1zM541 31h1v1h-1zM543 31h1v1h-1zM547 31h1v1h-1zM551 31h1v1h-1zM555 31h1v1h-1zM559 31h1v1h-1zM563 31h1v1h-1zM567 31h1v1h-1zM571 31h1v1h-1zM575 31h1v1h-1zM579 31h1v1h-1zM583 31h1v1h-1zM587 31h1v1h-1zM591 31h1v1h-1zM595 31h1v1h-1zM599 31h1v1h-1zM603 31h1v1h-1zM607 31h1v1h-1zM611 31h1v1h-1zM615 31h1v1h-1zM619 31h1v1h-1zM623 31h1v1h-1zM627 31h1v1h-1zM631 31h1v1h-1zM634 31h1v1h-1zM28 32h2v1h-2zM32 32h2v1h-2zM36 32h2v1h-2zM40 32h2v1h-2zM50 32h1v1h-1zM634 32h1v1h-1zM29 33h4v1h-4zM37 33h4v1h-4zM50 33h1v1h-1zM634 33h1v1h-1zM50 34h1v1h-1zM634 34h1v1h-1zM50 35h1v1h-1zM98 35h1v1h-1zM172 35h1v1h-1zM246 35h1v1h-1zM320 35h1v1h-1zM394 35h1v1h-1zM467 35h1v1h-1zM541 35h1v1h-1zM615 35h1v1h-1zM634 35h1v1h-1zM50 36h1v1h-1zM634 36h1v1h-1zM50 37h1v1h-1zM634 37h1v1h-1zM50 38h1v1h-1zM634 38h1v1h-1zM50 39h1v1h-1zM98 39h1v1h-1zM172 39h1v1h-1zM246 39h1v1h-1zM320 39h1v1h-1zM394 39h1v1h-1zM467 39h1v1h-1zM541 39h1v1h-1zM615 39h1v1h-1zM634 39h1v1h-1zM50 40h1v1h-1zM634 40h1v1h-1zM50 41h1v1h-1zM634 41h1v1h-1zM50 42h1v1h-1zM634 42h1v1h-1zM50 43h1v1h-1zM98 43h1v1h-1zM172 43h1v1h-1zM246 43h1v1h-1zM320 43h1v1h-1zM394 43h1v1h-1zM467 43h1v1h-1zM541 43h1v1h-1zM615 43h1v1h-1zM634 43h1v1h-1zM50 44h1v1h-1zM634 44h1v1h-1zM50 45h1v1h-1zM634 45h1v1h-1zM50 46h1v1h-1zM634 46h1v1h-1zM50 47h1v1h-1zM98 47h1v1h-1zM172 47h1v1h-1zM246 47h1v1h-1zM320 47h1v1h-1zM394 47h1v1h-1zM467 47h1v1h-1zM541 47h1v1h-1zM615 47h1v1h-1zM634 47h1v1h-1zM50 48h1v1h-1zM634 48h1v1h-1zM50 49h1v1h-1zM634 49h1v1h-1zM50 50h1v1h-1zM634 50h1v1h-1zM50 51h1v1h-1zM98 51h1v1h-1zM172 51h1v1h-1zM246 51h1v1h-1zM320 51h1v1h-1zM394 51h1v1h-1zM467 51h1v1h-1zM541 51h1v1h-1zM615 51h1v1h-1zM634 51h1v1h-1zM50 52h1v1h-1zM634 52h1v1h-1zM50 53h1v1h-1zM634 53h1v1h-1zM50 54h1v1h-1zM634 54h1v1h-1zM50 55h1v1h-1zM172 55h1v1h-1zM246 55h1v1h-1zM320 55h1v1h-1zM394 55h1v1h-1zM467 55h1v1h-1zM541 55h1v1h-1zM615 55h1v1h-1zM634 55h1v1h-1zM50 56h1v1h-1zM634 56h1v1h-1zM50 57h1v1h-1zM634 57h1v1h-1zM50 58h1v1h-1zM634 58h1v1h-1zM50 59h1v1h-1zM98 59h1v1h-1zM172 59h1v1h-1zM246 59h1v1h-1zM320 59h1v1h-1zM394 59h1v1h-1zM467 59h1v1h-1zM541 59h1v1h-1zM615 59h1v1h-1zM634 59h1v1h-1zM50 60h1v1h-1zM634 60h1v1h-1zM50 61h1v1h-1zM634 61h1v1h-1zM50 62h1v1h-1zM634 62h1v1h-1zM50 63h1v1h-1zM98 63h1v1h-1zM172 63h1v1h-1zM246 63h1v1h-1zM320 63h1v1h-1zM394 63h1v1h-1zM467 63h1v1h-1zM541 63h1v1h-1zM615 63h1v1h-1zM634 63h1v1h-1zM50 64h1v1h-1zM634 64h1v1h-1zM50 65h1v1h-1zM634 65h1v1h-1zM50 66h1v1h-1zM634 66h1v1h-1zM50 67h1v1h-1zM98 67h1v1h-1zM172 67h1v1h-1zM246 67h1v1h-1zM320 67h1v1h-1zM394 67h1v1h-1zM467 67h1v1h-1zM541 67h1v1h-1zM615 67h1v1h-1zM634 67h1v1h-1zM50 68h1v1h-1zM634 68h1v1h-1zM50 69h1v1h-1zM634 69h1v1h-1zM50 70h1v1h-1zM634 70h1v1h-1zM50 71h1v1h-1zM98 71h1v1h-1zM172 71h1v1h-1zM246 71h1v1h-1zM320 71h1v1h-1zM394 71h1v1h-1zM467 71h1v1h-1zM541 71h1v1h-1zM615 71h1v1h-1zM634 71h1v1h-1zM50 72h1v1h-1zM634 72h1v1h-1zM28 73h6v1h-6zM39 73h3v1h-3zM50 73h1v1h-1zM634 73h1v1h-1zM28 74h2v1h-2zM38 74h4v1h-4zM50 74h1v1h-1zM634 74h1v1h-1zM28 75h5v1h-5zM37 75h2v1h-2zM40 75h2v1h-2zM50 75h1v1h-1zM98 75h1v1h-1zM172 75h1v1h-1zM246 75h1v1h-1zM320 75h1v1h-1zM394 75h1v1h-1zM467 75h1v1h-1zM541 75h1v1h-1zM615 75h1v1h-1zM634 75h1v1h-1zM32 76h2v1h-2zM36 76h2v1h-2zM40 76h2v1h-2zM50 76h1v1h-1zM634 76h1v1h-1zM32 77h2v1h-2zM36 77h7v1h-7zM50 77h2v1h-2zM55 77h1v1h-1zM59 77h1v1h-1zM63 77h1v1h-1zM67 77h1v1h-1zM71 77h1v1h-1zM75 77h1v1h-1zM79 77h1v1h-1zM83 77h1v1h-1zM87 77h1v1h-1zM91 77h1v1h-1zM95 77h1v1h-1zM99 77h1v1h-1zM103 77h1v1h-1zM107 77h1v1h-1zM111 77h1v1h-1zM115 77h1v1h-1zM119 77h1v1h-1zM123 77h1v1h-1zM127 77h1v1h-1zM131 77h1v1h-1zM135 77h1v1h-1zM139 77h1v1h-1zM143 77h1v1h-1zM147 77h1v1h-1zM151 77h1v1h-1zM155 77h1v1h-1zM159 77h1v1h-1zM163 77h1v1h-1zM167 77h1v1h-1zM171 77h1v1h-1zM175 77h1v1h-1zM179 77h1v1h-1zM183 77h1v1h-1zM187 77h1v1h-1zM191 77h1v1h-1zM195 77h1v1h-1zM199 77h1v1h-1zM203 77h1v1h-1zM207 77h1v1h-1zM211 77h1v1h-1zM215 77h1v1h-1zM219 77h1v1h-1zM223 77h1v1h-1zM227 77h1v1h-1zM231 77h1v1h-1zM235 77h1v1h-1zM239 77h1v1h-1zM243 77h1v1h-1zM247 77h1v1h-1zM251 77h1v1h-1zM255 77h1v1h-1zM263 77h1v1h-1zM267 77h1v1h-1zM271 77h1v1h-1zM275 77h1v1h-1zM279 77h1v1h-1zM283 77h1v1h-1zM287 77h1v1h-1zM291 77h1v1h-1zM295 77h1v1h-1zM299 77h1v1h-1zM303 77h1v1h-1zM307 77h1v1h-1zM311 77h1v1h-1zM315 77h1v1h-1zM319 77h1v1h-1zM323 77h1v1h-1zM327 77h1v1h-1zM335 77h1v1h-1zM339 77h1v1h-1zM343 77h1v1h-1zM347 77h1v1h-1zM351 77h1v1h-1zM355 77h1v1h-1zM359 77h1v1h-1zM363 77h1v1h-1zM367 77h1v1h-1zM371 77h1v1h-1zM375 77h1v1h-1zM379 77h1v1h-1zM383 77h1v1h-1zM387 77h1v1h-1zM391 77h1v1h-1zM395 77h1v1h-1zM399 77h1v1h-1zM403 77h1v1h-1zM407 77h1v1h-1zM411 77h1v1h-1zM415 77h1v1h-1zM419 77h1v1h-1zM423 77h1v1h-1zM427 77h1v1h-1zM431 77h1v1h-1zM435 77h1v1h-1zM439 77h1v1h-1zM443 77h1v1h-1zM447 77h1v1h-1zM451 77h1v1h-1zM455 77h1v1h-1zM459 77h1v1h-1zM463 77h1v1h-1zM467 77h1v1h-1zM471 77h1v1h-1zM475 77h1v1h-1zM479 77h1v1h-1zM483 77h1v1h-1zM487 77h1v1h-1zM491 77h1v1h-1zM495 77h1v1h-1zM499 77h1v1h-1zM503 77h1v1h-1zM507 77h1v1h-1zM511 77h1v1h-1zM515 77h1v1h-1zM519 77h1v1h-1zM523 77h1v1h-1zM527 77h1v1h-1zM531 77h1v1h-1zM535 77h1v1h-1zM539 77h1v1h-1zM543 77h1v1h-1zM547 77h1v1h-1zM551 77h1v1h-1zM555 77h1v1h-1zM559 77h1v1h-1zM563 77h1v1h-1zM567 77h1v1h-1zM571 77h1v1h-1zM575 77h1v1h-1zM579 77h1v1h-1zM583 77h1v1h-1zM587 77h1v1h-1zM591 77h1v1h-1zM595 77h1v1h-1zM599 77h1v1h-1zM603 77h1v1h-1zM607 77h1v1h-1zM611 77h1v1h-1zM615 77h1v1h-1zM619 77h1v1h-1zM623 77h1v1h-1zM627 77h1v1h-1zM631 77h1v1h-1zM634 77h1v1h-1zM28 78h2v1h-2zM32 78h2v1h-2zM40 78h2v1h-2zM50 78h1v1h-1zM634 78h1v1h-1zM29 79h4v1h-4zM39 79h4v1h-4zM50 79h1v1h-1zM98 79h1v1h-1zM172 79h1v1h-1zM246 79h1v1h-1zM320 79h1v1h-1zM394 79h1v1h-1zM467 79h1v1h-1zM541 79h1v1h-1zM615 79h1v1h-1zM634 79h1v1h-1zM50 80h1v1h-1zM634 80h1v1h-1zM50 81h1v1h-1zM634 81h1v1h-1zM50 82h1v1h-1zM634 82h1v1h-1zM50 83h1v1h-1zM98 83h1v1h-1zM172 83h1v1h-1zM246 83h1v1h-1zM320 83h1v1h-1zM394 83h1v1h-1zM467 83h1v1h-1zM541 83h1v1h-1zM615 83h1v1h-1zM634 83h1v1h-1zM50 84h1v1h-1zM634 84h1v1h-1zM50 85h1v1h-1zM634 85h1v1h-1zM50 86h1v1h-1zM634 86h1v1h-1zM50 87h1v1h-1zM98 87h1v1h-1zM172 87h1v1h-1zM246 87h1v1h-1zM320 87h1v1h-1zM394 87h1v1h-1zM467 87h1v1h-1zM541 87h1v1h-1zM615 87h1v1h-1zM634 87h1v1h-1zM50 88h1v1h-1zM634 88h1v1h-1zM50 89h1v1h-1zM634 89h1v1h-1zM50 90h1v1h-1zM634 90h1v1h-1zM50 91h1v1h-1zM98 91h1v1h-1zM172 91h1v1h-1zM246 91h1v1h-1zM320 91h1v1h-1zM394 91h1v1h-1zM467 91h1v1h-1zM541 91h1v1h-1zM615 91h1v1h-1zM634 91h1v1h-1zM50 92h1v1h-1zM634 92h1v1h-1zM50 93h1v1h-1zM634 93h1v1h-1zM50 94h1v1h-1zM634 94h1v1h-1zM50 95h1v1h-1zM98 95h1v1h-1zM172 95h1v1h-1zM246 95h1v1h-1zM320 95h1v1h-1zM394 95h1v1h-1zM541 95h1v1h-1zM615 95h1v1h-1zM634 95h1v1h-1zM50 96h1v1h-1zM634 96h1v1h-1zM50 97h1v1h-1zM634 97h1v1h-1zM50 98h1v1h-1zM634 98h1v1h-1zM50 99h1v1h-1zM98 99h1v1h-1zM172 99h1v1h-1zM246 99h1v1h-1zM320 99h1v1h-1zM394 99h1v1h-1zM467 99h1v1h-1zM541 99h1v1h-1zM615 99h1v1h-1zM634 99h1v1h-1zM50 100h1v1h-1zM634 100h1v1h-1zM50 101h1v1h-1zM634 101h1v1h-1zM50 102h1v1h-1zM634 102h1v1h-1zM50 103h1v1h-1zM98 103h1v1h-1zM172 103h1v1h-1zM246 103h1v1h-1zM320 103h1v1h-1zM394 103h1v1h-1zM467 103h1v1h-1zM541 103h1v1h-1zM615 103h1v1h-1zM634 103h1v1h-1zM50 104h1v1h-1zM634 104h1v1h-1zM50 105h1v1h-1zM634 105h1v1h-1zM50 106h1v1h-1zM634 106h1v1h-1zM50 107h1v1h-1zM98 107h1v1h-1zM172 107h1v1h-1zM246 107h1v1h-1zM320 107h1v1h-1zM394 107h1v1h-1zM467 107h1v1h-1zM541 107h1v1h-1zM615 107h1v1h-1zM634 107h1v1h-1zM50 108h1v1h-1zM634 108h1v1h-1zM50 109h1v1h-1zM634 109h1v1h-1zM50 110h1v1h-1zM634 110h1v1h-1zM50 111h1v1h-1zM98 111h1v1h-1zM172 111h1v1h-1zM246 111h1v1h-1zM320 111h1v1h-1zM394 111h1v1h-1zM467 111h1v1h-1zM541 111h1v1h-1zM615 111h1v1h-1zM634 111h1v1h-1zM50 112h1v1h-1zM634 112h1v1h-1zM50 113h1v1h-1zM634 113h1v1h-1zM50 114h1v1h-1zM634 114h1v1h-1zM50 115h1v1h-1zM98 115h1v1h-1zM172 115h1v1h-1zM246 115h1v1h-1zM320 115h1v1h-1zM394 115h1v1h-1zM467 115h1v1h-1zM541 115h1v1h-1zM615 115h1v1h-1zM634 115h1v1h-1zM50 116h1v1h-1zM634 116h1v1h-1zM50 117h1v1h-1zM634 117h1v1h-1zM50 118h1v1h-1zM634 118h1v1h-1zM50 119h1v1h-1zM98 119h1v1h-1zM172 119h1v1h-1zM246 119h1v1h-1zM320 119h1v1h-1zM394 119h1v1h-1zM467 119h1v1h-1zM541 119h1v1h-1zM615 119h1v1h-1zM634 119h1v1h-1zM28 120h6v1h-6zM37 120h4v1h-4zM50 120h1v1h-1zM634 120h1v1h-1zM28 121h2v1h-2zM36 121h2v1h-2zM40 121h2v1h-2zM50 121h1v1h-1zM634 121h1v1h-1zM28 122h5v1h-5zM40 122h2v1h-2zM50 122h1v1h-1zM634 122h1v1h-1zM32 123h2v1h-2zM38 123h3v1h-3zM50 123h1v1h-1zM98 123h1v1h-1zM172 123h1v1h-1zM246 123h1v1h-1zM320 123h1v1h-1zM394 123h1v1h-1zM467 123h1v1h-1zM541 123h1v1h-1zM615 123h1v1h-1zM634 123h1v1h-1zM32 124h2v1h-2zM37 124h2v1h-2zM50 124h2v1h-2zM55 124h1v1h-1zM59 124h1v1h-1zM63 124h1v1h-1zM67 124h1v1h-1zM71 124h1v1h-1zM75 124h1v1h-1zM79 124h1v1h-1zM83 124h1v1h-1zM87 124h1v1h-1zM91 124h1v1h-1zM95 124h1v1h-1zM99 124h1v1h-1zM103 124h1v1h-1zM107 124h1v1h-1zM111 124h1v1h-1zM115 124h1v1h-1zM119 124h1v1h-1zM123 124h1v1h-1zM127 124h1v1h-1zM131 124h1v1h-1zM135 124h1v1h-1zM139 124h1v1h-1zM143 124h1v1h-1zM147 124h1v1h-1zM151 124h1v1h-1zM155 124h1v1h-1zM159 124h1v1h-1zM163 124h1v1h-1zM167 124h1v1h-1zM171 124h1v1h-1zM175 124h1v1h-1zM179 124h1v1h-1zM183 124h1v1h-1zM187 124h1v1h-1zM191 124h1v1h-1zM195 124h1v1h-1zM199 124h1v1h-1zM203 124h1v1h-1zM207 124h1v1h-1zM211 124h1v1h-1zM215 124h1v1h-1zM219 124h1v1h-1zM223 124h1v1h-1zM227 124h1v1h-1zM231 124h1v1h-1zM235 124h1v1h-1zM239 124h1v1h-1zM243 124h1v1h-1zM247 124h1v1h-1zM251 124h1v1h-1zM255 124h1v1h-1zM263 124h1v1h-1zM271 124h1v1h-1zM275 124h1v1h-1zM279 124h1v1h-1zM283 124h1v1h-1zM287 124h1v1h-1zM291 124h1v1h-1zM295 124h1v1h-1zM299 124h1v1h-1zM303 124h1v1h-1zM307 124h1v1h-1zM311 124h1v1h-1zM315 124h1v1h-1zM319 124h1v1h-1zM323 124h1v1h-1zM327 124h1v1h-1zM331 124h1v1h-1zM339 124h1v1h-1zM343 124h1v1h-1zM347 124h1v1h-1zM351 124h1v1h-1zM355 124h1v1h-1zM359 124h1v1h-1zM363 124h1v1h-1zM367 124h1v1h-1zM371 124h1v1h-1zM375 124h1v1h-1zM379 124h1v1h-1zM383 124h1v1h-1zM387 124h1v1h-1zM391 124h1v1h-1zM395 124h1v1h-1zM399 124h1v1h-1zM403 124h1v1h-1zM407 124h1v1h-1zM415 124h1v1h-1zM419 124h1v1h-1zM423 124h1v1h-1zM427 124h1v1h-1zM431 124h1v1h-1zM435 124h1v1h-1zM439 124h1v1h-1zM443 124h1v1h-1zM447 124h1v1h-1zM451 124h1v1h-1zM455 124h1v1h-1zM459 124h1v1h-1zM463 124h1v1h-1zM467 124h1v1h-1zM475 124h1v1h-1zM479 124h1v1h-1zM483 124h1v1h-1zM487 124h1v1h-1zM491 124h1v1h-1zM495 124h1v1h-1zM499 124h1v1h-1zM503 124h1v1h-1zM507 124h1v1h-1zM511 124h1v1h-1zM515 124h1v1h-1zM523 124h1v1h-1zM527 124h1v1h-1zM531 124h1v1h-1zM535 124h1v1h-1zM539 124h1v1h-1zM543 124h1v1h-1zM547 124h1v1h-1zM551 124h1v1h-1zM555 124h1v1h-1zM559 124h1v1h-1zM563 124h1v1h-1zM567 124h1v1h-1zM571 124h1v1h-1zM575 124h1v1h-1zM579 124h1v1h-1zM583 124h1v1h-1zM587 124h1v1h-1zM591 124h1v1h-1zM595 124h1v1h-1zM599 124h1v1h-1zM603 124h1v1h-1zM607 124h1v1h-1zM611 124h1v1h-1zM615 124h1v1h-1zM619 124h1v1h-1zM623 124h1v1h-1zM627 124h1v1h-1zM631 124h1v1h-1zM634 124h1v1h-1zM28 125h2v1h-2zM32 125h2v1h-2zM36 125h2v1h-2zM40 125h2v1h-2zM50 125h1v1h-1zM634 125h1v1h-1zM29 126h4v1h-4zM36 126h6v1h-6zM50 126h1v1h-1zM634 126h1v1h-1zM50 127h1v1h-1zM98 127h1v1h-1zM172 127h1v1h-1zM246 127h1v1h-1zM320 127h1v1h-1zM394 127h1v1h-1zM467 127h1v1h-1zM541 127h1v1h-1zM615 127h1v1h-1zM634 127h1v1h-1zM50 128h1v1h-1zM634 128h1v1h-1zM50 129h1v1h-1zM634 129h1v1h-1zM50 130h1v1h-1zM634 130h1v1h-1zM50 131h1v1h-1zM98 131h1v1h-1zM172 131h1v1h-1zM246 131h1v1h-1zM320 131h1v1h-1zM394 131h1v1h-1zM467 131h1v1h-1zM541 131h1v1h-1zM615 131h1v1h-1zM634 131h1v1h-1zM50 132h1v1h-1zM634 132h1v1h-1zM50 133h1v1h-1zM634 133h1v1h-1zM50 134h1v1h-1zM634 134h1v1h-1zM50 135h1v1h-1zM98 135h1v1h-1zM172 135h1v1h-1zM246 135h1v1h-1zM320 135h1v1h-1zM394 135h1v1h-1zM467 135h1v1h-1zM541 135h1v1h-1zM615 135h1v1h-1zM634 135h1v1h-1zM50 136h1v1h-1zM634 136h1v1h-1zM50 137h1v1h-1zM634 137h1v1h-1zM50 138h1v1h-1zM634 138h1v1h-1zM50 139h1v1h-1zM98 139h1v1h-1zM172 139h1v1h-1zM246 139h1v1h-1zM320 139h1v1h-1zM394 139h1v1h-1zM467 139h1v1h-1zM541 139h1v1h-1zM615 139h1v1h-1zM634 139h1v1h-1zM50 140h1v1h-1zM634 140h1v1h-1zM50 141h1v1h-1zM634 141h1v1h-1zM50 142h1v1h-1zM634 142h1v1h-1zM50 143h1v1h-1zM98 143h1v1h-1zM172 143h1v1h-1zM246 143h1v1h-1zM320 143h1v1h-1zM394 143h1v1h-1zM467 143h1v1h-1zM541 143h1v1h-1zM615 143h1v1h-1zM634 143h1v1h-1zM50 144h1v1h-1zM634 144h1v1h-1zM50 145h1v1h-1zM634 145h1v1h-1zM50 146h1v1h-1zM634 146h1v1h-1zM50 147h1v1h-1zM98 147h1v1h-1zM172 147h1v1h-1zM246 147h1v1h-1zM320 147h1v1h-1zM394 147h1v1h-1zM467 147h1v1h-1zM541 147h1v1h-1zM615 147h1v1h-1zM634 147h1v1h-1zM50 148h1v1h-1zM634 148h1v1h-1zM50 149h1v1h-1zM634 149h1v1h-1zM50 150h1v1h-1zM634 150h1v1h-1zM50 151h1v1h-1zM98 151h1v1h-1zM172 151h1v1h-1zM246 151h1v1h-1zM320 151h1v1h-1zM394 151h1v1h-1zM467 151h1v1h-1zM541 151h1v1h-1zM615 151h1v1h-1zM634 151h1v1h-1zM50 152h1v1h-1zM634 152h1v1h-1zM50 153h1v1h-1zM634 153h1v1h-1zM50 154h1v1h-1zM634 154h1v1h-1zM50 155h1v1h-1zM98 155h1v1h-1zM172 155h1v1h-1zM246 155h1v1h-1zM320 155h1v1h-1zM394 155h1v1h-1zM467 155h1v1h-1zM541 155h1v1h-1zM615 155h1v1h-1zM634 155h1v1h-1zM50 156h1v1h-1zM634 156h1v1h-1zM50 157h1v1h-1zM634 157h1v1h-1zM50 158h1v1h-1zM634 158h1v1h-1zM50 159h1v1h-1zM98 159h1v1h-1zM172 159h1v1h-1zM246 159h1v1h-1zM320 159h1v1h-1zM394 159h1v1h-1zM467 159h1v1h-1zM541 159h1v1h-1zM615 159h1v1h-1zM634 159h1v1h-1zM50 160h1v1h-1zM634 160h1v1h-1zM50 161h1v1h-1zM634 161h1v1h-1zM50 162h1v1h-1zM634 162h1v1h-1zM50 163h1v1h-1zM98 163h1v1h-1zM172 163h1v1h-1zM246 163h1v1h-1zM320 163h1v1h-1zM394 163h1v1h-1zM467 163h1v1h-1zM541 163h1v1h-1zM615 163h1v1h-1zM634 163h1v1h-1zM50 164h1v1h-1zM634 164h1v1h-1zM50 165h1v1h-1zM634 165h1v1h-1zM28 166h6v1h-6zM37 166h5v1h-5zM50 166h1v1h-1zM634 166h1v1h-1zM28 167h2v1h-2zM36 167h2v1h-2zM41 167h2v1h-2zM50 167h1v1h-1zM98 167h1v1h-1zM172 167h1v1h-1zM246 167h1v1h-1zM320 167h1v1h-1zM394 167h1v1h-1zM467 167h1v1h-1zM541 167h1v1h-1zM615 167h1v1h-1zM634 167h1v1h-1zM28 168h5v1h-5zM36 168h2v1h-2zM41 168h2v1h-2zM50 168h1v1h-1zM634 168h1v1h-1zM32 169h2v1h-2zM36 169h2v1h-2zM41 169h2v1h-2zM50 169h1v1h-1zM634 169h1v1h-1zM32 170h2v1h-2zM36 170h2v1h-2zM41 170h2v1h-2zM50 170h2v1h-2zM55 170h1v1h-1zM59 170h1v1h-1zM63 170h1v1h-1zM67 170h1v1h-1zM71 170h1v1h-1zM75 170h1v1h-1zM79 170h1v1h-1zM83 170h1v1h-1zM87 170h1v1h-1zM91 170h1v1h-1zM95 170h1v1h-1zM99 170h1v1h-1zM103 170h1v1h-1zM107 170h1v1h-1zM111 170h1v1h-1zM115 170h1v1h-1zM119 170h1v1h-1zM123 170h1v1h-1zM127 170h1v1h-1zM131 170h1v1h-1zM135 170h1v1h-1zM139 170h1v1h-1zM143 170h1v1h-1zM147 170h1v1h-1zM151 170h1v1h-1zM155 170h1v1h-1zM159 170h1v1h-1zM163 170h1v1h-1zM167 170h1v1h-1zM171 170h1v1h-1zM175 170h1v1h-1zM183 170h1v1h-1zM187 170h1v1h-1zM191 170h1v1h-1zM195 170h1v1h-1zM199 170h1v1h-1zM203 170h1v1h-1zM207 170h1v1h-1zM211 170h1v1h-1zM215 170h1v1h-1zM219 170h1v1h-1zM223 170h1v1h-1zM227 170h1v1h-1zM231 170h1v1h-1zM235 170h1v1h-1zM239 170h1v1h-1zM243 170h1v1h-1zM247 170h1v1h-1zM251 170h1v1h-1zM255 170h1v1h-1zM259 170h1v1h-1zM263 170h1v1h-1zM267 170h1v1h-1zM271 170h1v1h-1zM275 170h1v1h-1zM279 170h1v1h-1zM283 170h1v1h-1zM287 170h1v1h-1zM291 170h1v1h-1zM295 170h1v1h-1zM299 170h1v1h-1zM303 170h1v1h-1zM307 170h1v1h-1zM311 170h1v1h-1zM315 170h1v1h-1zM319 170h1v1h-1zM323 170h1v1h-1zM327 170h1v1h-1zM331 170h1v1h-1zM335 170h1v1h-1zM339 170h1v1h-1zM343 170h1v1h-1zM347 170h1v1h-1zM351 170h1v1h-1zM355 170h1v1h-1zM359 170h1v1h-1zM363 170h1v1h-1zM367 170h1v1h-1zM371 170h1v1h-1zM375 170h1v1h-1zM379 170h1v1h-1zM383 170h1v1h-1zM387 170h1v1h-1zM391 170h1v1h-1zM395 170h1v1h-1zM399 170h1v1h-1zM403 170h1v1h-1zM407 170h1v1h-1zM411 170h1v1h-1zM415 170h1v1h-1zM423 170h1v1h-1zM427 170h1v1h-1zM431 170h1v1h-1zM435 170h1v1h-1zM439 170h1v1h-1zM443 170h1v1h-1zM447 170h1v1h-1zM451 170h1v1h-1zM455 170h1v1h-1zM459 170h1v1h-1zM463 170h1v1h-1zM467 170h1v1h-1zM471 170h1v1h-1zM475 170h1v1h-1zM483 170h1v1h-1zM487 170h1v1h-1zM491 170h1v1h-1zM495 170h1v1h-1zM499 170h1v1h-1zM503 170h1v1h-1zM507 170h1v1h-1zM511 170h1v1h-1zM515 170h1v1h-1zM519 170h1v1h-1zM523 170h1v1h-1zM527 170h1v1h-1zM531 170h1v1h-1zM535 170h1v1h-1zM539 170h1v1h-1zM543 170h1v1h-1zM547 170h1v1h-1zM551 170h1v1h-1zM555 170h1v1h-1zM559 170h1v1h-1zM563 170h1v1h-1zM571 170h1v1h-1zM575 170h1v1h-1zM579 170h1v1h-1zM583 170h1v1h-1zM587 170h1v1h-1zM591 170h1v1h-1zM595 170h1v1h-1zM599 170h1v1h-1zM603 170h1v1h-1zM607 170h1v1h-1zM611 170h1v1h-1zM615 170h1v1h-1zM619 170h1v1h-1zM623 170h1v1h-1zM627 170h1v1h-1zM631 170h1v1h-1zM634 170h1v1h-1zM28 171h2v1h-2zM32 171h2v1h-2zM36 171h2v1h-2zM41 171h2v1h-2zM50 171h1v1h-1zM98 171h1v1h-1zM172 171h1v1h-1zM246 171h1v1h-1zM320 171h1v1h-1zM394 171h1v1h-1zM467 171h1v1h-1zM541 171h1v1h-1zM615 171h1v1h-1zM634 171h1v1h-1zM29 172h4v1h-4zM37 172h5v1h-5zM50 172h1v1h-1zM634 172h1v1h-1zM50 173h1v1h-1zM634 173h1v1h-1zM50 174h1v1h-1zM634 174h1v1h-1zM50 175h1v1h-1zM98 175h1v1h-1zM172 175h1v1h-1zM246 175h1v1h-1zM320 175h1v1h-1zM394 175h1v1h-1zM467 175h1v1h-1zM541 175h1v1h-1zM615 175h1v1h-1zM634 175h1v1h-1zM50 176h1v1h-1zM634 176h1v1h-1zM50 177h1v1h-1zM634 177h1v1h-1zM50 178h1v1h-1zM634 178h1v1h-1zM50 179h1v1h-1zM98 179h1v1h-1zM172 179h1v1h-1zM246 179h1v1h-1zM320 179h1v1h-1zM394 179h1v1h-1zM467 179h1v1h-1zM541 179h1v1h-1zM615 179h1v1h-1zM634 179h1v1h-1zM50 180h1v1h-1zM634 180h1v1h-1zM50 181h1v1h-1zM634 181h1v1h-1zM50 182h1v1h-1zM634 182h1v1h-1zM50 183h1v1h-1zM98 183h1v1h-1zM172 183h1v1h-1zM246 183h1v1h-1zM320 183h1v1h-1zM394 183h1v1h-1zM467 183h1v1h-1zM541 183h1v1h-1zM615 183h1v1h-1zM634 183h1v1h-1zM50 184h1v1h-1zM634 184h1v1h-1zM50 185h1v1h-1zM634 185h1v1h-1zM50 186h1v1h-1zM634 186h1v1h-1zM50 187h1v1h-1zM98 187h1v1h-1zM172 187h1v1h-1zM246 187h1v1h-1zM320 187h1v1h-1zM394 187h1v1h-1zM467 187h1v1h-1zM541 187h1v1h-1zM615 187h1v1h-1zM634 187h1v1h-1zM50 188h1v1h-1zM634 188h1v1h-1zM50 189h1v1h-1zM634 189h1v1h-1zM50 190h1v1h-1zM634 190h1v1h-1zM50 191h1v1h-1zM98 191h1v1h-1zM172 191h1v1h-1zM246 191h1v1h-1zM320 191h1v1h-1zM394 191h1v1h-1zM467 191h1v1h-1zM541 191h1v1h-1zM615 191h1v1h-1zM634 191h1v1h-1zM50 192h1v1h-1zM634 192h1v1h-1zM50 193h1v1h-1zM634 193h1v1h-1zM50 194h1v1h-1zM634 194h1v1h-1zM50 195h1v1h-1zM98 195h1v1h-1zM172 195h1v1h-1zM246 195h1v1h-1zM320 195h1v1h-1zM394 195h1v1h-1zM467 195h1v1h-1zM541 195h1v1h-1zM615 195h1v1h-1zM634 195h1v1h-1zM50 196h1v1h-1zM634 196h1v1h-1zM50 197h1v1h-1zM634 197h1v1h-1zM50 198h1v1h-1zM634 198h1v1h-1zM50 199h1v1h-1zM98 199h1v1h-1zM172 199h1v1h-1zM246 199h1v1h-1zM320 199h1v1h-1zM394 199h1v1h-1zM467 199h1v1h-1zM615 199h1v1h-1zM634 199h1v1h-1zM50 200h1v1h-1zM634 200h1v1h-1zM50 201h1v1h-1zM634 201h1v1h-1zM50 202h1v1h-1zM634 202h1v1h-1zM50 203h1v1h-1zM98 203h1v1h-1zM172 203h1v1h-1zM246 203h1v1h-1zM320 203h1v1h-1zM394 203h1v1h-1zM467 203h1v1h-1zM615 203h1v1h-1zM634 203h1v1h-1zM50 204h1v1h-1zM634 204h1v1h-1zM50 205h1v1h-1zM634 205h1v1h-1zM50 206h1v1h-1zM634 206h1v1h-1zM50 207h1v1h-1zM98 207h1v1h-1zM172 207h1v1h-1zM246 207h1v1h-1zM320 207h1v1h-1zM394 207h1v1h-1zM467 207h1v1h-1zM541 207h1v1h-1zM615 207h1v1h-1zM634 207h1v1h-1zM50 208h1v1h-1zM634 208h1v1h-1zM50 209h1v1h-1zM634 209h1v1h-1zM50 210h1v1h-1zM634 210h1v1h-1zM50 211h1v1h-1zM98 211h1v1h-1zM172 211h1v1h-1zM246 211h1v1h-1zM320 211h1v1h-1zM394 211h1v1h-1zM467 211h1v1h-1zM541 211h1v1h-1zM615 211h1v1h-1zM634 211h1v1h-1zM31 212h3v1h-3zM37 212h4v1h-4zM50 212h1v1h-1zM634 212h1v1h-1zM30 213h4v1h-4zM36 213h2v1h-2zM40 213h2v1h-2zM50 213h1v1h-1zM634 213h1v1h-1zM29 214h2v1h-2zM32 214h2v1h-2zM36 214h2v1h-2zM40 214h2v1h-2zM50 214h1v1h-1zM634 214h1v1h-1zM28 215h2v1h-2zM32 215h2v1h-2zM37 215h4v1h-4zM50 215h1v1h-1zM98 215h1v1h-1zM172 215h1v1h-1zM246 215h1v1h-1zM320 215h1v1h-1zM394 215h1v1h-1zM467 215h1v1h-1zM541 215h1v1h-1zM615 215h1v1h-1zM634 215h1v1h-1zM28 216h7v1h-7zM36 216h2v1h-2zM40 216h2v1h-2zM50 216h2v1h-2zM55 216h1v1h-1zM59 216h1v1h-1zM63 216h1v1h-1zM67 216h1v1h-1zM71 216h1v1h-1zM75 216h1v1h-1zM79 216h1v1h-1zM83 216h1v1h-1zM87 216h1v1h-1zM91 216h1v1h-1zM95 216h1v1h-1zM99 216h1v1h-1zM103 216h1v1h-1zM107 216h1v1h-1zM111 216h1v1h-1zM115 216h1v1h-1zM119 216h1v1h-1zM123 216h1v1h-1zM127 216h1v1h-1zM131 216h1v1h-1zM135 216h1v1h-1zM139 216h1v1h-1zM143 216h1v1h-1zM147 216h1v1h-1zM151 216h1v1h-1zM155 216h1v1h-1zM159 216h1v1h-1zM163 216h1v1h-1zM167 216h1v1h-1zM171 216h1v1h-1zM175 216h1v1h-1zM179 216h1v1h-1zM183 216h1v1h-1zM187 216h1v1h-1zM191 216h1v1h-1zM195 216h1v1h-1zM199 216h1v1h-1zM203 216h1v1h-1zM207 216h1v1h-1zM211 216h1v1h-1zM215 216h1v1h-1zM219 216h1v1h-1zM223 216h1v1h-1zM227 216h1v1h-1zM231 216h1v1h-1zM235 216h1v1h-1zM239 216h1v1h-1zM243 216h1v1h-1zM247 216h1v1h-1zM255 216h1v1h-1zM259 216h1v1h-1zM263 216h1v1h-1zM267 216h1v1h-1zM271 216h1v1h-1zM275 216h1v1h-1zM279 216h1v1h-1zM287 216h1v1h-1zM291 216h1v1h-1zM295 216h1v1h-1zM299 216h1v1h-1zM303 216h1v1h-1zM307 216h1v1h-1zM311 216h1v1h-1zM315 216h1v1h-1zM319 216h1v1h-1zM323 216h1v1h-1zM331 216h1v1h-1zM335 216h1v1h-1zM339 216h1v1h-1zM343 216h1v1h-1zM347 216h1v1h-1zM351 216h1v1h-1zM355 216h1v1h-1zM359 216h1v1h-1zM363 216h1v1h-1zM367 216h1v1h-1zM371 216h1v1h-1zM375 216h1v1h-1zM379 216h1v1h-1zM383 216h1v1h-1zM387 216h1v1h-1zM391 216h1v1h-1zM395 216h1v1h-1zM399 216h1v1h-1zM403 216h1v1h-1zM407 216h1v1h-1zM411 216h1v1h-1zM415 216h1v1h-1zM419 216h1v1h-1zM423 216h1v1h-1zM431 216h1v1h-1zM435 216h1v1h-1zM439 216h1v1h-1zM443 216h1v1h-1zM447 216h1v1h-1zM451 216h1v1h-1zM455 216h1v1h-1zM459 216h1v1h-1zM463 216h1v1h-1zM467 216h1v1h-1zM471 216h1v1h-1zM475 216h1v1h-1zM479 216h1v1h-1zM483 216h1v1h-1zM491 216h1v1h-1zM495 216h1v1h-1zM499 216h1v1h-1zM503 216h1v1h-1zM507 216h1v1h-1zM511 216h1v1h-1zM515 216h1v1h-1zM519 216h1v1h-1zM523 216h1v1h-1zM527 216h1v1h-1zM531 216h1v1h-1zM535 216h1v1h-1zM539 216h1v1h-1zM547 216h1v1h-1zM551 216h1v1h-1zM555 216h1v1h-1zM559 216h1v1h-1zM563 216h1v1h-1zM571 216h1v1h-1zM575 216h1v1h-1zM579 216h1v1h-1zM583 216h1v1h-1zM587 216h1v1h-1zM591 216h1v1h-1zM595 216h1v1h-1zM599 216h1v1h-1zM603 216h1v1h-1zM607 216h1v1h-1zM611 216h1v1h-1zM615 216h1v1h-1zM619 216h1v1h-1zM623 216h1v1h-1zM627 216h1v1h-1zM631 216h1v1h-1zM634 216h1v1h-1zM32 217h2v1h-2zM36 217h2v1h-2zM40 217h2v1h-2zM50 217h1v1h-1zM634 217h1v1h-1zM31 218h4v1h-4zM37 218h4v1h-4zM50 218h1v1h-1zM634 218h1v1h-1zM50 219h1v1h-1zM98 219h1v1h-1zM246 219h1v1h-1zM320 219h1v1h-1zM394 219h1v1h-1zM467 219h1v1h-1zM541 219h1v1h-1zM615 219h1v1h-1zM634 219h1v1h-1zM50 220h1v1h-1zM634 220h1v1h-1zM50 221h1v1h-1zM634 221h1v1h-1zM50 222h1v1h-1zM634 222h1v1h-1zM50 223h1v1h-1zM98 223h1v1h-1zM246 223h1v1h-1zM320 223h1v1h-1zM394 223h1v1h-1zM467 223h1v1h-1zM541 223h1v1h-1zM615 223h1v1h-1zM634 223h1v1h-1zM50 224h1v1h-1zM634 224h1v1h-1zM50 225h1v1h-1zM634 225h1v1h-1zM50 226h1v1h-1zM634 226h1v1h-1zM50 227h1v1h-1zM98 227h1v1h-1zM172 227h1v1h-1zM246 227h1v1h-1zM320 227h1v1h-1zM394 227h1v1h-1zM467 227h1v1h-1zM541 227h1v1h-1zM615 227h1v1h-1zM634 227h1v1h-1zM50 228h1v1h-1zM634 228h1v1h-1zM50 229h1v1h-1zM634 229h1v1h-1zM50 230h1v1h-1zM634 230h1v1h-1zM50 231h1v1h-1zM98 231h1v1h-1zM172 231h1v1h-1zM246 231h1v1h-1zM320 231h1v1h-1zM394 231h1v1h-1zM467 231h1v1h-1zM541 231h1v1h-1zM615 231h1v1h-1zM634 231h1v1h-1zM50 232h1v1h-1zM634 232h1v1h-1zM50 233h1v1h-1zM634 233h1v1h-1zM50 234h1v1h-1zM634 234h1v1h-1zM50 235h1v1h-1zM98 235h1v1h-1zM172 235h1v1h-1zM246 235h1v1h-1zM320 235h1v1h-1zM394 235h1v1h-1zM467 235h1v1h-1zM541 235h1v1h-1zM615 235h1v1h-1zM634 235h1v1h-1zM50 236h1v1h-1zM634 236h1v1h-1zM50 237h1v1h-1zM634 237h1v1h-1zM50 238h1v1h-1zM634 238h1v1h-1zM50 239h1v1h-1zM98 239h1v1h-1zM172 239h1v1h-1zM246 239h1v1h-1zM320 239h1v1h-1zM394 239h1v1h-1zM467 239h1v1h-1zM541 239h1v1h-1zM615 239h1v1h-1zM634 239h1v1h-1zM50 240h1v1h-1zM634 240h1v1h-1zM50 241h1v1h-1zM634 241h1v1h-1zM50 242h1v1h-1zM634 242h1v1h-1zM50 243h1v1h-1zM98 243h1v1h-1zM172 243h1v1h-1zM246 243h1v1h-1zM320 243h1v1h-1zM394 243h1v1h-1zM467 243h1v1h-1zM541 243h1v1h-1zM615 243h1v1h-1zM634 243h1v1h-1zM50 244h1v1h-1zM634 244h1v1h-1zM50 245h1v1h-1zM634 245h1v1h-1zM50 246h1v1h-1zM634 246h1v1h-1zM50 247h1v1h-1zM98 247h1v1h-1zM172 247h1v1h-1zM246 247h1v1h-1zM320 247h1v1h-1zM394 247h1v1h-1zM467 247h1v1h-1zM541 247h1v1h-1zM615 247h1v1h-1zM634 247h1v1h-1zM50 248h1v1h-1zM634 248h1v1h-1zM50 249h1v1h-1zM634 249h1v1h-1zM50 250h1v1h-1zM634 250h1v1h-1zM50 251h1v1h-1zM98 251h1v1h-1zM172 251h1v1h-1zM320 251h1v1h-1zM394 251h1v1h-1zM467 251h1v1h-1zM541 251h1v1h-1zM615 251h1v1h-1zM634 251h1v1h-1zM50 252h1v1h-1zM634 252h1v1h-1zM50 253h1v1h-1zM634 253h1v1h-1zM50 254h1v1h-1zM634 254h1v1h-1zM50 255h1v1h-1zM98 255h1v1h-1zM172 255h1v1h-1zM320 255h1v1h-1zM394 255h1v1h-1zM467 255h1v1h-1zM541 255h1v1h-1zM615 255h1v1h-1zM634 255h1v1h-1zM50 256h1v1h-1zM634 256h1v1h-1zM50 257h1v1h-1zM634 257h1v1h-1zM31 258h3v1h-3zM38 258h3v1h-3zM50 258h1v1h-1zM634 258h1v1h-1zM30 259h4v1h-4zM37 259h2v1h-2zM50 259h1v1h-1zM98 259h1v1h-1zM172 259h1v1h-1zM246 259h1v1h-1zM320 259h1v1h-1zM467 259h1v1h-1zM541 259h1v1h-1zM615 259h1v1h-1zM634 259h1v1h-1zM29 260h2v1h-2zM32 260h2v1h-2zM36 260h2v1h-2zM50 260h1v1h-1zM634 260h1v1h-1zM28 261h2v1h-2zM32 261h2v1h-2zM36 261h5v1h-5zM50 261h1v1h-1zM634 261h1v1h-1zM28 262h7v1h-7zM36 262h2v1h-2zM40 262h2v1h-2zM50 262h2v1h-2zM55 262h1v1h-1zM59 262h1v1h-1zM63 262h1v1h-1zM67 262h1v1h-1zM71 262h1v1h-1zM75 262h1v1h-1zM79 262h1v1h-1zM83 262h1v1h-1zM87 262h1v1h-1zM91 262h1v1h-1zM95 262h1v1h-1zM99 262h1v1h-1zM103 262h1v1h-1zM107 262h1v1h-1zM111 262h1v1h-1zM115 262h1v1h-1zM119 262h1v1h-1zM123 262h1v1h-1zM127 262h1v1h-1zM131 262h1v1h-1zM135 262h1v1h-1zM139 262h1v1h-1zM143 262h1v1h-1zM147 262h1v1h-1zM151 262h1v1h-1zM155 262h1v1h-1zM159 262h1v1h-1zM163 262h1v1h-1zM167 262h1v1h-1zM171 262h1v1h-1zM175 262h1v1h-1zM179 262h1v1h-1zM183 262h1v1h-1zM187 262h1v1h-1zM191 262h1v1h-1zM195 262h1v1h-1zM199 262h1v1h-1zM203 262h1v1h-1zM207 262h1v1h-1zM211 262h1v1h-1zM215 262h1v1h-1zM219 262h1v1h-1zM223 262h1v1h-1zM227 262h1v1h-1zM231 262h1v1h-1zM235 262h1v1h-1zM239 262h1v1h-1zM243 262h1v1h-1zM247 262h1v1h-1zM251 262h1v1h-1zM255 262h1v1h-1zM259 262h1v1h-1zM263 262h1v1h-1zM267 262h1v1h-1zM271 262h1v1h-1zM275 262h1v1h-1zM279 262h1v1h-1zM283 262h1v1h-1zM287 262h1v1h-1zM291 262h1v1h-1zM295 262h1v1h-1zM299 262h1v1h-1zM303 262h1v1h-1zM307 262h1v1h-1zM311 262h1v1h-1zM315 262h1v1h-1zM319 262h1v1h-1zM323 262h1v1h-1zM327 262h1v1h-1zM331 262h1v1h-1zM335 262h1v1h-1zM339 262h1v1h-1zM343 262h1v1h-1zM347 262h1v1h-1zM351 262h1v1h-1zM355 262h1v1h-1zM359 262h1v1h-1zM363 262h1v1h-1zM367 262h1v1h-1zM371 262h1v1h-1zM375 262h1v1h-1zM379 262h1v1h-1zM383 262h1v1h-1zM387 262h1v1h-1zM391 262h1v1h-1zM395 262h1v1h-1zM399 262h1v1h-1zM403 262h1v1h-1zM407 262h1v1h-1zM411 262h1v1h-1zM415 262h1v1h-1zM419 262h1v1h-1zM423 262h1v1h-1zM427 262h1v1h-1zM431 262h1v1h-1zM435 262h1v1h-1zM439 262h1v1h-1zM443 262h1v1h-1zM447 262h1v1h-1zM451 262h1v1h-1zM455 262h1v1h-1zM459 262h1v1h-1zM463 262h1v1h-1zM467 262h1v1h-1zM471 262h1v1h-1zM475 262h1v1h-1zM479 262h1v1h-1zM483 262h1v1h-1zM487 262h1v1h-1zM491 262h1v1h-1zM499 262h1v1h-1zM503 262h1v1h-1zM507 262h1v1h-1zM511 262h1v1h-1zM515 262h1v1h-1zM519 262h1v1h-1zM523 262h1v1h-1zM527 262h1v1h-1zM531 262h1v1h-1zM535 262h1v1h-1zM539 262h1v1h-1zM543 262h1v1h-1zM547 262h1v1h-1zM555 262h1v1h-1zM559 262h1v1h-1zM563 262h1v1h-1zM567 262h1v1h-1zM571 262h1v1h-1zM575 262h1v1h-1zM579 262h1v1h-1zM583 262h1v1h-1zM587 262h1v1h-1zM591 262h1v1h-1zM595 262h1v1h-1zM599 262h1v1h-1zM603 262h1v1h-1zM607 262h1v1h-1zM611 262h1v1h-1zM615 262h1v1h-1zM619 262h1v1h-1zM623 262h1v1h-1zM627 262h1v1h-1zM631 262h1v1h-1zM634 262h1v1h-1zM32 263h2v1h-2zM36 263h2v1h-2zM40 263h2v1h-2zM50 263h1v1h-1zM98 263h1v1h-1zM172 263h1v1h-1zM246 263h1v1h-1zM320 263h1v1h-1zM467 263h1v1h-1zM541 263h1v1h-1zM615 263h1v1h-1zM634 263h1v1h-1zM31 264h4v1h-4zM37 264h4v1h-4zM50 264h1v1h-1zM634 264h1v1h-1zM50 265h1v1h-1zM634 265h1v1h-1zM50 266h1v1h-1zM634 266h1v1h-1zM50 267h1v1h-1zM98 267h1v1h-1zM172 267h1v1h-1zM246 267h1v1h-1zM394 267h1v1h-1zM467 267h1v1h-1zM541 267h1v1h-1zM615 267h1v1h-1zM634 267h1v1h-1zM50 268h1v1h-1zM634 268h1v1h-1zM50 269h1v1h-1zM634 269h1v1h-1zM50 270h1v1h-1zM634 270h1v1h-1zM50 271h1v1h-1zM98 271h1v1h-1zM172 271h1v1h-1zM246 271h1v1h-1zM394 271h1v1h-1zM467 271h1v1h-1zM541 271h1v1h-1zM615 271h1v1h-1zM634 271h1v1h-1zM50 272h1v1h-1zM634 272h1v1h-1zM50 273h1v1h-1zM634 273h1v1h-1zM50 274h1v1h-1zM634 274h1v1h-1zM50 275h1v1h-1zM98 275h1v1h-1zM172 275h1v1h-1zM246 275h1v1h-1zM320 275h1v1h-1zM394 275h1v1h-1zM467 275h1v1h-1zM541 275h1v1h-1zM615 275h1v1h-1zM634 275h1v1h-1zM50 276h1v1h-1zM634 276h1v1h-1zM50 277h1v1h-1zM634 277h1v1h-1zM50 278h1v1h-1zM634 278h1v1h-1zM50 279h1v1h-1zM98 279h1v1h-1zM172 279h1v1h-1zM246 279h1v1h-1zM320 279h1v1h-1zM394 279h1v1h-1zM467 279h1v1h-1zM541 279h1v1h-1zM615 279h1v1h-1zM634 279h1v1h-1zM50 280h1v1h-1zM634 280h1v1h-1zM50 281h1v1h-1zM634 281h1v1h-1zM50 282h1v1h-1zM634 282h1v1h-1zM50 283h1v1h-1zM98 283h1v1h-1zM172 283h1v1h-1zM246 283h1v1h-1zM320 283h1v1h-1zM394 283h1v1h-1zM467 283h1v1h-1zM541 283h1v1h-1zM615 283h1v1h-1zM634 283h1v1h-1zM50 284h1v1h-1zM634 284h1v1h-1zM50 285h1v1h-1zM634 285h1v1h-1zM50 286h1v1h-1zM634 286h1v1h-1zM50 287h1v1h-1zM98 287h1v1h-1zM172 287h1v1h-1zM246 287h1v1h-1zM320 287h1v1h-1zM394 287h1v1h-1zM467 287h1v1h-1zM541 287h1v1h-1zM615 287h1v1h-1zM634 287h1v1h-1zM50 288h1v1h-1zM634 288h1v1h-1zM50 289h1v1h-1zM634 289h1v1h-1zM50 290h1v1h-1zM634 290h1v1h-1zM50 291h1v1h-1zM98 291h1v1h-1zM172 291h1v1h-1zM246 291h1v1h-1zM320 291h1v1h-1zM394 291h1v1h-1zM467 291h1v1h-1zM541 291h1v1h-1zM615 291h1v1h-1zM634 291h1v1h-1zM50 292h1v1h-1zM634 292h1v1h-1zM50 293h1v1h-1zM634 293h1v1h-1zM50 294h1v1h-1zM634 294h1v1h-1zM50 295h1v1h-1zM98 295h1v1h-1zM172 295h1v1h-1zM246 295h1v1h-1zM320 295h1v1h-1zM394 295h1v1h-1zM467 295h1v1h-1zM541 295h1v1h-1zM615 295h1v1h-1zM634 295h1v1h-1zM50 296h1v1h-1zM634 296h1v1h-1zM50 297h1v1h-1zM634 297h1v1h-1zM50 298h1v1h-1zM634 298h1v1h-1zM50 299h1v1h-1zM98 299h1v1h-1zM172 299h1v1h-1zM246 299h1v1h-1zM320 299h1v1h-1zM394 299h1v1h-1zM467 299h1v1h-1zM541 299h1v1h-1zM615 299h1v1h-1zM634 299h1v1h-1zM50 300h1v1h-1zM634 300h1v1h-1zM50 301h1v1h-1zM634 301h1v1h-1zM50 302h1v1h-1zM634 302h1v1h-1zM50 303h1v1h-1zM98 303h1v1h-1zM172 303h1v1h-1zM246 303h1v1h-1zM320 303h1v1h-1zM394 303h1v1h-1zM467 303h1v1h-1zM541 303h1v1h-1zM615 303h1v1h-1zM634 303h1v1h-1zM31 304h3v1h-3zM39 304h3v1h-3zM50 304h1v1h-1zM634 304h1v1h-1zM30 305h4v1h-4zM38 305h4v1h-4zM50 305h1v1h-1zM634 305h1v1h-1zM29 306h2v1h-2zM32 306h2v1h-2zM37 306h2v1h-2zM40 306h2v1h-2zM50 306h1v1h-1zM634 306h1v1h-1zM28 307h2v1h-2zM32 307h2v1h-2zM36 307h2v1h-2zM40 307h2v1h-2zM50 307h1v1h-1zM98 307h1v1h-1zM172 307h1v1h-1zM246 307h1v1h-1zM320 307h1v1h-1zM394 307h1v1h-1zM467 307h1v1h-1zM541 307h1v1h-1zM615 307h1v1h-1zM634 307h1v1h-1zM28 308h7v1h-7zM36 308h7v1h-7zM50 308h2v1h-2zM55 308h1v1h-1zM59 308h1v1h-1zM63 308h1v1h-1zM67 308h1v1h-1zM71 308h1v1h-1zM75 308h1v1h-1zM79 308h1v1h-1zM83 308h1v1h-1zM87 308h1v1h-1zM91 308h1v1h-1zM95 308h1v1h-1zM99 308h1v1h-1zM103 308h1v1h-1zM107 308h1v1h-1zM111 308h1v1h-1zM115 308h1v1h-1zM119 308h1v1h-1zM123 308h1v1h-1zM127 308h1v1h-1zM131 308h1v1h-1zM135 308h1v1h-1zM139 308h1v1h-1zM143 308h1v1h-1zM147 308h1v1h-1zM151 308h1v1h-1zM155 308h1v1h-1zM163 308h1v1h-1zM167 308h1v1h-1zM171 308h1v1h-1zM175 308h1v1h-1zM179 308h1v1h-1zM183 308h1v1h-1zM187 308h1v1h-1zM191 308h1v1h-1zM195 308h1v1h-1zM199 308h1v1h-1zM203 308h1v1h-1zM207 308h1v1h-1zM211 308h1v1h-1zM215 308h1v1h-1zM219 308h1v1h-1zM223 308h1v1h-1zM227 308h1v1h-1zM231 308h1v1h-1zM235 308h1v1h-1zM239 308h1v1h-1zM243 308h1v1h-1zM247 308h1v1h-1zM251 308h1v1h-1zM255 308h1v1h-1zM259 308h1v1h-1zM263 308h1v1h-1zM267 308h1v1h-1zM271 308h1v1h-1zM275 308h1v1h-1zM279 308h1v1h-1zM283 308h1v1h-1zM287 308h1v1h-1zM291 308h1v1h-1zM295 308h1v1h-1zM299 308h1v1h-1zM303 308h1v1h-1zM307 308h1v1h-1zM311 308h1v1h-1zM319 308h1v1h-1zM323 308h1v1h-1zM327 308h1v1h-1zM331 308h1v1h-1zM335 308h1v1h-1zM339 308h1v1h-1zM343 308h1v1h-1zM347 308h1v1h-1zM351 308h1v1h-1zM355 308h1v1h-1zM359 308h1v1h-1zM363 308h1v1h-1zM367 308h1v1h-1zM371 308h1v1h-1zM375 308h1v1h-1zM379 308h1v1h-1zM383 308h1v1h-1zM387 308h1v1h-1zM391 308h1v1h-1zM395 308h1v1h-1zM399 308h1v1h-1zM403 308h1v1h-1zM407 308h1v1h-1zM411 308h1v1h-1zM415 308h1v1h-1zM419 308h1v1h-1zM423 308h1v1h-1zM427 308h1v1h-1zM431 308h1v1h-1zM435 308h1v1h-1zM439 308h1v1h-1zM443 308h1v1h-1zM447 308h1v1h-1zM451 308h1v1h-1zM455 308h1v1h-1zM459 308h1v1h-1zM463 308h1v1h-1zM467 308h1v1h-1zM471 308h1v1h-1zM475 308h1v1h-1zM479 308h1v1h-1zM483 308h1v1h-1zM487 308h1v1h-1zM491 308h1v1h-1zM495 308h1v1h-1zM499 308h1v1h-1zM507 308h1v1h-1zM511 308h1v1h-1zM515 308h1v1h-1zM519 308h1v1h-1zM523 308h1v1h-1zM527 308h1v1h-1zM531 308h1v1h-1zM535 308h1v1h-1zM539 308h1v1h-1zM543 308h1v1h-1zM547 308h1v1h-1zM551 308h1v1h-1zM555 308h1v1h-1zM559 308h1v1h-1zM563 308h1v1h-1zM567 308h1v1h-1zM571 308h1v1h-1zM575 308h1v1h-1zM579 308h1v1h-1zM583 308h1v1h-1zM587 308h1v1h-1zM591 308h1v1h-1zM595 308h1v1h-1zM599 308h1v1h-1zM603 308h1v1h-1zM607 308h1v1h-1zM611 308h1v1h-1zM615 308h1v1h-1zM619 308h1v1h-1zM623 308h1v1h-1zM627 308h1v1h-1zM631 308h1v1h-1zM634 308h1v1h-1zM32 309h2v1h-2zM40 309h2v1h-2zM50 309h1v1h-1zM634 309h1v1h-1zM31 310h4v1h-4zM39 310h4v1h-4zM50 310h1v1h-1zM634 310h1v1h-1zM50 311h1v1h-1zM98 311h1v1h-1zM172 311h1v1h-1zM246 311h1v1h-1zM320 311h1v1h-1zM394 311h1v1h-1zM467 311h1v1h-1zM541 311h1v1h-1zM615 311h1v1h-1zM634 311h1v1h-1zM50 312h1v1h-1zM634 312h1v1h-1zM50 313h1v1h-1zM634 313h1v1h-1zM50 314h1v1h-1zM634 314h1v1h-1zM50 315h1v1h-1zM98 315h1v1h-1zM172 315h1v1h-1zM246 315h1v1h-1zM320 315h1v1h-1zM394 315h1v1h-1zM467 315h1v1h-1zM541 315h1v1h-1zM615 315h1v1h-1zM634 315h1v1h-1zM50 316h1v1h-1zM634 316h1v1h-1zM50 317h1v1h-1zM634 317h1v1h-1zM50 318h1v1h-1zM634 318h1v1h-1zM50 319h1v1h-1zM98 319h1v1h-1zM172 319h1v1h-1zM246 319h1v1h-1zM320 319h1v1h-1zM394 319h1v1h-1zM467 319h1v1h-1zM541 319h1v1h-1zM615 319h1v1h-1zM634 319h1v1h-1zM50 320h1v1h-1zM634 320h1v1h-1zM50 321h1v1h-1zM634 321h1v1h-1zM50 322h1v1h-1zM634 322h1v1h-1zM50 323h1v1h-1zM98 323h1v1h-1zM172 323h1v1h-1zM246 323h1v1h-1zM320 323h1v1h-1zM394 323h1v1h-1zM467 323h1v1h-1zM541 323h1v1h-1zM615 323h1v1h-1zM634 323h1v1h-1zM50 324h1v1h-1zM634 324h1v1h-1zM50 325h1v1h-1zM634 325h1v1h-1zM50 326h1v1h-1zM634 326h1v1h-1zM50 327h1v1h-1zM98 327h1v1h-1zM172 327h1v1h-1zM246 327h1v1h-1zM320 327h1v1h-1zM394 327h1v1h-1zM467 327h1v1h-1zM541 327h1v1h-1zM615 327h1v1h-1zM634 327h1v1h-1zM50 328h1v1h-1zM634 328h1v1h-1zM50 329h1v1h-1zM634 329h1v1h-1zM50 330h1v1h-1zM634 330h1v1h-1zM50 331h1v1h-1zM98 331h1v1h-1zM172 331h1v1h-1zM246 331h1v1h-1zM320 331h1v1h-1zM394 331h1v1h-1zM467 331h1v1h-1zM541 331h1v1h-1zM615 331h1v1h-1zM634 331h1v1h-1zM50 332h1v1h-1zM634 332h1v1h-1zM50 333h1v1h-1zM634 333h1v1h-1zM50 334h1v1h-1zM634 334h1v1h-1zM50 335h1v1h-1zM98 335h1v1h-1zM172 335h1v1h-1zM246 335h1v1h-1zM320 335h1v1h-1zM394 335h1v1h-1zM467 335h1v1h-1zM541 335h1v1h-1zM615 335h1v1h-1zM634 335h1v1h-1zM50 336h1v1h-1zM634 336h1v1h-1zM50 337h1v1h-1zM634 337h1v1h-1zM50 338h1v1h-1zM634 338h1v1h-1zM50 339h1v1h-1zM98 339h1v1h-1zM172 339h1v1h-1zM246 339h1v1h-1zM320 339h1v1h-1zM394 339h1v1h-1zM467 339h1v1h-1zM541 339h1v1h-1zM615 339h1v1h-1zM634 339h1v1h-1zM50 340h1v1h-1zM634 340h1v1h-1zM50 341h1v1h-1zM634 341h1v1h-1zM50 342h1v1h-1zM634 342h1v1h-1zM50 343h1v1h-1zM98 343h1v1h-1zM172 343h1v1h-1zM246 343h1v1h-1zM320 343h1v1h-1zM394 343h1v1h-1zM467 343h1v1h-1zM541 343h1v1h-1zM615 343h1v1h-1zM634 343h1v1h-1zM50 344h1v1h-1zM634 344h1v1h-1zM50 345h1v1h-1zM634 345h1v1h-1zM50 346h1v1h-1zM634 346h1v1h-1zM50 347h1v1h-1zM98 347h1v1h-1zM172 347h1v1h-1zM246 347h1v1h-1zM320 347h1v1h-1zM394 347h1v1h-1zM467 347h1v1h-1zM541 347h1v1h-1zM615 347h1v1h-1zM634 347h1v1h-1zM50 348h1v1h-1zM634 348h1v1h-1zM50 349h1v1h-1zM634 349h1v1h-1zM31 350h3v1h-3zM37 350h4v1h-4zM50 350h1v1h-1zM634 350h1v1h-1zM30 351h4v1h-4zM36 351h2v1h-2zM40 351h2v1h-2zM50 351h1v1h-1zM98 351h1v1h-1zM172 351h1v1h-1zM246 351h1v1h-1zM320 351h1v1h-1zM394 351h1v1h-1zM467 351h1v1h-1zM541 351h1v1h-1zM615 351h1v1h-1zM634 351h1v1h-1zM29 352h2v1h-2zM32 352h2v1h-2zM40 352h2v1h-2zM50 352h1v1h-1zM634 352h1v1h-1zM28 353h2v1h-2zM32 353h2v1h-2zM38 353h3v1h-3zM50 353h1v1h-1zM634 353h1v1h-1zM28 354h7v1h-7zM37 354h2v1h-2zM50 354h2v1h-2zM55 354h1v1h-1zM59 354h1v1h-1zM63 354h1v1h-1zM67 354h1v1h-1zM71 354h1v1h-1zM75 354h1v1h-1zM79 354h1v1h-1zM83 354h1v1h-1zM87 354h1v1h-1zM91 354h1v1h-1zM95 354h1v1h-1zM99 354h1v1h-1zM103 354h1v1h-1zM107 354h1v1h-1zM111 354h1v1h-1zM115 354h1v1h-1zM119 354h1v1h-1zM123 354h1v1h-1zM127 354h1v1h-1zM131 354h1v1h-1zM135 354h1v1h-1zM139 354h1v1h-1zM143 354h1v1h-1zM147 354h1v1h-1zM151 354h1v1h-1zM155 354h1v1h-1zM159 354h1v1h-1zM163 354h1v1h-1zM167 354h1v1h-1zM171 354h1v1h-1zM175 354h1v1h-1zM179 354h1v1h-1zM183 354h1v1h-1zM187 354h1v1h-1zM191 354h1v1h-1zM195 354h1v1h-1zM199 354h1v1h-1zM203 354h1v1h-1zM207 354h1v1h-1zM211 354h1v1h-1zM215 354h1v1h-1zM219 354h1v1h-1zM227 354h1v1h-1zM231 354h1v1h-1zM235 354h1v1h-1zM239 354h1v1h-1zM243 354h1v1h-1zM247 354h1v1h-1zM251 354h1v1h-1zM255 354h1v1h-1zM259 354h1v1h-1zM263 354h1v1h-1zM267 354h1v1h-1zM271 354h1v1h-1zM275 354h1v1h-1zM279 354h1v1h-1zM283 354h1v1h-1zM287 354h1v1h-1zM291 354h1v1h-1zM295 354h1v1h-1zM299 354h1v1h-1zM303 354h1v1h-1zM307 354h1v1h-1zM311 354h1v1h-1zM315 354h1v1h-1zM319 354h1v1h-1zM323 354h1v1h-1zM327 354h1v1h-1zM331 354h1v1h-1zM335 354h1v1h-1zM339 354h1v1h-1zM343 354h1v1h-1zM347 354h1v1h-1zM351 354h1v1h-1zM355 354h1v1h-1zM359 354h1v1h-1zM363 354h1v1h-1zM367 354h1v1h-1zM371 354h1v1h-1zM375 354h1v1h-1zM379 354h1v1h-1zM387 354h1v1h-1zM391 354h1v1h-1zM395 354h1v1h-1zM399 354h1v1h-1zM403 354h1v1h-1zM407 354h1v1h-1zM411 354h1v1h-1zM415 354h1v1h-1zM419 354h1v1h-1zM423 354h1v1h-1zM427 354h1v1h-1zM431 354h1v1h-1zM435 354h1v1h-1zM439 354h1v1h-1zM443 354h1v1h-1zM447 354h1v1h-1zM451 354h1v1h-1zM455 354h1v1h-1zM459 354h1v1h-1zM463 354h1v1h-1zM467 354h1v1h-1zM471 354h1v1h-1zM475 354h1v1h-1zM479 354h1v1h-1zM483 354h1v1h-1zM487 354h1v1h-1zM491 354h1v1h-1zM495 354h1v1h-1zM499 354h1v1h-1zM503 354h1v1h-1zM515 354h1v1h-1zM519 354h1v1h-1zM523 354h1v1h-1zM527 354h1v1h-1zM531 354h1v1h-1zM535 354h1v1h-1zM539 354h1v1h-1zM543 354h1v1h-1zM547 354h1v1h-1zM551 354h1v1h-1zM555 354h1v1h-1zM559 354h1v1h-1zM563 354h1v1h-1zM567 354h1v1h-1zM571 354h1v1h-1zM575 354h1v1h-1zM579 354h1v1h-1zM583 354h1v1h-1zM587 354h1v1h-1zM591 354h1v1h-1zM595 354h1v1h-1zM599 354h1v1h-1zM603 354h1v1h-1zM607 354h1v1h-1zM611 354h1v1h-1zM615 354h1v1h-1zM619 354h1v1h-1zM623 354h1v1h-1zM627 354h1v1h-1zM631 354h1v1h-1zM634 354h1v1h-1zM32 355h2v1h-2zM36 355h2v1h-2zM40 355h2v1h-2zM50 355h1v1h-1zM98 355h1v1h-1zM172 355h1v1h-1zM246 355h1v1h-1zM320 355h1v1h-1zM394 355h1v1h-1zM467 355h1v1h-1zM541 355h1v1h-1zM615 355h1v1h-1zM634 355h1v1h-1zM31 356h4v1h-4zM36 356h6v1h-6zM50 356h1v1h-1zM634 356h1v1h-1zM50 357h1v1h-1zM634 357h1v1h-1zM50 358h1v1h-1zM634 358h1v1h-1zM50 359h1v1h-1zM98 359h1v1h-1zM172 359h1v1h-1zM246 359h1v1h-1zM320 359h1v1h-1zM394 359h1v1h-1zM467 359h1v1h-1zM541 359h1v1h-1zM615 359h1v1h-1zM634 359h1v1h-1zM50 360h1v1h-1zM634 360h1v1h-1zM50 361h1v1h-1zM634 361h1v1h-1zM50 362h1v1h-1zM634 362h1v1h-1zM50 363h1v1h-1zM98 363h1v1h-1zM172 363h1v1h-1zM246 363h1v1h-1zM320 363h1v1h-1zM394 363h1v1h-1zM467 363h1v1h-1zM541 363h1v1h-1zM615 363h1v1h-1zM634 363h1v1h-1zM50 364h1v1h-1zM634 364h1v1h-1zM50 365h1v1h-1zM634 365h1v1h-1zM50 366h1v1h-1zM634 366h1v1h-1zM50 367h1v1h-1zM98 367h1v1h-1zM172 367h1v1h-1zM246 367h1v1h-1zM320 367h1v1h-1zM394 367h1v1h-1zM467 367h1v1h-1zM541 367h1v1h-1zM615 367h1v1h-1zM634 367h1v1h-1zM50 368h1v1h-1zM634 368h1v1h-1zM50 369h1v1h-1zM634 369h1v1h-1zM50 370h1v1h-1zM634 370h1v1h-1zM50 371h1v1h-1zM98 371h1v1h-1zM172 371h1v1h-1zM246 371h1v1h-1zM320 371h1v1h-1zM394 371h1v1h-1zM467 371h1v1h-1zM541 371h1v1h-1zM615 371h1v1h-1zM634 371h1v1h-1zM50 372h1v1h-1zM634 372h1v1h-1zM50 373h1v1h-1zM634 373h1v1h-1zM50 374h1v1h-1zM634 374h1v1h-1zM50 375h1v1h-1zM98 375h1v1h-1zM172 375h1v1h-1zM246 375h1v1h-1zM320 375h1v1h-1zM394 375h1v1h-1zM467 375h1v1h-1zM541 375h1v1h-1zM615 375h1v1h-1zM634 375h1v1h-1zM50 376h1v1h-1zM634 376h1v1h-1zM50 377h1v1h-1zM634 377h1v1h-1zM50 378h1v1h-1zM634 378h1v1h-1zM50 379h1v1h-1zM98 379h1v1h-1zM172 379h1v1h-1zM246 379h1v1h-1zM320 379h1v1h-1zM394 379h1v1h-1zM467 379h1v1h-1zM541 379h1v1h-1zM615 379h1v1h-1zM634 379h1v1h-1zM50 380h1v1h-1zM634 380h1v1h-1zM50 381h1v1h-1zM634 381h1v1h-1zM50 382h1v1h-1zM634 382h1v1h-1zM50 383h1v1h-1zM98 383h1v1h-1zM172 383h1v1h-1zM246 383h1v1h-1zM320 383h1v1h-1zM394 383h1v1h-1zM467 383h1v1h-1zM541 383h1v1h-1zM615 383h1v1h-1zM634 383h1v1h-1zM50 384h1v1h-1zM634 384h1v1h-1zM50 385h1v1h-1zM634 385h1v1h-1zM50 386h1v1h-1zM634 386h1v1h-1zM50 387h1v1h-1zM98 387h1v1h-1zM172 387h1v1h-1zM246 387h1v1h-1zM320 387h1v1h-1zM394 387h1v1h-1zM467 387h1v1h-1zM541 387h1v1h-1zM615 387h1v1h-1zM634 387h1v1h-1zM50 388h1v1h-1zM634 388h1v1h-1zM50 389h1v1h-1zM634 389h1v1h-1zM50 390h1v1h-1zM634 390h1v1h-1zM50 391h1v1h-1zM98 391h1v1h-1zM172 391h1v1h-1zM246 391h1v1h-1zM320 391h1v1h-1zM394 391h1v1h-1zM467 391h1v1h-1zM541 391h1v1h-1zM615 391h1v1h-1zM634 391h1v1h-1zM50 392h1v1h-1zM634 392h1v1h-1zM50 393h1v1h-1zM634 393h1v1h-1zM50 394h1v1h-1zM634 394h1v1h-1zM50 395h1v1h-1zM98 395h1v1h-1zM172 395h1v1h-1zM246 395h1v1h-1zM320 395h1v1h-1zM394 395h1v1h-1zM467 395h1v1h-1zM541 395h1v1h-1zM615 395h1v1h-1zM634 395h1v1h-1zM31 396h3v1h-3zM37 396h5v1h-5zM50 396h1v1h-1zM634 396h1v1h-1zM30 397h4v1h-4zM36 397h2v1h-2zM41 397h2v1h-2zM50 397h1v1h-1zM634 397h1v1h-1zM29 398h2v1h-2zM32 398h2v1h-2zM36 398h2v1h-2zM41 398h2v1h-2zM50 398h1v1h-1zM634 398h1v1h-1zM28 399h2v1h-2zM32 399h2v1h-2zM36 399h2v1h-2zM41 399h2v1h-2zM50 399h1v1h-1zM98 399h1v1h-1zM172 399h1v1h-1zM246 399h1v1h-1zM320 399h1v1h-1zM394 399h1v1h-1zM467 399h1v1h-1zM541 399h1v1h-1zM615 399h1v1h-1zM634 399h1v1h-1zM28 400h7v1h-7zM36 400h2v1h-2zM41 400h2v1h-2zM50 400h2v1h-2zM55 400h1v1h-1zM59 400h1v1h-1zM63 400h1v1h-1zM67 400h1v1h-1zM71 400h1v1h-1zM75 400h1v1h-1zM79 400h1v1h-1zM83 400h1v1h-1zM87 400h1v1h-1zM91 400h1v1h-1zM95 400h1v1h-1zM99 400h1v1h-1zM103 400h1v1h-1zM107 400h1v1h-1zM111 400h1v1h-1zM115 400h1v1h-1zM119 400h1v1h-1zM123 400h1v1h-1zM127 400h1v1h-1zM131 400h1v1h-1zM135 400h1v1h-1zM139 400h1v1h-1zM143 400h1v1h-1zM147 400h1v1h-1zM151 400h1v1h-1zM155 400h1v1h-1zM159 400h1v1h-1zM163 400h1v1h-1zM167 400h1v1h-1zM171 400h1v1h-1zM175 400h1v1h-1zM179 400h1v1h-1zM183 400h1v1h-1zM187 400h1v1h-1zM191 400h1v1h-1zM195 400h1v1h-1zM199 400h1v1h-1zM203 400h1v1h-1zM207 400h1v1h-1zM211 400h1v1h-1zM215 400h1v1h-1zM219 400h1v1h-1zM223 400h1v1h-1zM227 400h1v1h-1zM231 400h1v1h-1zM235 400h1v1h-1zM239 400h1v1h-1zM243 400h1v1h-1zM247 400h1v1h-1zM251 400h1v1h-1zM255 400h1v1h-1zM259 400h1v1h-1zM263 400h1v1h-1zM267 400h1v1h-1zM271 400h1v1h-1zM275 400h1v1h-1zM279 400h1v1h-1zM283 400h1v1h-1zM287 400h1v1h-1zM291 400h1v1h-1zM295 400h1v1h-1zM299 400h1v1h-1zM307 400h1v1h-1zM311 400h1v1h-1zM315 400h1v1h-1zM319 400h1v1h-1zM323 400h1v1h-1zM327 400h1v1h-1zM331 400h1v1h-1zM335 400h1v1h-1zM339 400h1v1h-1zM343 400h1v1h-1zM347 400h1v1h-1zM351 400h1v1h-1zM355 400h1v1h-1zM359 400h1v1h-1zM363 400h1v1h-1zM367 400h1v1h-1zM371 400h1v1h-1zM375 400h1v1h-1zM379 400h1v1h-1zM383 400h1v1h-1zM387 400h1v1h-1zM391 400h1v1h-1zM395 400h1v1h-1zM399 400h1v1h-1zM403 400h1v1h-1zM407 400h1v1h-1zM411 400h1v1h-1zM415 400h1v1h-1zM419 400h1v1h-1zM423 400h1v1h-1zM427 400h1v1h-1zM431 400h1v1h-1zM435 400h1v1h-1zM439 400h1v1h-1zM443 400h1v1h-1zM451 400h1v1h-1zM455 400h1v1h-1zM459 400h1v1h-1zM463 400h1v1h-1zM467 400h1v1h-1zM471 400h1v1h-1zM475 400h1v1h-1zM479 400h1v1h-1zM483 400h1v1h-1zM487 400h1v1h-1zM491 400h1v1h-1zM495 400h1v1h-1zM499 400h1v1h-1zM503 400h1v1h-1zM507 400h1v1h-1zM511 400h1v1h-1zM515 400h1v1h-1zM519 400h1v1h-1zM523 400h1v1h-1zM527 400h1v1h-1zM531 400h1v1h-1zM535 400h1v1h-1zM539 400h1v1h-1zM543 400h1v1h-1zM547 400h1v1h-1zM551 400h1v1h-1zM555 400h1v1h-1zM559 400h1v1h-1zM567 400h1v1h-1zM571 400h1v1h-1zM575 400h1v1h-1zM579 400h1v1h-1zM583 400h1v1h-1zM587 400h1v1h-1zM591 400h1v1h-1zM595 400h1v1h-1zM599 400h1v1h-1zM603 400h1v1h-1zM607 400h1v1h-1zM611 400h1v1h-1zM615 400h1v1h-1zM619 400h1v1h-1zM623 400h1v1h-1zM627 400h1v1h-1zM631 400h1v1h-1zM634 400h1v1h-1zM32 401h2v1h-2zM36 401h2v1h-2zM41 401h2v1h-2zM50 401h1v1h-1zM634 401h1v1h-1zM31 402h4v1h-4zM37 402h5v1h-5zM50 402h1v1h-1zM634 402h1v1h-1zM50 403h1v1h-1zM98 403h1v1h-1zM172 403h1v1h-1zM246 403h1v1h-1zM320 403h1v1h-1zM394 403h1v1h-1zM467 403h1v1h-1zM541 403h1v1h-1zM615 403h1v1h-1zM634 403h1v1h-1zM50 404h1v1h-1zM634 404h1v1h-1zM50 405h1v1h-1zM634 405h1v1h-1zM50 406h1v1h-1zM634 406h1v1h-1zM50 407h1v1h-1zM98 407h1v1h-1zM172 407h1v1h-1zM246 407h1v1h-1zM320 407h1v1h-1zM394 407h1v1h-1zM467 407h1v1h-1zM541 407h1v1h-1zM615 407h1v1h-1zM634 407h1v1h-1zM50 408h1v1h-1zM634 408h1v1h-1zM50 409h1v1h-1zM634 409h1v1h-1zM50 410h1v1h-1zM634 410h1v1h-1zM50 411h1v1h-1zM98 411h1v1h-1zM172 411h1v1h-1zM246 411h1v1h-1zM320 411h1v1h-1zM394 411h1v1h-1zM467 411h1v1h-1zM541 411h1v1h-1zM615 411h1v1h-1zM634 411h1v1h-1zM50 412h1v1h-1zM634 412h1v1h-1zM50 413h1v1h-1zM634 413h1v1h-1zM50 414h1v1h-1zM634 414h1v1h-1zM50 415h1v1h-1zM98 415h1v1h-1zM172 415h1v1h-1zM246 415h1v1h-1zM320 415h1v1h-1zM394 415h1v1h-1zM467 415h1v1h-1zM541 415h1v1h-1zM615 415h1v1h-1zM634 415h1v1h-1zM50 416h1v1h-1zM634 416h1v1h-1zM50 417h1v1h-1zM634 417h1v1h-1zM50 418h1v1h-1zM634 418h1v1h-1zM50 419h1v1h-1zM98 419h1v1h-1zM172 419h1v1h-1zM246 419h1v1h-1zM320 419h1v1h-1zM394 419h1v1h-1zM467 419h1v1h-1zM541 419h1v1h-1zM615 419h1v1h-1zM634 419h1v1h-1zM50 420h1v1h-1zM634 420h1v1h-1zM50 421h1v1h-1zM634 421h1v1h-1zM50 422h1v1h-1zM634 422h1v1h-1zM50 423h1v1h-1zM98 423h1v1h-1zM172 423h1v1h-1zM246 423h1v1h-1zM320 423h1v1h-1zM394 423h1v1h-1zM467 423h1v1h-1zM541 423h1v1h-1zM615 423h1v1h-1zM634 423h1v1h-1zM50 424h1v1h-1zM634 424h1v1h-1zM50 425h1v1h-1zM634 425h1v1h-1zM50 426h1v1h-1zM634 426h1v1h-1zM50 427h1v1h-1zM98 427h1v1h-1zM172 427h1v1h-1zM246 427h1v1h-1zM320 427h1v1h-1zM394 427h1v1h-1zM467 427h1v1h-1zM541 427h1v1h-1zM615 427h1v1h-1zM634 427h1v1h-1zM50 428h1v1h-1zM634 428h1v1h-1zM50 429h1v1h-1zM634 429h1v1h-1zM50 430h1v1h-1zM634 430h1v1h-1zM50 431h1v1h-1zM98 431h1v1h-1zM172 431h1v1h-1zM246 431h1v1h-1zM320 431h1v1h-1zM394 431h1v1h-1zM467 431h1v1h-1zM541 431h1v1h-1zM615 431h1v1h-1zM634 431h1v1h-1zM50 432h1v1h-1zM634 432h1v1h-1zM50 433h1v1h-1zM634 433h1v1h-1zM50 434h585v1h-585zM608 438h23v1h-23zM608 439h23v1h-23zM608 440h23v1h-23zM608 441h23v1h-23zM608 442h23v1h-23zM608 443h23v1h-23zM91 444h4v1h-4zM99 444h5v1h-5zM165 444h4v1h-4zM173 444h5v1h-5zM241 444h3v1h-3zM247 444h5v1h-5zM312 444h6v1h-6zM321 444h5v1h-5zM388 444h3v1h-3zM395 444h5v1h-5zM459 444h6v1h-6zM468 444h5v1h-5zM534 444h4v1h-4zM542 444h5v1h-5zM608 444h2v1h-2zM612 444h2v1h-2zM617 444h3v1h-3zM622 444h2v1h-2zM627 444h4v1h-4zM90 445h2v1h-2zM94 445h2v1h-2zM98 445h2v1h-2zM103 445h2v1h-2zM164 445h2v1h-2zM168 445h2v1h-2zM172 445h2v1h-2zM177 445h2v1h-2zM240 445h4v1h-4zM246 445h2v1h-2zM251 445h2v1h-2zM312 445h2v1h-2zM320 445h2v1h-2zM325 445h2v1h-2zM387 445h2v1h-2zM394 445h2v1h-2zM399 445h2v1h-2zM459 445h2v1h-2zM463 445h2v1h-2zM467 445h2v1h-2zM472 445h2v1h-2zM533 445h2v1h-2zM537 445h2v1h-2zM541 445h2v1h-2zM546 445h2v1h-2zM608 445h2v1h-2zM619 445h1v1h-1zM629 445h2v1h-2zM94 446h2v1h-2zM98 446h2v1h-2zM103 446h2v1h-2zM168 446h2v1h-2zM172 446h2v1h-2zM177 446h2v1h-2zM239 446h2v1h-2zM242 446h2v1h-2zM246 446h2v1h-2zM251 446h2v1h-2zM312 446h5v1h-5zM320 446h2v1h-2zM325 446h2v1h-2zM386 446h2v1h-2zM394 446h2v1h-2zM399 446h2v1h-2zM463 446h2v1h-2zM467 446h2v1h-2zM472 446h2v1h-2zM533 446h2v1h-2zM537 446h2v1h-2zM541 446h2v1h-2zM546 446h2v1h-2zM608 446h2v1h-2zM619 446h1v1h-1zM629 446h2v1h-2zM92 447h3v1h-3zM98 447h2v1h-2zM103 447h2v1h-2zM166 447h3v1h-3zM172 447h2v1h-2zM177 447h2v1h-2zM238 447h2v1h-2zM242 447h2v1h-2zM246 447h2v1h-2zM251 447h2v1h-2zM316 447h2v1h-2zM320 447h2v1h-2zM325 447h2v1h-2zM386 447h5v1h-5zM394 447h2v1h-2zM399 447h2v1h-2zM462 447h2v1h-2zM467 447h2v1h-2zM472 447h2v1h-2zM534 447h4v1h-4zM541 447h2v1h-2zM546 447h2v1h-2zM608 447h2v1h-2zM619 447h1v1h-1zM629 447h2v1h-2zM91 448h2v1h-2zM98 448h2v1h-2zM103 448h2v1h-2zM168 448h2v1h-2zM172 448h2v1h-2zM177 448h2v1h-2zM238 448h7v1h-7zM246 448h2v1h-2zM251 448h2v1h-2zM316 448h2v1h-2zM320 448h2v1h-2zM325 448h2v1h-2zM386 448h2v1h-2zM390 448h2v1h-2zM394 448h2v1h-2zM399 448h2v1h-2zM461 448h2v1h-2zM467 448h2v1h-2zM472 448h2v1h-2zM533 448h2v1h-2zM537 448h2v1h-2zM541 448h2v1h-2zM546 448h2v1h-2zM608 448h2v1h-2zM619 448h1v1h-1zM629 448h2v1h-2zM90 449h2v1h-2zM94 449h2v1h-2zM98 449h2v1h-2zM103 449h2v1h-2zM164 449h2v1h-2zM168 449h2v1h-2zM172 449h2v1h-2zM177 449h2v1h-2zM242 449h2v1h-2zM246 449h2v1h-2zM251 449h2v1h-2zM312 449h2v1h-2zM316 449h2v1h-2zM320 449h2v1h-2zM325 449h2v1h-2zM386 449h2v1h-2zM390 449h2v1h-2zM394 449h2v1h-2zM399 449h2v1h-2zM461 449h2v1h-2zM467 449h2v1h-2zM472 449h2v1h-2zM533 449h2v1h-2zM537 449h2v1h-2zM541 449h2v1h-2zM546 449h2v1h-2zM608 449h3v1h-3zM614 449h2v1h-2zM619 449h2v1h-2zM624 449h2v1h-2zM629 449h2v1h-2zM90 450h6v1h-6zM99 450h5v1h-5zM165 450h4v1h-4zM173 450h5v1h-5zM241 450h4v1h-4zM247 450h5v1h-5zM313 450h4v1h-4zM321 450h5v1h-5zM387 450h4v1h-4zM395 450h5v1h-5zM461 450h2v1h-2zM468 450h5v1h-5zM534 450h4v1h-4zM542 450h5v1h-5zM608 450h3v1h-3zM614 450h2v1h-2zM619 450h2v1h-2zM624 450h2v1h-2zM629 450h2v1h-2zM608 451h23v1h-23zM608 452h23v1h-23z"/>
<path fill="#ff55ff" d="M0 440h17v1h-17zM0 441h1v1h-1zM16 441h1v1h-1zM0 442h1v1h-1zM16 442h1v1h-1zM0 443h1v1h-1zM16 443h1v1h-1zM0 444h1v1h-1zM16 444h1v1h-1zM0 445h1v1h-1zM16 445h1v1h-1zM0 446h1v1h-1zM16 446h1v1h-1zM0 447h1v1h-1zM16 447h1v1h-1zM0 448h1v1h-1zM16 448h1v1h-1zM0 449h1v1h-1zM16 449h1v1h-1zM0 450h1v1h-1zM16 450h1v1h-1zM0 451h1v1h-1zM16 451h1v1h-1zM0 452h1v1h-1zM16 452h1v1h-1zM0 453h1v1h-1zM16 453h1v1h-1zM0 454h17v1h-17z"/>
</svg></body></html>
